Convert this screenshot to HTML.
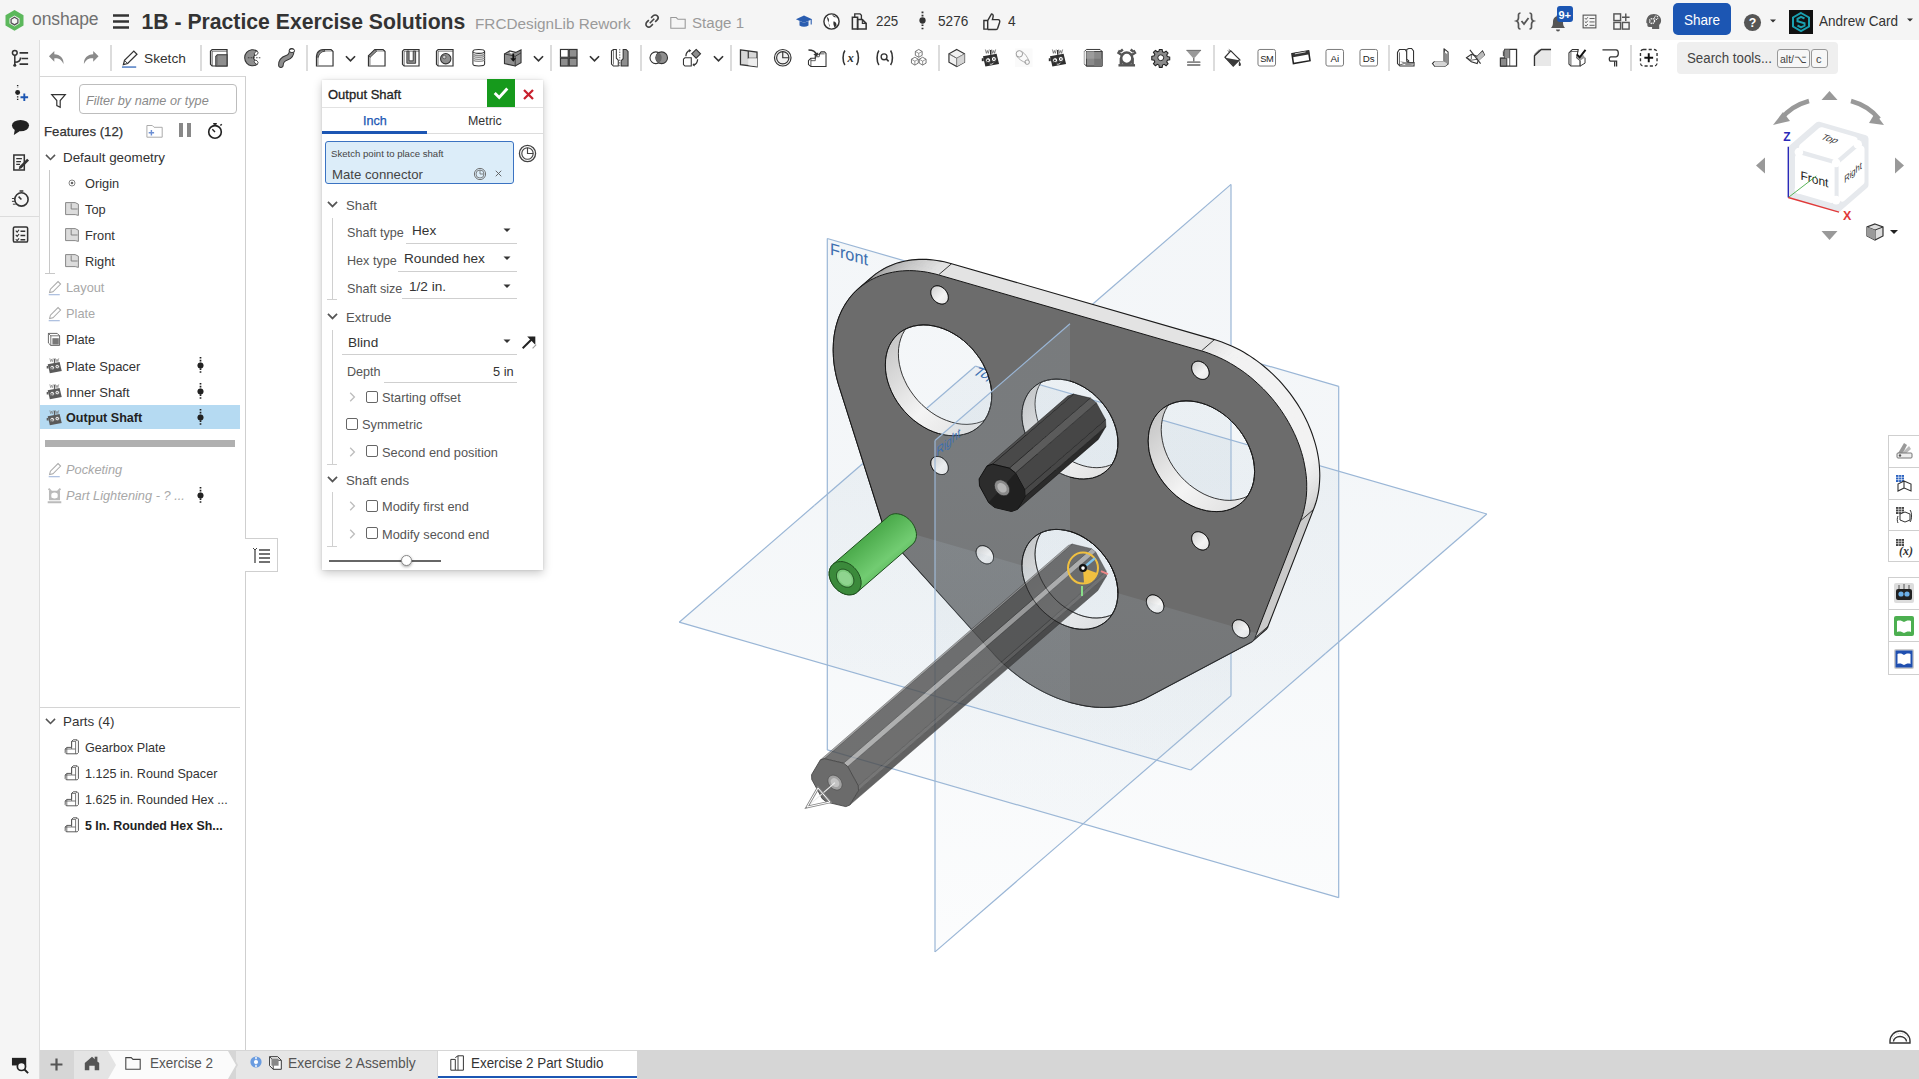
<!DOCTYPE html><html><head><meta charset='utf-8'><style>
*{box-sizing:border-box}
body{margin:0;width:1919px;height:1079px;overflow:hidden;position:relative;background:#fff;font-family:"Liberation Sans",sans-serif;color:#333}
.a{position:absolute}
.t{position:absolute;white-space:nowrap;line-height:1}
svg{position:absolute;overflow:visible}
</style></head><body>
<div class='a' style='left:0px;top:0px;width:1919px;height:40px;background:#f5f5f5'></div>
<div class='a' style='left:0px;top:40px;width:40px;height:1039px;background:#f5f5f5;border-right:1px solid #dedede'></div>
<div class='a' style='left:40px;top:40px;width:1879px;height:37px;background:#fff'></div>
<div class='a' style='left:40px;top:76px;width:206px;height:974px;background:#fff;border-right:1px solid #cfcfcf;border-top:1px solid #d6d6d6'></div>
<div class='a' style='left:0px;top:1050px;width:1919px;height:29px;background:#d6d6d6'></div>
<div class='a' style='left:0px;top:1050px;width:40px;height:29px;background:#f5f5f5;border-right:1px solid #dedede'></div>
<svg style='left:4px;top:9px' width='21' height='22' viewBox='0 0 21 22'><path d='M10.5 1l9 5.2v10.4l-9 5.2-9-5.2V6.2z' fill='#5cb85c'/><path d='M10.5 6.5l5 2.9v5.2l-5 2.9-5-2.9V9.4z' fill='#f5f5f5'/><path d='M10.5 8.3l3.4 2v3.6l-3.4 2-3.4-2v-3.6z' fill='none' stroke='#555' stroke-width='1.3'/></svg>
<div class='t' style='left:32px;top:11.2px;font-size:17.5px;color:#707070;font-weight:normal;font-style:normal;letter-spacing:-0.1px'>onshape</div>
<svg style='left:112px;top:13px' width='18' height='17' viewBox='0 0 18 17'><path d='M1 2.5h16M1 8.5h16M1 14.5h16' stroke='#333' stroke-width='2.6'/></svg>
<div class='t' style='left:141.5px;top:11.1px;font-size:21.2px;color:#333;font-weight:bold;font-style:normal;'>1B - Practice Exercise Solutions</div>
<div class='t' style='left:475px;top:15.8px;font-size:15.3px;color:#9a9a9a;font-weight:normal;font-style:normal;'>FRCDesignLib Rework</div>
<svg style='left:643.0px;top:12.0px' width='18' height='18' viewBox='0 0 20 20'><path d='M7.5 12.5l5-5' stroke='#444' stroke-width='1.8'/><path d='M9 6.5l2.3-2.3a3 3 0 0 1 4.5 4.5L13.5 11M11 13.5l-2.3 2.3a3 3 0 0 1-4.5-4.5L6.5 9' fill='none' stroke='#444' stroke-width='1.8'/></svg>
<svg style='left:669.0px;top:13.0px' width='18' height='18' viewBox='0 0 20 20'><path d='M2 5h6l2 2h8v10H2z' fill='none' stroke='#999' stroke-width='1.2'/></svg>
<div class='t' style='left:692px;top:14.6px;font-size:15.1px;color:#9a9a9a;font-weight:normal;font-style:normal;'>Stage 1</div>
<svg style='left:795.0px;top:12.0px' width='18' height='18' viewBox='0 0 20 20'><path d='M1 8l9-4 9 4-9 4z' fill='#2a5db0'/><path d='M5 10v5c3 2 7 2 10 0v-5l-5 2z' fill='#2a5db0'/><path d='M18 8v6' stroke='#2a5db0' stroke-width='1.2'/></svg>
<svg style='left:821.5px;top:11.5px' width='19' height='19' viewBox='0 0 20 20'><circle cx='10' cy='10' r='8' fill='#fff' stroke='#333' stroke-width='1.5'/><path d='M5 5c2 1 3 3 2 5s2 3 1 6M11 3c0 2 3 3 5 3M12 10c2 0 4 2 3 5l-2 1-1-3z' fill='#333'/></svg>
<svg style='left:849.5px;top:11.5px' width='19' height='19' viewBox='0 0 20 20'><path d='M2.5 5.5h5.5v12.5H2.5z' fill='none' stroke='#333' stroke-width='1.6'/><path d='M8 8h5l4 4v6H8z' fill='none' stroke='#333' stroke-width='1.6'/><path d='M5 5.5V2h5.5l1.5 1.5V8' fill='none' stroke='#333' stroke-width='1.4'/><path d='M13 8v4h4' fill='none' stroke='#333' stroke-width='1.2'/></svg>
<div class='t' style='left:875.5px;top:13.3px;font-size:15.3px;color:#333;font-weight:normal;font-style:normal;;transform:scaleX(0.87);transform-origin:0 0'>225</div>
<svg style='left:912.5px;top:10.5px' width='19' height='19' viewBox='0 0 20 20'><path d='M10 .5v19' stroke='#333' stroke-width='2' stroke-dasharray='1.8 1.6'/><circle cx='10' cy='10' r='3.3' fill='#333'/></svg>
<div class='t' style='left:937.5px;top:13.3px;font-size:15.3px;color:#333;font-weight:normal;font-style:normal;;transform:scaleX(0.89);transform-origin:0 0'>5276</div>
<svg style='left:981.5px;top:11.5px' width='19' height='19' viewBox='0 0 20 20'><path d='M2 9h4v9H2zM6 9l4-7c2 0 2 2 1.5 4L11 8h6c1.5 0 2 1.5 1.5 3l-2 6c-.4 1-1 1.5-2 1.5H6' fill='none' stroke='#333' stroke-width='1.5'/></svg>
<div class='t' style='left:1007.5px;top:13.3px;font-size:15.3px;color:#333;font-weight:normal;font-style:normal;;transform:scaleX(0.9);transform-origin:0 0'>4</div>
<svg style='left:1515.0px;top:11.0px' width='20' height='20' viewBox='0 0 20 20'><path d='M5.5 2C3 2 3.5 4 3.5 6.5S3 9.5 1.5 10c1.5.5 2 1 2 3.5S3 18 5.5 18M14.5 2c2.5 0 2 2 2 4.5s.5 3 2 3.5c-1.5.5-2 1-2 3.5s.5 4.5-2 4.5' fill='none' stroke='#555' stroke-width='1.7'/><path d='M6.5 10l2.5 3 4.5-6' fill='none' stroke='#555' stroke-width='1.8'/></svg>
<svg style='left:1548.0px;top:12.0px' width='20' height='20' viewBox='0 0 20 20'><path d='M3 16c1.5-1.5 2-3 2-6 0-3.5 2.2-6 5-6s5 2.5 5 6c0 3 .5 4.5 2 6z' fill='#555'/><path d='M8 17.5a2 2 0 0 0 4 0z' fill='#555'/><circle cx='10' cy='3.5' r='1.2' fill='#555'/></svg>
<div class='a' style='left:1557px;top:6px;width:16px;height:16px;background:#1c56b3;border-radius:3px'></div>
<div class='t' style='left:1558.5px;top:10.0px;font-size:11px;color:#fff;font-weight:bold;font-style:normal;'>9+</div>
<svg style='left:1580.5px;top:12.5px' width='17' height='17' viewBox='0 0 20 20'><rect x='2.5' y='2.5' width='15' height='15' fill='none' stroke='#555' stroke-width='1.3'/><path d='M4.5 6l1.5 1.5 2-2.5M4.5 10l1.5 1.5 2-2.5M4.5 14l1.5 1.5 2-2.5M10 6.5h6M10 10.5h6M10 14.5h6' fill='none' stroke='#555' stroke-width='1.1'/></svg>
<svg style='left:1611.5px;top:11.5px' width='19' height='19' viewBox='0 0 20 20'><rect x='2' y='2' width='7' height='7' fill='none' stroke='#555' stroke-width='1.5'/><rect x='2' y='11' width='7' height='7' fill='none' stroke='#555' stroke-width='1.5'/><rect x='11' y='11' width='7' height='7' fill='none' stroke='#555' stroke-width='1.5'/><path d='M14.5 1.5v8M10.5 5.5h8' stroke='#555' stroke-width='1.5'/></svg>
<svg style='left:1643.5px;top:11.5px' width='19' height='19' viewBox='0 0 20 20'><path d='M2.5 11.5C2 5.5 5.5 2 10.5 2c4.5 0 7.5 3.2 7.5 7 0 2.3-1 3.6-2 4.6V18H8.5v-2.2H5.3c-1.2 0-1.8-.8-1.8-2v-1.6z' fill='#606060'/><circle cx='8.5' cy='9.5' r='2.6' fill='none' stroke='#fff' stroke-width='1.4' stroke-dasharray='1.3 .8'/><circle cx='12.8' cy='6' r='1.8' fill='none' stroke='#fff' stroke-width='1.1' stroke-dasharray='1 .7'/></svg>
<div class='a' style='left:1673px;top:3px;width:58px;height:32px;background:#1c56b3;border-radius:5px'></div>
<div class='t' style='left:1684px;top:12.8px;font-size:14.3px;color:#fff;font-weight:normal;font-style:normal;;transform:scaleX(0.945);transform-origin:0 0'>Share</div>
<svg style='left:1742.5px;top:12.5px' width='19' height='19' viewBox='0 0 20 20'><circle cx='10' cy='10' r='9' fill='#555'/><text x='10' y='15' font-size='13' text-anchor='middle' font-family='Liberation Sans' font-weight='bold' fill='#fff'>?</text></svg>
<svg style='left:1768.0px;top:16.0px' width='10' height='10' viewBox='0 0 20 20'><path d='M4 7h12l-6 6z' fill='#333'/></svg>
<svg style='left:1789px;top:10px' width='24' height='24' viewBox='0 0 24 24'><rect width='24' height='24' fill='#111'/><path d='M12 3l8 4.5v9L12 21l-8-4.5v-9z' fill='none' stroke='#1aa0b0' stroke-width='2'/><path d='M15.5 8.5L12 6.8 8.5 8.8v2.4l7 2v2.4L12 17.3l-3.5-1.8' fill='none' stroke='#1aa0b0' stroke-width='2'/></svg>
<div class='t' style='left:1819px;top:13.9px;font-size:14.5px;color:#333;font-weight:normal;font-style:normal;;transform:scaleX(0.935);transform-origin:0 0'>Andrew Card</div>
<svg style='left:1905.0px;top:15.0px' width='10' height='10' viewBox='0 0 20 20'><path d='M4 7h12l-6 6z' fill='#333'/></svg>
<svg style='left:47.2px;top:48.2px' width='19.5' height='19.5' viewBox='0 0 20 20'><path d='M7.5 3L2 8.5 7.5 14v-3.5c4.5-.3 7.5 1.3 9.5 6 .3-6-3.5-9.8-9.5-10z' fill='#8a8a8a'/></svg>
<svg style='left:81.2px;top:48.2px' width='19.5' height='19.5' viewBox='0 0 20 20'><path d='M12.5 3L18 8.5 12.5 14v-3.5c-4.5-.3-7.5 1.3-9.5 6-.3-6 3.5-9.8 9.5-10z' fill='#8a8a8a'/></svg>
<svg style='left:209.2px;top:48.2px' width='19.5' height='19.5' viewBox='0 0 20 20'><path d='M1.5 3.2l1.7-1.7h15.3v17H3.2l-1.7-1.7z' fill='#fff' stroke='#333' stroke-width='1.2'/><path d='M3.2 3.2h15.3M3.2 3.2v15.3' fill='none' stroke='#333' stroke-width='.8'/><path d='M7 8.5l1.5-1.5h10v11.5H7z' fill='#8e8e8e' stroke='#333' stroke-width='1.1'/><path d='M8.5 7v11.5' stroke='#666' stroke-width='.7'/></svg>
<svg style='left:243.2px;top:48.2px' width='19.5' height='19.5' viewBox='0 0 20 20'><path d='M14.5 3.2A8.2 8.2 0 1 0 14.5 16.8L10.5 10z' fill='#8e8e8e' stroke='#333' stroke-width='1.1'/><ellipse cx='13.5' cy='5.5' rx='1.6' ry='2.3' transform='rotate(40 13.5 5.5)' fill='#fff' stroke='#333' stroke-width='.8'/><ellipse cx='13.5' cy='14.5' rx='1.6' ry='2.3' transform='rotate(-40 13.5 14.5)' fill='#fff' stroke='#333' stroke-width='.8'/><path d='M5 10h14' stroke='#333' stroke-width='.9' stroke-dasharray='1.6 1.2'/></svg>
<svg style='left:277.2px;top:48.2px' width='19.5' height='19.5' viewBox='0 0 20 20'><path d='M4 17.5c0-5 3-6.5 6-7.5s5-2.5 5-7' fill='none' stroke='#333' stroke-width='5.8' stroke-linecap='round'/><path d='M4 17.5c0-5 3-6.5 6-7.5s5-2.5 5-7' fill='none' stroke='#8e8e8e' stroke-width='3.8' stroke-linecap='round'/><ellipse cx='15.3' cy='2.8' rx='2.7' ry='1.9' fill='#fff' stroke='#333' stroke-width='1'/></svg>
<svg style='left:315.2px;top:48.2px' width='19.5' height='19.5' viewBox='0 0 20 20'><path d='M1.5 18.5V8.5C1.5 4.5 4.5 1.5 8.5 1.5h8l2 2v15z' fill='#fff' stroke='#333' stroke-width='1.2'/><path d='M3 17.5V9C3 5.5 5.5 3 9 3h9.5' fill='none' stroke='#333' stroke-width='.7'/><path d='M1.8 8.5C2.5 4.5 5 2 9 1.8l1.2 1.5C6.5 3.5 4 6 3.3 9.8z' fill='#8e8e8e' stroke='#333' stroke-width='.8'/></svg>
<svg style='left:343.5px;top:51.5px' width='13' height='13' viewBox='0 0 20 20'><path d='M3 6.5l7 7 7-7' fill='none' stroke='#333' stroke-width='2.6'/></svg>
<svg style='left:367.2px;top:48.2px' width='19.5' height='19.5' viewBox='0 0 20 20'><path d='M1.5 18.5V8l6.5-6.5h8.5l2 2v15z' fill='#fff' stroke='#333' stroke-width='1.2'/><path d='M3 17.5V9L9.5 3h9' fill='none' stroke='#333' stroke-width='.7'/><path d='M1.8 8L8 1.8l2 1.4L3.3 9.5z' fill='#8e8e8e' stroke='#333' stroke-width='.8'/></svg>
<svg style='left:401.2px;top:48.2px' width='19.5' height='19.5' viewBox='0 0 20 20'><path d='M1.5 3.2l1.7-1.7h15.3v17H3.2l-1.7-1.7z' fill='#fff' stroke='#333' stroke-width='1.2'/><path d='M3.2 3.2h15.3M3.2 3.2v15.3' fill='none' stroke='#333' stroke-width='.7'/><path d='M6 3.2v12.5h9V3.2h-2.5v10H8.3V3.2z' fill='#8e8e8e' stroke='#333' stroke-width='.9'/></svg>
<svg style='left:435.2px;top:48.2px' width='19.5' height='19.5' viewBox='0 0 20 20'><path d='M1.5 3.2l1.7-1.7h15.3v17H3.2l-1.7-1.7z' fill='#fff' stroke='#333' stroke-width='1.2'/><path d='M3.2 3.2h15.3M3.2 3.2v15.3' fill='none' stroke='#333' stroke-width='.7'/><circle cx='11' cy='11' r='5.3' fill='#8e8e8e' stroke='#333' stroke-width='1.1'/><circle cx='9.5' cy='9.3' r='1.8' fill='#ccc' stroke='#333' stroke-width='.6'/></svg>
<svg style='left:469.2px;top:48.2px' width='19.5' height='19.5' viewBox='0 0 20 20'><path d='M4 3.5v13c0 2.7 12 2.7 12 0v-13' fill='#fff' stroke='#333' stroke-width='1.1'/><ellipse cx='10' cy='3.5' rx='6' ry='2' fill='#fff' stroke='#333' stroke-width='1.1'/><path d='M4 6.5c3 1.6 9 1.6 12 0M4 8.5c3 1.6 9 1.6 12 0M4 10.5c3 1.6 9 1.6 12 0M4 12.5c3 1.6 9 1.6 12 0' fill='none' stroke='#8e8e8e' stroke-width='1.3'/></svg>
<svg style='left:503.2px;top:48.2px' width='19.5' height='19.5' viewBox='0 0 20 20'><path d='M1.5 6l5.5-3 6 1.5 5.5-2.5v13l-6 3.5L1.5 16z' fill='#8e8e8e' stroke='#333' stroke-width='1.1'/><path d='M1.5 6l11 2.5v10.5M12.5 8.5L18.5 5' fill='none' stroke='#333' stroke-width='.9'/><path d='M7 4.5l4 1' stroke='#fff' stroke-width='1.5'/><path d='M10.5 5.5v6.5' stroke='#111' stroke-width='1.8'/><path d='M7.5 10.5l3 3.5 3-3.5z' fill='#111'/></svg>
<svg style='left:531.5px;top:51.5px' width='13' height='13' viewBox='0 0 20 20'><path d='M3 6.5l7 7 7-7' fill='none' stroke='#333' stroke-width='2.6'/></svg>
<svg style='left:559.2px;top:48.2px' width='19.5' height='19.5' viewBox='0 0 20 20'><rect x='1.5' y='1.5' width='8' height='8' fill='#fff' stroke='#333' stroke-width='1.2'/><rect x='10.5' y='1.5' width='8' height='8' fill='#8e8e8e' stroke='#333' stroke-width='1.2'/><rect x='1.5' y='10.5' width='8' height='8' fill='#8e8e8e' stroke='#333' stroke-width='1.2'/><rect x='10.5' y='10.5' width='8' height='8' fill='#8e8e8e' stroke='#333' stroke-width='1.2'/></svg>
<svg style='left:587.5px;top:51.5px' width='13' height='13' viewBox='0 0 20 20'><path d='M3 6.5l7 7 7-7' fill='none' stroke='#333' stroke-width='2.6'/></svg>
<svg style='left:610.2px;top:48.2px' width='19.5' height='19.5' viewBox='0 0 20 20'><path d='M1.5 3l2-1.5h3v9l2 2v6h-5l-2-2z' fill='#fff' stroke='#333' stroke-width='1.1'/><path d='M3.5 1.5v15.5' stroke='#333' stroke-width='.7'/><path d='M11.5 13l2-2V1.5h3l2 2V18.5h-7z' fill='#8e8e8e' stroke='#333' stroke-width='1.1'/><path d='M10 1v18' stroke='#333' stroke-width='.8' stroke-dasharray='1.5 1.2'/></svg>
<svg style='left:649.2px;top:48.2px' width='19.5' height='19.5' viewBox='0 0 20 20'><circle cx='7' cy='10' r='6' fill='#fff' stroke='#333' stroke-width='1.1'/><circle cx='13' cy='10' r='6' fill='#8e8e8e' stroke='#333' stroke-width='1.1'/><path d='M10 4.8a6 6 0 0 1 0 10.4a6 6 0 0 1 0-10.4z' fill='#6a6a6a'/></svg>
<svg style='left:682.2px;top:48.2px' width='19.5' height='19.5' viewBox='0 0 20 20'><path d='M1.5 11.5l1.5-1.5h6.5v8.5H3l-1.5-1.5z' fill='#fff' stroke='#333' stroke-width='1.1'/><path d='M14.5 1.5l4.5 4.5-4.5 4.5L10 6z' fill='#8e8e8e' stroke='#333' stroke-width='1.1'/><path d='M4 8.5c0-3 1.5-5 4-6' fill='none' stroke='#333' stroke-width='1.3'/><path d='M7 1l2.5 1.5-2 2z' fill='#333'/><path d='M16 11.5c0 3-1.5 5-4 6' fill='none' stroke='#333' stroke-width='1.3'/><path d='M13 19l-2.5-1.5 2-2z' fill='#333'/></svg>
<svg style='left:711.5px;top:51.5px' width='13' height='13' viewBox='0 0 20 20'><path d='M3 6.5l7 7 7-7' fill='none' stroke='#333' stroke-width='2.6'/></svg>
<svg style='left:739.2px;top:48.2px' width='19.5' height='19.5' viewBox='0 0 20 20'><path d='M1.5 2l17 2.2v15l-17-2.2z' fill='#d8d8d8' stroke='#333' stroke-width='1.3'/><path d='M9.5 3v7.5h9' fill='none' stroke='#333' stroke-width='1.2'/><path d='M9.5 10.5h9v8.5l-9-1.2z' fill='#eee'/></svg>
<svg style='left:773.2px;top:48.2px' width='19.5' height='19.5' viewBox='0 0 20 20'><circle cx='10' cy='10' r='8.5' fill='#f2f2f2' stroke='#333' stroke-width='1.2'/><circle cx='10' cy='10' r='6.3' fill='none' stroke='#333' stroke-width='1.2'/><path d='M10 3.7V10h6.3' fill='none' stroke='#333' stroke-width='1.2'/></svg>
<svg style='left:807.2px;top:48.2px' width='19.5' height='19.5' viewBox='0 0 20 20'><path d='M1.5 13l2.5-2.5h4.5V6.5h4l2-2.5h3.5l1.5 1.5v13.5H4l-2.5-2z' fill='#fff' stroke='#333' stroke-width='1.1'/><path d='M4 10.5v8M4 13h4.5V9h4l.5-3h5' fill='none' stroke='#333' stroke-width='.8'/><path d='M1.5 2c4 0 7 1 8.5 5' fill='none' stroke='#333' stroke-width='1.5'/><path d='M6.5 6.5l4 2.5 1-4.5z' fill='#333'/></svg>
<svg style='left:841.2px;top:48.2px' width='19.5' height='19.5' viewBox='0 0 20 20'><path d='M4 2.5C1.5 6 1.5 14 4 17.5M16 2.5c2.5 3.5 2.5 11.5 0 15' fill='none' stroke='#333' stroke-width='1.6'/><text x='10' y='14.5' font-size='13' text-anchor='middle' font-family='Liberation Serif' font-style='italic' font-weight='bold' fill='#333'>x</text></svg>
<svg style='left:875.2px;top:48.2px' width='19.5' height='19.5' viewBox='0 0 20 20'><path d='M4 2.5C1.5 6 1.5 14 4 17.5M16 2.5c2.5 3.5 2.5 11.5 0 15' fill='none' stroke='#333' stroke-width='1.6'/><circle cx='9.3' cy='9' r='3' fill='none' stroke='#333' stroke-width='1.4'/><path d='M11.5 11.2l2.5 2.5' stroke='#333' stroke-width='1.6'/></svg>
<svg style='left:909.2px;top:48.2px' width='19.5' height='19.5' viewBox='0 0 20 20'><path d='M10 1.5l3.5 2v4l-3.5 2-3.5-2v-4zM6 9.5l3.5 2v4L6 17.5l-3.5-2v-4zM14 9.5l3.5 2v4L14 17.5l-3.5-2v-4z' fill='#fff' stroke='#666' stroke-width='.9'/><path d='M6.5 3.5l3.5 2 3.5-2M10 5.5v4M2.5 11.5l3.5 2 3.5-2M6 13.5v4M10.5 11.5l3.5 2 3.5-2M14 13.5v4' fill='none' stroke='#666' stroke-width='.7'/></svg>
<svg style='left:947.2px;top:48.2px' width='19.5' height='19.5' viewBox='0 0 20 20'><path d='M10 1.5l8 4.5v8.5l-8 4.5-8-4.5V6z' fill='#f0f0f0' stroke='#333' stroke-width='1.2'/><path d='M2 6l8 4.5 8-4.5M10 10.5V19' fill='none' stroke='#333' stroke-width='.8'/><path d='M10 10.5l8-4.5v8.5L10 19z' fill='#d5d5d5'/><path d='M2 6l8 4.5 8-4.5M10 10.5V19' fill='none' stroke='#777' stroke-width='.6'/></svg>
<svg style='left:981.2px;top:48.2px' width='19.5' height='19.5' viewBox='0 0 20 20'><path d='M2 8.5l14-2.5 2.5 10.5-14 2.5z' fill='#2e2e2e'/><rect x='.8' y='10.5' width='2' height='3' fill='#2e2e2e'/><circle cx='7.3' cy='12.5' r='2.6' fill='#fff' stroke='#2e2e2e'/><circle cx='13.2' cy='11.3' r='2.6' fill='#fff' stroke='#2e2e2e'/><circle cx='7' cy='12.8' r='1' fill='#2e2e2e'/><path d='M12.3 11.3h1.8M13.2 10.4v1.8' stroke='#2e2e2e' stroke-width='.7'/><path d='M9 16.5c1.5.5 3 0 4-1.5' fill='none' stroke='#fff' stroke-width='.8'/><path d='M4.5 1.5l1 4 1-3 1 3 1-4M11 1.5l1 4 1-3 1 3 1-4' fill='none' stroke='#555' stroke-width='.7'/><path d='M10 2v5' stroke='#2e2e2e' stroke-width='1.5'/></svg>
<svg style='left:1014.2px;top:48.2px' width='19.5' height='19.5' viewBox='0 0 20 20'><rect x='1' y='.5' width='18' height='19' fill='#fafafa'/><circle cx='5.5' cy='6' r='3.3' fill='none' stroke='#999' stroke-width='1'/><circle cx='13.5' cy='14.5' r='2.3' fill='none' stroke='#999' stroke-width='1'/><path d='M2.5 8c3 4 6 6 10 7M8.5 4c3 2 5 5 6.5 8.5' fill='none' stroke='#999' stroke-width='.8'/></svg>
<svg style='left:1048.2px;top:48.2px' width='19.5' height='19.5' viewBox='0 0 20 20'><path d='M2 8.5l14-2.5 2.5 10.5-14 2.5z' fill='#2e2e2e'/><rect x='.8' y='10.5' width='2' height='3' fill='#2e2e2e'/><circle cx='7.3' cy='12.5' r='2.6' fill='#fff' stroke='#2e2e2e'/><circle cx='13.2' cy='11.3' r='2.6' fill='#fff' stroke='#2e2e2e'/><circle cx='7' cy='12.8' r='1' fill='#2e2e2e'/><path d='M12.3 11.3h1.8M13.2 10.4v1.8' stroke='#2e2e2e' stroke-width='.7'/><path d='M9 16.5c1.5.5 3 0 4-1.5' fill='none' stroke='#fff' stroke-width='.8'/><path d='M4.5 1.5l1 4 1-3 1 3 1-4M11 1.5l1 4 1-3 1 3 1-4' fill='none' stroke='#555' stroke-width='.7'/><path d='M10 2v5' stroke='#2e2e2e' stroke-width='1.5'/></svg>
<svg style='left:1083.2px;top:48.2px' width='19.5' height='19.5' viewBox='0 0 20 20'><path d='M1.5 3.5l2-2h14l2 2v15h-16l-2-2z' fill='#fff' stroke='#333' stroke-width='1'/><rect x='3.5' y='3.5' width='16' height='15' fill='#8a8a8a' stroke='#333' stroke-width='.9'/><rect x='3.5' y='3.5' width='8' height='7.5' fill='#9c9c9c'/><rect x='11.5' y='11' width='8' height='7.5' fill='#777'/><path d='M1.5 3.5v13' stroke='#bbb' stroke-width='1.5'/></svg>
<svg style='left:1117.2px;top:48.2px' width='19.5' height='19.5' viewBox='0 0 20 20'><path d='M3 2.5l-1.5 2.5 3 2 M17 2.5l1.5 2.5-3 2' fill='none' stroke='#555' stroke-width='2.4'/><circle cx='10' cy='10.5' r='5.8' fill='none' stroke='#555' stroke-width='2.6'/><path d='M4 10.5V17M16 10.5V17' stroke='#555' stroke-width='2.6'/><rect x='1.5' y='16.5' width='17' height='2.5' fill='#555'/><path d='M3 4l3-2.5M17 4l-3-2.5' stroke='#555' stroke-width='2.6'/></svg>
<svg style='left:1151.2px;top:48.2px' width='19.5' height='19.5' viewBox='0 0 20 20'><path d='M8.6 1.5h2.8l.5 2.4 1.6.7 2-1.4 2 2-1.4 2 .7 1.6 2.4.5v2.8l-2.4.5-.7 1.6 1.4 2-2 2-2-1.4-1.6.7-.5 2.4H8.6l-.5-2.4-1.6-.7-2 1.4-2-2 1.4-2-.7-1.6-2.4-.5V8.6l2.4-.5.7-1.6-1.4-2 2-2 2 1.4 1.6-.7z' fill='#8a8a8a' stroke='#222' stroke-width='1.1'/><circle cx='10' cy='10' r='3' fill='#fff' stroke='#222' stroke-width='1'/></svg>
<svg style='left:1184.2px;top:48.2px' width='19.5' height='19.5' viewBox='0 0 20 20'><path d='M2.5 2.5h15L11 10H9z' fill='#9a9a9a'/><path d='M2.5 2.5h15' stroke='#777' stroke-width='1.2'/><path d='M10 10v4' stroke='#777' stroke-width='1.5'/><rect x='3' y='13.5' width='14' height='2' rx='1' fill='#888'/><rect x='3' y='16.5' width='14' height='2' rx='1' fill='#888'/></svg>
<svg style='left:1223.2px;top:48.2px' width='19.5' height='19.5' viewBox='0 0 20 20'><path d='M6 1.5l12 11M5 2.5l11 11' stroke='#333' stroke-width='.9'/><path d='M2 9.5l6-6.5 9 9-6.5 6.5z' fill='#fff' stroke='#333' stroke-width='1.2'/><path d='M2.2 10l14.3 2.5-5.8 6z' fill='#3a3a3a'/><path d='M16.5 13c1.2 2 2.5 3.5 1.6 5-.9 1.2-2.3.3-2-1z' fill='#3a3a3a'/></svg>
<svg style='left:1257.2px;top:48.2px' width='19.5' height='19.5' viewBox='0 0 20 20'><rect x='1' y='1.5' width='18' height='17' rx='2' fill='#fff' stroke='#777' stroke-width='1'/><text x='10' y='14' font-size='9.5' text-anchor='middle' font-family='Liberation Sans' fill='#222' letter-spacing='-.4'>SM</text></svg>
<svg style='left:1291.2px;top:48.2px' width='19.5' height='19.5' viewBox='0 0 20 20'><path d='M1 6l17-3 1.5 10-17 3z' fill='#fff' stroke='#222' stroke-width='1.6'/><path d='M1.5 5.5l17-3 .5 4-17 3z' fill='#333'/><path d='M4 6l11-2' stroke='#fff' stroke-width='.8'/></svg>
<svg style='left:1325.2px;top:48.2px' width='19.5' height='19.5' viewBox='0 0 20 20'><rect x='1' y='1.5' width='18' height='17' rx='2' fill='#fff' stroke='#777' stroke-width='1'/><text x='10' y='14.2' font-size='10' text-anchor='middle' font-family='Liberation Sans' fill='#222'>Ai</text></svg>
<svg style='left:1359.2px;top:48.2px' width='19.5' height='19.5' viewBox='0 0 20 20'><rect x='1' y='1.5' width='18' height='17' rx='2' fill='#fff' stroke='#777' stroke-width='1'/><text x='10' y='14.2' font-size='10' text-anchor='middle' font-family='Liberation Sans' fill='#222'>Ds</text></svg>
<svg style='left:1396.2px;top:48.2px' width='19.5' height='19.5' viewBox='0 0 20 20'><path d='M1.5 4.5l2-3h6l1.5 2.5v9.5l2 1.5h5.5v3.5H4l-2.5-2.5z' fill='#fff' stroke='#333' stroke-width='1.1'/><path d='M11 1.5l2-1h3l2 2.5v12h-5v-2l-2-1.5z' fill='#fff' stroke='#333' stroke-width='1.1'/><path d='M3.5 4.5v13l9.5-3' fill='none' stroke='#333' stroke-width='.8'/><path d='M4 13.5l7 4.5 7-1v-2h-5z' fill='#8e8e8e'/></svg>
<svg style='left:1431.2px;top:48.2px' width='19.5' height='19.5' viewBox='0 0 20 20'><path d='M13.5 1l4 3v12.5l-3.5 2.5H4l-2.5-3 2-2h10z' fill='#fff' stroke='#333' stroke-width='1.1'/><path d='M13.5 1v12.5L17.5 16.5' fill='none' stroke='#333' stroke-width='.8'/><path d='M3.5 13.5h10l3.5 3-3 2.5H4z' fill='#d5d5d5'/><path d='M13.5 4l4 3v9.5l-4-3z' fill='#8e8e8e'/></svg>
<svg style='left:1465.2px;top:48.2px' width='19.5' height='19.5' viewBox='0 0 20 20'><path d='M1.5 10l5-3.5 6 2 5.5-5.5 2 4-6.5 6-1 3-6-2z' fill='#fff' stroke='#333' stroke-width='1.1'/><path d='M6.5 6.5v5M12.5 8.5v4M1.5 10l5 2.5 6-1' fill='none' stroke='#333' stroke-width='.8'/><path d='M12.5 8.5l5.5-5 2 4-6.5 6z' fill='#bbb'/><path d='M5 2l11 14' stroke='#333' stroke-width='1.1'/></svg>
<svg style='left:1499.2px;top:48.2px' width='19.5' height='19.5' viewBox='0 0 20 20'><path d='M6 1.5h12v17H1.5v-8H6z' fill='#fff' stroke='#333' stroke-width='1.3'/><path d='M6 1.5l-1.5 2v5' fill='none' stroke='#333'/><path d='M1.5 10.5h6.5v8H1.5z' fill='#8a8a8a' stroke='#333' stroke-width='1'/><path d='M6 1.5h5v9H6z' fill='#8a8a8a'/><path d='M11 1.5v17' stroke='#333' stroke-width='.8'/></svg>
<svg style='left:1533.2px;top:48.2px' width='19.5' height='19.5' viewBox='0 0 20 20'><path d='M1.5 18.5V8l7-6.5h10v17z' fill='#e8e8e8'/><path d='M1.5 8l7-6.5H6L1.5 6z' fill='#8e8e8e'/><path d='M1.5 18.5V8l7-6.5h10' fill='none' stroke='#333' stroke-width='1.4'/></svg>
<svg style='left:1567.2px;top:48.2px' width='19.5' height='19.5' viewBox='0 0 20 20'><path d='M3.5 3.5l2-2h6L10 10l3.5 3v5.5H4L2 16.5V5z' fill='#fff' stroke='#333' stroke-width='1.1'/><path d='M3.5 3.5h8M4 4v14' fill='none' stroke='#333' stroke-width='.8'/><path d='M10 10l3.5 3 5-3-2-3z' fill='#999'/><path d='M13.5 13v5.5l5-3V10' fill='#fff' stroke='#333'/><path d='M10 6.5l3 3 6-7.5' fill='none' stroke='#111' stroke-width='2'/></svg>
<svg style='left:1601.2px;top:48.2px' width='19.5' height='19.5' viewBox='0 0 20 20'><path d='M1.5 2h14c3 0 3 7 0 7h-5.5c-2 0-2 4.5 0 4.5h6v5.5' fill='none' stroke='#333' stroke-width='1.3'/><path d='M14 13.5v5.5' stroke='#333' stroke-width='1.3'/></svg>
<svg style='left:1639.2px;top:48.2px' width='19.5' height='19.5' viewBox='0 0 20 20'><rect x='1.5' y='1.5' width='17' height='17' rx='3' fill='none' stroke='#333' stroke-width='1.4' stroke-dasharray='3.2 2.2'/><path d='M10 5.5v9M5.5 10h9' stroke='#111' stroke-width='2'/></svg>
<div class='a' style='left:110px;top:45px;width:2px;height:26px;background:#dcdcdc'></div>
<div class='a' style='left:200px;top:45px;width:2px;height:26px;background:#dcdcdc'></div>
<div class='a' style='left:306px;top:45px;width:2px;height:26px;background:#dcdcdc'></div>
<div class='a' style='left:550px;top:45px;width:2px;height:26px;background:#dcdcdc'></div>
<div class='a' style='left:640px;top:45px;width:2px;height:26px;background:#dcdcdc'></div>
<div class='a' style='left:730px;top:45px;width:2px;height:26px;background:#dcdcdc'></div>
<div class='a' style='left:938px;top:45px;width:2px;height:26px;background:#dcdcdc'></div>
<div class='a' style='left:1213px;top:45px;width:2px;height:26px;background:#dcdcdc'></div>
<div class='a' style='left:1388px;top:45px;width:2px;height:26px;background:#dcdcdc'></div>
<div class='a' style='left:1630px;top:45px;width:2px;height:26px;background:#dcdcdc'></div>
<svg style='left:120.5px;top:48.5px' width='19' height='19' viewBox='0 0 20 20'><path d='M2.5 16.5l1.2-4.5 9.8-9.8 3.3 3.3-9.8 9.8z' fill='none' stroke='#333' stroke-width='1.3'/><path d='M3.7 12l3.3 3.3' stroke='#333'/><path d='M1 19h15' stroke='#2a62b8' stroke-width='1.3'/></svg>
<div class='t' style='left:144px;top:52.1px;font-size:13.7px;color:#333;font-weight:normal;font-style:normal;'>Sketch</div>
<div class='a' style='left:1677px;top:42px;width:161px;height:32px;background:#efefef;border-radius:4px'></div>
<div class='t' style='left:1687px;top:50.6px;font-size:14.0px;color:#444;font-weight:normal;font-style:normal;;transform:scaleX(0.95);transform-origin:0 0'>Search tools...</div>
<div class='a' style='left:1777px;top:49px;width:33px;height:19px;border:1px solid #999;border-radius:3px;background:#f7f7f7'></div>
<div class='t' style='left:1780px;top:54.0px;font-size:10.5px;color:#444;font-weight:normal;font-style:normal;'>alt/⌥</div>
<div class='a' style='left:1811px;top:49px;width:17px;height:19px;border:1px solid #999;border-radius:3px;background:#f7f7f7'></div>
<div class='t' style='left:1816px;top:53.5px;font-size:11px;color:#444;font-weight:normal;font-style:normal;'>c</div>
<svg style='left:10.5px;top:48.5px' width='19' height='19' viewBox='0 0 20 20'><circle cx='4' cy='4' r='2.5' fill='none' stroke='#333' stroke-width='1.6'/><path d='M4 6.5V17M4 14c4 0 6-2 6-5' fill='none' stroke='#333' stroke-width='1.6'/><circle cx='4' cy='17' r='1.6' fill='#333'/><path d='M9 4h9M11 10h7M9 16h9' stroke='#333' stroke-width='1.8'/></svg>
<svg style='left:10.5px;top:83.5px' width='19' height='19' viewBox='0 0 20 20'><path d='M7 1v3M7 13v4' stroke='#222' stroke-width='1.5' stroke-dasharray='1.3 1.3'/><circle cx='7' cy='9' r='2.6' fill='#222'/><path d='M14 10v8M10 14h8' stroke='#1c56b3' stroke-width='2'/></svg>
<svg style='left:10.5px;top:117.5px' width='19' height='19' viewBox='0 0 20 20'><ellipse cx='10' cy='8' rx='9' ry='6' fill='#222'/><path d='M4 12l-1 6 6-4z' fill='#222'/></svg>
<svg style='left:10.5px;top:152.5px' width='19' height='19' viewBox='0 0 20 20'><path d='M3 2h11v16H3z' fill='none' stroke='#333' stroke-width='1.6'/><path d='M5.5 6h6M5.5 9h5M5.5 12h4' stroke='#333' stroke-width='1.3'/><path d='M9 14l8-8 2 2-8 8-3 1z' fill='#333'/></svg>
<svg style='left:10.5px;top:188.5px' width='19' height='19' viewBox='0 0 20 20'><circle cx='11' cy='11' r='7' fill='none' stroke='#333' stroke-width='1.7'/><path d='M9 2h4M11 11l-3-3' stroke='#333' stroke-width='1.6'/><path d='M1 10h3M1 13h3M2 16h3' stroke='#333' stroke-width='1'/></svg>
<div class='a' style='left:0px;top:216px;width:39px;height:1px;background:#dcdcdc'></div>
<svg style='left:10.5px;top:224.5px' width='19' height='19' viewBox='0 0 20 20'><rect x='2.5' y='2' width='15' height='16' rx='1.5' fill='none' stroke='#333' stroke-width='1.6'/><path d='M5 6l1.5 1.5 2-2.5M5 10.5l1.5 1.5 2-2.5M5 15l1.5 1.5 2-2.5' fill='none' stroke='#333' stroke-width='1.1'/><path d='M10 6.5h5M10 11h5M10 15.5h5' stroke='#333' stroke-width='1.6'/></svg>
<svg style='left:10.5px;top:1054.5px' width='19' height='19' viewBox='0 0 20 20'><path d='M1 3h15v8H1z' fill='#222'/><circle cx='11' cy='12' r='4.3' fill='#f5f5f5' stroke='#222' stroke-width='1.8'/><path d='M14 15l4 4' stroke='#222' stroke-width='2'/></svg>
<div class='a' style='left:79px;top:84px;width:158px;height:30px;border:1px solid #bdbdbd;border-radius:4px;background:#fff'></div>
<svg style='left:49.5px;top:91.5px' width='17' height='17' viewBox='0 0 20 20'><path d='M2 3h16l-6 7v8l-4-2v-6z' fill='none' stroke='#333' stroke-width='1.4'/></svg>
<div class='t' style='left:86px;top:94.5px;font-size:12.7px;color:#8a8a8a;font-weight:normal;font-style:italic;'>Filter by name or type</div>
<div class='t' style='left:44px;top:124.6px;font-size:13.2px;color:#333;font-weight:normal;font-style:normal;-webkit-text-stroke:0.25px #333'>Features (12)</div>
<svg style='left:146.0px;top:121.0px' width='18' height='18' viewBox='0 0 20 20'><path d='M1 5h6l2 2h9v11H1z' fill='none' stroke='#aaa' stroke-width='1.1'/><path d='M6 10v6M3 13h6' stroke='#6c8fd4' stroke-width='1.6'/></svg>
<div class='a' style='left:179px;top:123px;width:4px;height:14px;background:#888'></div>
<div class='a' style='left:187px;top:123px;width:4px;height:14px;background:#888'></div>
<svg style='left:206.0px;top:122.0px' width='18' height='18' viewBox='0 0 20 20'><circle cx='10' cy='11' r='7' fill='none' stroke='#222' stroke-width='1.8'/><path d='M8 2h4M10 2v2M10 11l-3-3M16 4l1.5-1.5' stroke='#222' stroke-width='1.6'/></svg>
<svg style='left:43.5px;top:150.5px' width='13' height='13' viewBox='0 0 20 20'><path d='M3 6l7 7 7-7' fill='none' stroke='#555' stroke-width='2.4'/></svg>
<div class='t' style='left:63px;top:151.4px;font-size:13.4px;color:#333;font-weight:normal;font-style:normal;'>Default geometry</div>
<div class='a' style='left:49px;top:170px;width:1px;height:103px;background:#c8c8c8'></div>
<div class='a' style='left:45px;top:273px;width:10px;height:1px;background:#c8c8c8'></div>
<svg style='left:66.0px;top:177.0px' width='12' height='12' viewBox='0 0 20 20'><circle cx='10' cy='10' r='5' fill='none' stroke='#666' stroke-width='1.3'/><circle cx='10' cy='10' r='2.2' fill='#666'/></svg>
<div class='t' style='left:85px;top:177.9px;font-size:12.8px;color:#333;font-weight:normal;font-style:normal;'>Origin</div>
<svg style='left:64.0px;top:201.0px' width='16' height='16' viewBox='0 0 20 20'><path d='M2 2h12l4 2v14l-4-1H2z' fill='#dcdcdc' stroke='#7a7a7a' stroke-width='1.1'/><path d='M9 3v7h8' fill='none' stroke='#7a7a7a' stroke-width='1.1'/></svg>
<div class='t' style='left:85px;top:203.9px;font-size:12.8px;color:#333;font-weight:normal;font-style:normal;'>Top</div>
<svg style='left:64.0px;top:227.0px' width='16' height='16' viewBox='0 0 20 20'><path d='M2 2h12l4 2v14l-4-1H2z' fill='#dcdcdc' stroke='#7a7a7a' stroke-width='1.1'/><path d='M9 3v7h8' fill='none' stroke='#7a7a7a' stroke-width='1.1'/></svg>
<div class='t' style='left:85px;top:229.9px;font-size:12.8px;color:#333;font-weight:normal;font-style:normal;'>Front</div>
<svg style='left:64.0px;top:253.0px' width='16' height='16' viewBox='0 0 20 20'><path d='M2 2h12l4 2v14l-4-1H2z' fill='#dcdcdc' stroke='#7a7a7a' stroke-width='1.1'/><path d='M9 3v7h8' fill='none' stroke='#7a7a7a' stroke-width='1.1'/></svg>
<div class='t' style='left:85px;top:255.9px;font-size:12.8px;color:#333;font-weight:normal;font-style:normal;'>Right</div>
<svg style='left:46.5px;top:278.5px' width='17' height='17' viewBox='0 0 20 20'><path d='M3 16l1-4 9-9 3 3-9 9z' fill='none' stroke='#aaa' stroke-width='1.2'/><path d='M2 18.5h13' stroke='#9ab0d8' stroke-width='1.2'/></svg>
<div class='t' style='left:66px;top:281.9px;font-size:12.8px;color:#a8a8a8;font-weight:normal;font-style:normal;'>Layout</div>
<svg style='left:46.5px;top:304.5px' width='17' height='17' viewBox='0 0 20 20'><path d='M3 16l1-4 9-9 3 3-9 9z' fill='none' stroke='#aaa' stroke-width='1.2'/><path d='M2 18.5h13' stroke='#9ab0d8' stroke-width='1.2'/></svg>
<div class='t' style='left:66px;top:307.9px;font-size:12.8px;color:#a8a8a8;font-weight:normal;font-style:normal;'>Plate</div>
<svg style='left:46.0px;top:331.0px' width='16' height='16' viewBox='0 0 20 20'><path d='M3 3h11l3 3v12H6l-3-3z' fill='#fff' stroke='#555' stroke-width='1.1'/><path d='M3 3l3 3h11M6 6v12' fill='none' stroke='#555'/><rect x='8' y='9' width='8' height='8' fill='#777'/></svg>
<div class='t' style='left:66px;top:333.9px;font-size:12.8px;color:#333;font-weight:normal;font-style:normal;'>Plate</div>
<div class='a' style='left:40px;top:405px;width:200px;height:24px;background:#b5daf2'></div>
<svg style='left:45.5px;top:356.5px' width='17' height='17' viewBox='0 0 20 20'><path d='M2 8.5l14-2.5 2.5 10.5-14 2.5z' fill='#5a5a5a'/><rect x='.8' y='10.5' width='2' height='3' fill='#5a5a5a'/><circle cx='7.3' cy='12.5' r='2.6' fill='#eee' stroke='#5a5a5a'/><circle cx='13.2' cy='11.3' r='2.6' fill='#eee' stroke='#5a5a5a'/><circle cx='7' cy='12.8' r='1' fill='#5a5a5a'/><path d='M12.3 11.3h1.8M13.2 10.4v1.8' stroke='#5a5a5a' stroke-width='.7'/><path d='M4.5 1.5l1 4 1-3 1 3 1-4M11 1.5l1 4 1-3 1 3 1-4' fill='none' stroke='#777' stroke-width='.7'/><path d='M10 2v5' stroke='#5a5a5a' stroke-width='1.5'/></svg>
<div class='t' style='left:66px;top:359.7px;font-size:13.0px;color:#333;font-weight:normal;font-style:normal;'>Plate Spacer</div>
<svg style='left:190.5px;top:355.5px' width='19' height='19' viewBox='0 0 20 20'><path d='M10 1v18' stroke='#222' stroke-width='1.8' stroke-dasharray='1.7 1.3'/><circle cx='10' cy='10' r='3.2' fill='#222'/></svg>
<svg style='left:45.5px;top:382.5px' width='17' height='17' viewBox='0 0 20 20'><path d='M2 8.5l14-2.5 2.5 10.5-14 2.5z' fill='#5a5a5a'/><rect x='.8' y='10.5' width='2' height='3' fill='#5a5a5a'/><circle cx='7.3' cy='12.5' r='2.6' fill='#eee' stroke='#5a5a5a'/><circle cx='13.2' cy='11.3' r='2.6' fill='#eee' stroke='#5a5a5a'/><circle cx='7' cy='12.8' r='1' fill='#5a5a5a'/><path d='M12.3 11.3h1.8M13.2 10.4v1.8' stroke='#5a5a5a' stroke-width='.7'/><path d='M4.5 1.5l1 4 1-3 1 3 1-4M11 1.5l1 4 1-3 1 3 1-4' fill='none' stroke='#777' stroke-width='.7'/><path d='M10 2v5' stroke='#5a5a5a' stroke-width='1.5'/></svg>
<div class='t' style='left:66px;top:385.7px;font-size:13.0px;color:#333;font-weight:normal;font-style:normal;'>Inner Shaft</div>
<svg style='left:190.5px;top:381.5px' width='19' height='19' viewBox='0 0 20 20'><path d='M10 1v18' stroke='#222' stroke-width='1.8' stroke-dasharray='1.7 1.3'/><circle cx='10' cy='10' r='3.2' fill='#222'/></svg>
<svg style='left:45.5px;top:408.5px' width='17' height='17' viewBox='0 0 20 20'><path d='M2 8.5l14-2.5 2.5 10.5-14 2.5z' fill='#5a5a5a'/><rect x='.8' y='10.5' width='2' height='3' fill='#5a5a5a'/><circle cx='7.3' cy='12.5' r='2.6' fill='#eee' stroke='#5a5a5a'/><circle cx='13.2' cy='11.3' r='2.6' fill='#eee' stroke='#5a5a5a'/><circle cx='7' cy='12.8' r='1' fill='#5a5a5a'/><path d='M12.3 11.3h1.8M13.2 10.4v1.8' stroke='#5a5a5a' stroke-width='.7'/><path d='M4.5 1.5l1 4 1-3 1 3 1-4M11 1.5l1 4 1-3 1 3 1-4' fill='none' stroke='#777' stroke-width='.7'/><path d='M10 2v5' stroke='#5a5a5a' stroke-width='1.5'/></svg>
<div class='t' style='left:66px;top:412.1px;font-size:12.6px;color:#222;font-weight:bold;font-style:normal;'>Output Shaft</div>
<svg style='left:190.5px;top:407.5px' width='19' height='19' viewBox='0 0 20 20'><path d='M10 1v18' stroke='#222' stroke-width='1.8' stroke-dasharray='1.7 1.3'/><circle cx='10' cy='10' r='3.2' fill='#222'/></svg>
<div class='a' style='left:45px;top:440px;width:190px;height:7px;background:#b0b0b0'></div>
<svg style='left:46.5px;top:460.5px' width='17' height='17' viewBox='0 0 20 20'><path d='M3 16l1-4 9-9 3 3-9 9z' fill='none' stroke='#aaa' stroke-width='1.2'/><path d='M2 18.5h13' stroke='#9ab0d8' stroke-width='1.2'/></svg>
<div class='t' style='left:66px;top:463.9px;font-size:12.8px;color:#a8a8a8;font-weight:normal;font-style:italic;'>Pocketing</div>
<svg style='left:45.5px;top:486.5px' width='17' height='17' viewBox='0 0 20 20'><path d='M5 6h10v8H5z' fill='none' stroke='#bbb' stroke-width='3'/><circle cx='10' cy='10' r='3.5' fill='#fff'/><path d='M2 18h16M3 2l3 3M17 2l-3 3' stroke='#bbb' stroke-width='2.2'/></svg>
<div class='t' style='left:66px;top:489.9px;font-size:12.8px;color:#a8a8a8;font-weight:normal;font-style:italic;'>Part Lightening - ? ...</div>
<svg style='left:190.5px;top:485.5px' width='19' height='19' viewBox='0 0 20 20'><path d='M10 1v18' stroke='#222' stroke-width='1.8' stroke-dasharray='1.7 1.3'/><circle cx='10' cy='10' r='3.2' fill='#222'/></svg>
<div class='a' style='left:245px;top:538px;width:33px;height:34px;background:#fff;border:1px solid #cfcfcf;border-left:none'></div>
<svg style='left:252.0px;top:546.0px' width='20' height='20' viewBox='0 0 20 20'><path d='M3 3v14M7 4h11M7 8h11M7 12h11M7 16h11' stroke='#444' stroke-width='1.3'/><path d='M1 2l2 2 2-2' fill='none' stroke='#444'/></svg>
<div class='a' style='left:40px;top:707px;width:200px;height:1px;background:#d4d4d4'></div>
<svg style='left:43.5px;top:714.5px' width='13' height='13' viewBox='0 0 20 20'><path d='M3 6l7 7 7-7' fill='none' stroke='#555' stroke-width='2.4'/></svg>
<div class='t' style='left:63px;top:715.4px;font-size:13.4px;color:#333;font-weight:normal;font-style:normal;'>Parts (4)</div>
<svg style='left:64.0px;top:739.0px' width='16' height='16' viewBox='0 0 20 20'><path d='M9.5 3l2-2h5l1.5 1.5V17l-1.5 1.5H3L1.5 17v-4.5l2-2h6z' fill='#fff' stroke='#555' stroke-width='1.2'/><path d='M9.5 3h5l1.5-1.5M14.5 3v15.5M3.5 10.5v8M1.5 12.5h8V3M9.5 12.5h5' fill='none' stroke='#555' stroke-width='1'/></svg>
<div class='t' style='left:85px;top:742.1px;font-size:12.6px;color:#333;font-weight:normal;font-style:normal;'>Gearbox Plate</div>
<svg style='left:64.0px;top:765.0px' width='16' height='16' viewBox='0 0 20 20'><path d='M9.5 3l2-2h5l1.5 1.5V17l-1.5 1.5H3L1.5 17v-4.5l2-2h6z' fill='#fff' stroke='#555' stroke-width='1.2'/><path d='M9.5 3h5l1.5-1.5M14.5 3v15.5M3.5 10.5v8M1.5 12.5h8V3M9.5 12.5h5' fill='none' stroke='#555' stroke-width='1'/></svg>
<div class='t' style='left:85px;top:768.1px;font-size:12.6px;color:#333;font-weight:normal;font-style:normal;'>1.125 in. Round Spacer</div>
<svg style='left:64.0px;top:791.0px' width='16' height='16' viewBox='0 0 20 20'><path d='M9.5 3l2-2h5l1.5 1.5V17l-1.5 1.5H3L1.5 17v-4.5l2-2h6z' fill='#fff' stroke='#555' stroke-width='1.2'/><path d='M9.5 3h5l1.5-1.5M14.5 3v15.5M3.5 10.5v8M1.5 12.5h8V3M9.5 12.5h5' fill='none' stroke='#555' stroke-width='1'/></svg>
<div class='t' style='left:85px;top:794.1px;font-size:12.6px;color:#333;font-weight:normal;font-style:normal;'>1.625 in. Rounded Hex ...</div>
<svg style='left:64.0px;top:817.0px' width='16' height='16' viewBox='0 0 20 20'><path d='M9.5 3l2-2h5l1.5 1.5V17l-1.5 1.5H3L1.5 17v-4.5l2-2h6z' fill='#fff' stroke='#555' stroke-width='1.2'/><path d='M9.5 3h5l1.5-1.5M14.5 3v15.5M3.5 10.5v8M1.5 12.5h8V3M9.5 12.5h5' fill='none' stroke='#555' stroke-width='1'/></svg>
<div class='t' style='left:85px;top:820.3px;font-size:12.4px;color:#222;font-weight:bold;font-style:normal;'>5 In. Rounded Hex Sh...</div>
<svg style='left:0;top:0' width='1919' height='1079' viewBox='0 0 1919 1079'>
<defs>
<linearGradient id='wallg' x1='0' y1='0' x2='1' y2='1'><stop offset='0' stop-color='#b9b9b9'/><stop offset='.55' stop-color='#f4f4f4'/><stop offset='1' stop-color='#d9d9d9'/></linearGradient>
<linearGradient id='greeng' x1='0.1' y1='0.05' x2='0.9' y2='0.95'><stop offset='0' stop-color='#3d8f3d'/><stop offset='.35' stop-color='#4fae4f'/><stop offset='.62' stop-color='#72cc72'/><stop offset='.85' stop-color='#4cab4c'/><stop offset='1' stop-color='#3f963f'/></linearGradient>
<linearGradient id='pg' gradientUnits='userSpaceOnUse' x1='0' y1='480' x2='0' y2='960'><stop offset='0' stop-color='rgb(185,202,215)' stop-opacity='0.16'/><stop offset='1' stop-color='rgb(185,202,215)' stop-opacity='0.05'/></linearGradient>
</defs>
<path d='M827.3,238.5 L1338.7,386.3 L1338.7,897.7 L827.3,749.9Z' fill='url(#pg)'/>
<path d='M827.3,238.5L1338.7,386.3' stroke='#9ab6d6' stroke-width='1.2'/>
<path d='M1338.7,386.3L1338.7,897.7' stroke='#9ab6d6' stroke-width='1.2'/>
<path d='M1338.7,897.7L827.3,749.9' stroke='#9ab6d6' stroke-width='1.2'/>
<path d='M827.3,749.9L827.3,238.5' stroke='#9ab6d6' stroke-width='1.2'/>
<path d='M1070.0,323.7 L1231.0,184.4 L1231.0,695.8 L1070.0,835.1Z' fill='url(#pg)'/>
<path d='M1070.0,323.7L1231.0,184.4' stroke='#9ab6d6' stroke-width='1.2'/>
<path d='M1231.0,184.4L1231.0,695.8' stroke='#9ab6d6' stroke-width='1.2'/>
<path d='M1231.0,695.8L1070.0,835.1' stroke='#9ab6d6' stroke-width='1.2'/>
<path d='M814.3,505.5 L975.3,366.2 L1486.8,514.0 L1325.7,653.3Z' fill='url(#pg)'/>
<path d='M814.3,505.5L975.3,366.2' stroke='#9ab6d6' stroke-width='1.2'/>
<path d='M975.3,366.2L1486.8,514.0' stroke='#9ab6d6' stroke-width='1.2'/>
<path d='M1486.8,514.0L1325.7,653.3' stroke='#9ab6d6' stroke-width='1.2'/>
<text transform='matrix(0.9610,0.2767,0.0000,1.0000,829.9,254.6)' font-family='Liberation Sans' font-size='17' fill='#3d6fb0'>Front</text>
<text transform='matrix(0.9610,0.2767,-0.7564,0.6542,971.0,374.3)' font-family='Liberation Sans' font-size='15.5' fill='#3d6fb0'>Top</text>
<path d='M1252.6,641.2 L1252.9,640.9 L1265.9,629.6 L1265.6,629.9Z' fill='rgb(177,177,177)' stroke='rgb(177,177,177)' stroke-width='0.6'/><path d='M1252.9,640.9 L1253.2,640.6 L1266.2,629.3 L1265.9,629.6Z' fill='rgb(178,178,178)' stroke='rgb(178,178,178)' stroke-width='0.6'/><path d='M1253.2,640.6 L1253.5,640.3 L1266.5,629.0 L1266.2,629.3Z' fill='rgb(178,178,178)' stroke='rgb(178,178,178)' stroke-width='0.6'/><path d='M1253.5,640.3 L1253.7,639.9 L1266.8,628.7 L1266.5,629.0Z' fill='rgb(180,180,180)' stroke='rgb(180,180,180)' stroke-width='0.6'/><path d='M1253.7,639.9 L1254.0,639.6 L1267.0,628.3 L1266.8,628.7Z' fill='rgb(183,183,183)' stroke='rgb(183,183,183)' stroke-width='0.6'/><path d='M1254.0,639.6 L1254.2,639.2 L1267.2,628.0 L1267.0,628.3Z' fill='rgb(187,187,187)' stroke='rgb(187,187,187)' stroke-width='0.6'/><path d='M1254.2,639.2 L1254.4,638.8 L1267.5,627.6 L1267.2,628.0Z' fill='rgb(190,190,190)' stroke='rgb(190,190,190)' stroke-width='0.6'/><path d='M1254.4,638.8 L1254.7,638.5 L1267.7,627.2 L1267.5,627.6Z' fill='rgb(193,193,193)' stroke='rgb(193,193,193)' stroke-width='0.6'/><path d='M1254.7,638.5 L1254.8,638.1 L1267.9,626.8 L1267.7,627.2Z' fill='rgb(196,196,196)' stroke='rgb(196,196,196)' stroke-width='0.6'/><path d='M1254.8,638.1 L1255.0,637.7 L1268.0,626.4 L1267.9,626.8Z' fill='rgb(200,200,200)' stroke='rgb(200,200,200)' stroke-width='0.6'/><path d='M1255.0,637.7 L1300.4,520.9 L1313.4,509.6 L1268.0,626.4Z' fill='rgb(202,202,202)' stroke='rgb(202,202,202)' stroke-width='0.6'/><path d='M1300.4,520.9 L1301.6,517.8 L1314.6,506.5 L1313.4,509.6Z' fill='rgb(203,203,203)' stroke='rgb(203,203,203)' stroke-width='0.6'/><path d='M1301.6,517.8 L1302.7,514.6 L1315.7,503.3 L1314.6,506.5Z' fill='rgb(206,206,206)' stroke='rgb(206,206,206)' stroke-width='0.6'/><path d='M1302.7,514.6 L1303.6,511.3 L1316.6,500.0 L1315.7,503.3Z' fill='rgb(209,209,209)' stroke='rgb(209,209,209)' stroke-width='0.6'/><path d='M1303.6,511.3 L1304.4,507.9 L1317.5,496.7 L1316.6,500.0Z' fill='rgb(212,212,212)' stroke='rgb(212,212,212)' stroke-width='0.6'/><path d='M1304.4,507.9 L1305.1,504.5 L1318.2,493.3 L1317.5,496.7Z' fill='rgb(215,215,215)' stroke='rgb(215,215,215)' stroke-width='0.6'/><path d='M1305.1,504.5 L1305.7,501.1 L1318.8,489.8 L1318.2,493.3Z' fill='rgb(218,218,218)' stroke='rgb(218,218,218)' stroke-width='0.6'/><path d='M1305.7,501.1 L1306.2,497.6 L1319.2,486.3 L1318.8,489.8Z' fill='rgb(220,220,220)' stroke='rgb(220,220,220)' stroke-width='0.6'/><path d='M1306.2,497.6 L1306.5,494.0 L1319.5,482.7 L1319.2,486.3Z' fill='rgb(223,223,223)' stroke='rgb(223,223,223)' stroke-width='0.6'/><path d='M1306.5,494.0 L1306.7,490.4 L1319.7,479.1 L1319.5,482.7Z' fill='rgb(226,226,226)' stroke='rgb(226,226,226)' stroke-width='0.6'/><path d='M1306.7,490.4 L1306.7,486.7 L1319.8,475.4 L1319.7,479.1Z' fill='rgb(228,228,228)' stroke='rgb(228,228,228)' stroke-width='0.6'/><path d='M1306.7,486.7 L1306.7,483.0 L1319.7,471.7 L1319.8,475.4Z' fill='rgb(231,231,231)' stroke='rgb(231,231,231)' stroke-width='0.6'/><path d='M1306.7,483.0 L1306.5,479.3 L1319.5,468.0 L1319.7,471.7Z' fill='rgb(233,233,233)' stroke='rgb(233,233,233)' stroke-width='0.6'/><path d='M1306.5,479.3 L1306.2,475.5 L1319.2,464.3 L1319.5,468.0Z' fill='rgb(235,235,235)' stroke='rgb(235,235,235)' stroke-width='0.6'/><path d='M1306.2,475.5 L1305.7,471.8 L1318.8,460.5 L1319.2,464.3Z' fill='rgb(237,237,237)' stroke='rgb(237,237,237)' stroke-width='0.6'/><path d='M1305.7,471.8 L1305.1,468.0 L1318.2,456.7 L1318.8,460.5Z' fill='rgb(239,239,239)' stroke='rgb(239,239,239)' stroke-width='0.6'/><path d='M1305.1,468.0 L1304.4,464.1 L1317.5,452.9 L1318.2,456.7Z' fill='rgb(241,241,241)' stroke='rgb(241,241,241)' stroke-width='0.6'/><path d='M1304.4,464.1 L1303.6,460.3 L1316.6,449.1 L1317.5,452.9Z' fill='rgb(242,242,242)' stroke='rgb(242,242,242)' stroke-width='0.6'/><path d='M1303.6,460.3 L1302.7,456.5 L1315.7,445.2 L1316.6,449.1Z' fill='rgb(242,242,242)' stroke='rgb(242,242,242)' stroke-width='0.6'/><path d='M1302.7,456.5 L1301.6,452.7 L1314.6,441.4 L1315.7,445.2Z' fill='rgb(242,242,242)' stroke='rgb(242,242,242)' stroke-width='0.6'/><path d='M1301.6,452.7 L1300.4,448.8 L1313.4,437.6 L1314.6,441.4Z' fill='rgb(242,242,242)' stroke='rgb(242,242,242)' stroke-width='0.6'/><path d='M1300.4,448.8 L1299.1,445.0 L1312.1,433.8 L1313.4,437.6Z' fill='rgb(242,242,242)' stroke='rgb(242,242,242)' stroke-width='0.6'/><path d='M1299.1,445.0 L1297.6,441.2 L1310.7,430.0 L1312.1,433.8Z' fill='rgb(242,242,242)' stroke='rgb(242,242,242)' stroke-width='0.6'/><path d='M1297.6,441.2 L1296.1,437.4 L1309.1,426.2 L1310.7,430.0Z' fill='rgb(242,242,242)' stroke='rgb(242,242,242)' stroke-width='0.6'/><path d='M1296.1,437.4 L1294.4,433.7 L1307.4,422.4 L1309.1,426.2Z' fill='rgb(242,242,242)' stroke='rgb(242,242,242)' stroke-width='0.6'/><path d='M1294.4,433.7 L1292.6,430.0 L1305.7,418.7 L1307.4,422.4Z' fill='rgb(242,242,242)' stroke='rgb(242,242,242)' stroke-width='0.6'/><path d='M1292.6,430.0 L1290.7,426.3 L1303.8,415.0 L1305.7,418.7Z' fill='rgb(242,242,242)' stroke='rgb(242,242,242)' stroke-width='0.6'/><path d='M1290.7,426.3 L1288.7,422.6 L1301.8,411.3 L1303.8,415.0Z' fill='rgb(242,242,242)' stroke='rgb(242,242,242)' stroke-width='0.6'/><path d='M1288.7,422.6 L1286.6,419.0 L1299.7,407.7 L1301.8,411.3Z' fill='rgb(242,242,242)' stroke='rgb(242,242,242)' stroke-width='0.6'/><path d='M1286.6,419.0 L1284.4,415.4 L1297.4,404.1 L1299.7,407.7Z' fill='rgb(242,242,242)' stroke='rgb(242,242,242)' stroke-width='0.6'/><path d='M1284.4,415.4 L1282.1,411.9 L1295.1,400.6 L1297.4,404.1Z' fill='rgb(242,242,242)' stroke='rgb(242,242,242)' stroke-width='0.6'/><path d='M1282.1,411.9 L1279.7,408.4 L1292.7,397.1 L1295.1,400.6Z' fill='rgb(242,242,242)' stroke='rgb(242,242,242)' stroke-width='0.6'/><path d='M1279.7,408.4 L1277.2,405.0 L1290.2,393.7 L1292.7,397.1Z' fill='rgb(242,242,242)' stroke='rgb(242,242,242)' stroke-width='0.6'/><path d='M1277.2,405.0 L1274.6,401.6 L1287.6,390.4 L1290.2,393.7Z' fill='rgb(242,242,242)' stroke='rgb(242,242,242)' stroke-width='0.6'/><path d='M1274.6,401.6 L1271.9,398.3 L1284.9,387.1 L1287.6,390.4Z' fill='rgb(242,242,242)' stroke='rgb(242,242,242)' stroke-width='0.6'/><path d='M1271.9,398.3 L1269.1,395.1 L1282.1,383.9 L1284.9,387.1Z' fill='rgb(242,242,242)' stroke='rgb(242,242,242)' stroke-width='0.6'/><path d='M1269.1,395.1 L1266.3,392.0 L1279.3,380.7 L1282.1,383.9Z' fill='rgb(242,242,242)' stroke='rgb(242,242,242)' stroke-width='0.6'/><path d='M1266.3,392.0 L1263.3,388.9 L1276.4,377.7 L1279.3,380.7Z' fill='rgb(242,242,242)' stroke='rgb(242,242,242)' stroke-width='0.6'/><path d='M1263.3,388.9 L1260.3,386.0 L1273.3,374.7 L1276.4,377.7Z' fill='rgb(242,242,242)' stroke='rgb(242,242,242)' stroke-width='0.6'/><path d='M1260.3,386.0 L1257.2,383.1 L1270.3,371.8 L1273.3,374.7Z' fill='rgb(242,242,242)' stroke='rgb(242,242,242)' stroke-width='0.6'/><path d='M1257.2,383.1 L1254.1,380.3 L1267.1,369.0 L1270.3,371.8Z' fill='rgb(242,242,242)' stroke='rgb(242,242,242)' stroke-width='0.6'/><path d='M1254.1,380.3 L1250.9,377.5 L1263.9,366.3 L1267.1,369.0Z' fill='rgb(242,242,242)' stroke='rgb(242,242,242)' stroke-width='0.6'/><path d='M1250.9,377.5 L1247.6,374.9 L1260.6,363.7 L1263.9,366.3Z' fill='rgb(242,242,242)' stroke='rgb(242,242,242)' stroke-width='0.6'/><path d='M1247.6,374.9 L1244.3,372.4 L1257.3,361.1 L1260.6,363.7Z' fill='rgb(242,242,242)' stroke='rgb(242,242,242)' stroke-width='0.6'/><path d='M1244.3,372.4 L1240.9,370.0 L1253.9,358.7 L1257.3,361.1Z' fill='rgb(242,242,242)' stroke='rgb(242,242,242)' stroke-width='0.6'/><path d='M1240.9,370.0 L1237.4,367.7 L1250.5,356.4 L1253.9,358.7Z' fill='rgb(242,242,242)' stroke='rgb(242,242,242)' stroke-width='0.6'/><path d='M1237.4,367.7 L1234.0,365.5 L1247.0,354.2 L1250.5,356.4Z' fill='rgb(242,242,242)' stroke='rgb(242,242,242)' stroke-width='0.6'/><path d='M1234.0,365.5 L1230.4,363.4 L1243.5,352.1 L1247.0,354.2Z' fill='rgb(242,242,242)' stroke='rgb(242,242,242)' stroke-width='0.6'/><path d='M1230.4,363.4 L1226.9,361.4 L1239.9,350.1 L1243.5,352.1Z' fill='rgb(242,242,242)' stroke='rgb(242,242,242)' stroke-width='0.6'/><path d='M1226.9,361.4 L1223.3,359.5 L1236.3,348.3 L1239.9,350.1Z' fill='rgb(242,242,242)' stroke='rgb(242,242,242)' stroke-width='0.6'/><path d='M1223.3,359.5 L1219.7,357.8 L1232.7,346.5 L1236.3,348.3Z' fill='rgb(240,240,240)' stroke='rgb(240,240,240)' stroke-width='0.6'/><path d='M1219.7,357.8 L1216.1,356.2 L1229.1,344.9 L1232.7,346.5Z' fill='rgb(238,238,238)' stroke='rgb(238,238,238)' stroke-width='0.6'/><path d='M1216.1,356.2 L1212.4,354.7 L1225.4,343.4 L1229.1,344.9Z' fill='rgb(236,236,236)' stroke='rgb(236,236,236)' stroke-width='0.6'/><path d='M1212.4,354.7 L1208.8,353.3 L1221.8,342.0 L1225.4,343.4Z' fill='rgb(233,233,233)' stroke='rgb(233,233,233)' stroke-width='0.6'/><path d='M1208.8,353.3 L1205.1,352.0 L1218.1,340.8 L1221.8,342.0Z' fill='rgb(231,231,231)' stroke='rgb(231,231,231)' stroke-width='0.6'/><path d='M1205.1,352.0 L1201.4,350.9 L1214.4,339.6 L1218.1,340.8Z' fill='rgb(229,229,229)' stroke='rgb(229,229,229)' stroke-width='0.6'/><path d='M1201.4,350.9 L938.5,274.9 L951.6,263.7 L1214.4,339.6Z' fill='rgb(227,227,227)' stroke='rgb(227,227,227)' stroke-width='0.6'/><path d='M938.5,274.9 L934.9,273.9 L947.9,262.7 L951.6,263.7Z' fill='rgb(227,227,227)' stroke='rgb(227,227,227)' stroke-width='0.6'/><path d='M934.9,273.9 L931.2,273.1 L944.2,261.8 L947.9,262.7Z' fill='rgb(225,225,225)' stroke='rgb(225,225,225)' stroke-width='0.6'/><path d='M931.2,273.1 L927.5,272.3 L940.6,261.1 L944.2,261.8Z' fill='rgb(223,223,223)' stroke='rgb(223,223,223)' stroke-width='0.6'/><path d='M927.5,272.3 L923.9,271.7 L936.9,260.5 L940.6,261.1Z' fill='rgb(218,218,218)' stroke='rgb(218,218,218)' stroke-width='0.6'/><path d='M923.9,271.7 L920.2,271.3 L933.3,260.0 L936.9,260.5Z' fill='rgb(215,215,215)' stroke='rgb(215,215,215)' stroke-width='0.6'/><path d='M920.2,271.3 L916.6,270.9 L929.7,259.6 L933.3,260.0Z' fill='rgb(212,212,212)' stroke='rgb(212,212,212)' stroke-width='0.6'/><path d='M916.6,270.9 L913.1,270.7 L926.1,259.4 L929.7,259.6Z' fill='rgb(208,208,208)' stroke='rgb(208,208,208)' stroke-width='0.6'/><path d='M913.1,270.7 L909.5,270.6 L922.5,259.4 L926.1,259.4Z' fill='rgb(205,205,205)' stroke='rgb(205,205,205)' stroke-width='0.6'/><path d='M909.5,270.6 L906.0,270.7 L919.0,259.4 L922.5,259.4Z' fill='rgb(202,202,202)' stroke='rgb(202,202,202)' stroke-width='0.6'/><path d='M906.0,270.7 L902.5,270.9 L915.5,259.6 L919.0,259.4Z' fill='rgb(199,199,199)' stroke='rgb(199,199,199)' stroke-width='0.6'/><path d='M902.5,270.9 L899.1,271.2 L912.1,259.9 L915.5,259.6Z' fill='rgb(195,195,195)' stroke='rgb(195,195,195)' stroke-width='0.6'/><path d='M899.1,271.2 L895.7,271.7 L908.7,260.4 L912.1,259.9Z' fill='rgb(192,192,192)' stroke='rgb(192,192,192)' stroke-width='0.6'/><path d='M895.7,271.7 L892.4,272.3 L905.4,261.0 L908.7,260.4Z' fill='rgb(188,188,188)' stroke='rgb(188,188,188)' stroke-width='0.6'/><path d='M892.4,272.3 L889.1,273.0 L902.1,261.7 L905.4,261.0Z' fill='rgb(185,185,185)' stroke='rgb(185,185,185)' stroke-width='0.6'/><path d='M889.1,273.0 L885.9,273.8 L898.9,262.6 L902.1,261.7Z' fill='rgb(181,181,181)' stroke='rgb(181,181,181)' stroke-width='0.6'/><path d='M885.9,273.8 L882.7,274.8 L895.7,263.5 L898.9,262.6Z' fill='rgb(178,178,178)' stroke='rgb(178,178,178)' stroke-width='0.6'/><path d='M882.7,274.8 L879.6,275.9 L892.7,264.7 L895.7,263.5Z' fill='rgb(174,174,174)' stroke='rgb(174,174,174)' stroke-width='0.6'/><path d='M879.6,275.9 L876.6,277.2 L889.6,265.9 L892.7,264.7Z' fill='rgb(171,171,171)' stroke='rgb(171,171,171)' stroke-width='0.6'/><path d='M876.6,277.2 L873.7,278.5 L886.7,267.3 L889.6,265.9Z' fill='rgb(167,167,167)' stroke='rgb(167,167,167)' stroke-width='0.6'/><path d='M873.7,278.5 L870.8,280.0 L883.9,268.8 L886.7,267.3Z' fill='rgb(164,164,164)' stroke='rgb(164,164,164)' stroke-width='0.6'/><path d='M870.8,280.0 L868.1,281.6 L881.1,270.4 L883.9,268.8Z' fill='rgb(160,160,160)' stroke='rgb(160,160,160)' stroke-width='0.6'/><path d='M868.1,281.6 L865.4,283.4 L878.4,272.1 L881.1,270.4Z' fill='rgb(156,156,156)' stroke='rgb(156,156,156)' stroke-width='0.6'/><path d='M865.4,283.4 L862.8,285.2 L875.8,273.9 L878.4,272.1Z' fill='rgb(153,153,153)' stroke='rgb(153,153,153)' stroke-width='0.6'/><path d='M862.8,285.2 L860.3,287.2 L873.3,275.9 L875.8,273.9Z' fill='rgb(149,149,149)' stroke='rgb(149,149,149)' stroke-width='0.6'/><path d='M860.3,287.2 L857.8,289.3 L870.9,278.0 L873.3,275.9Z' fill='rgb(145,145,145)' stroke='rgb(145,145,145)' stroke-width='0.6'/>
<path d='M1255.0,637.7L1268.0,626.4' stroke='#222' stroke-width='.9'/>
<path d='M1300.4,520.9L1313.4,509.6' stroke='#222' stroke-width='.9'/>
<path d='M1201.4,350.9L1214.4,339.6' stroke='#222' stroke-width='.9'/>
<path d='M938.5,274.9L951.6,263.7' stroke='#222' stroke-width='.9'/>
<path d='M833.2,349.9 L833.3,346.2 L833.5,342.6 L833.8,339.0 L834.2,335.5 L834.8,332.0 L835.5,328.6 L836.3,325.3 L837.3,322.0 L838.4,318.8 L839.5,315.6 L840.9,312.6 L842.3,309.6 L843.9,306.8 L845.5,303.9 L847.3,301.2 L849.2,298.6 L851.2,296.1 L853.3,293.7 L855.5,291.4 L857.8,289.2 L870.9,278.0 L873.3,275.9 L875.8,273.9 L878.4,272.1 L881.1,270.4 L883.9,268.8 L886.7,267.3 L889.6,265.9 L892.7,264.7 L895.7,263.6 L898.9,262.6 L902.1,261.7 L905.4,261.0 L908.7,260.4 L912.1,259.9 L915.5,259.6 L919.0,259.4 L922.5,259.4 L926.1,259.4 L929.7,259.6 L933.3,260.0 L936.9,260.5 L940.6,261.1 L944.2,261.8 L947.9,262.7 L951.6,263.7 L1214.4,339.6 L1218.1,340.8 L1221.8,342.0 L1225.4,343.4 L1229.1,344.9 L1232.7,346.5 L1236.3,348.3 L1239.9,350.1 L1243.5,352.1 L1247.0,354.2 L1250.5,356.4 L1253.9,358.7 L1257.3,361.1 L1260.6,363.6 L1263.9,366.3 L1267.1,369.0 L1270.3,371.8 L1273.3,374.7 L1276.3,377.7 L1279.3,380.7 L1282.2,383.9 L1284.9,387.1 L1287.6,390.4 L1290.2,393.7 L1292.7,397.1 L1295.1,400.6 L1297.5,404.1 L1299.7,407.7 L1301.8,411.3 L1303.8,415.0 L1305.7,418.7 L1307.5,422.4 L1309.1,426.2 L1310.7,430.0 L1312.1,433.8 L1313.4,437.6 L1314.6,441.4 L1315.7,445.2 L1316.7,449.1 L1317.5,452.9 L1318.2,456.7 L1318.8,460.5 L1319.2,464.3 L1319.5,468.0 L1319.7,471.7 L1319.8,475.4 L1319.7,479.1 L1319.5,482.7 L1319.2,486.3 L1318.8,489.8 L1318.2,493.3 L1317.5,496.7 L1316.7,500.0 L1315.7,503.3 L1314.6,506.5 L1313.4,509.6 L1268.0,626.4 L1267.9,626.8 L1267.7,627.2 L1267.5,627.6 L1267.2,628.0 L1267.0,628.3 L1266.8,628.7 L1266.5,629.0 L1266.2,629.3 L1265.9,629.6 L1265.6,629.9 L1265.3,630.2 L1252.2,641.5 L1251.9,641.7 L1251.6,642.0 L1251.2,642.2 L1250.8,642.4 L1149.0,696.4 L1145.7,698.2 L1142.3,699.8 L1138.8,701.2 L1135.2,702.5 L1131.5,703.7 L1127.7,704.6 L1123.9,705.5 L1120.0,706.2 L1116.0,706.7 L1112.0,707.1 L1108.0,707.3 L1103.9,707.4 L1099.7,707.3 L1095.5,707.1 L1091.3,706.7 L1087.1,706.1 L1082.8,705.4 L1078.5,704.5 L1074.3,703.5 L1070.0,702.4 L1065.7,701.0 L1061.4,699.6 L1057.1,698.0 L1052.9,696.2 L1048.6,694.3 L1044.4,692.3 L1040.2,690.1 L1036.1,687.8 L1032.0,685.4 L1027.9,682.8 L1023.9,680.1 L1020.0,677.3 L1016.0,674.3 L1012.2,671.3 L1008.5,668.1 L1004.8,664.8 L1001.2,661.5 L997.7,658.0 L994.2,654.4 L990.9,650.7 L889.1,537.9 L888.7,537.4 L888.4,537.0 L888.0,536.5 L887.7,536.1 L887.4,535.6 L887.1,535.2 L886.8,534.7 L886.5,534.2 L886.0,533.2 L885.7,532.7 L885.5,532.2 L885.3,531.7 L885.1,531.2 L884.9,530.7 L839.5,387.7 L838.4,383.9 L837.3,380.1 L836.3,376.2 L835.5,372.4 L834.8,368.6 L834.2,364.8 L833.8,361.0 L833.5,357.3 L833.3,353.5Z' fill='none' stroke='#1a1a1a' stroke-width='1.1'/>
<path d='M833.2,349.8 L833.3,353.5 L833.4,357.3 L833.8,361.0 L834.2,364.8 L834.8,368.6 L835.5,372.4 L836.3,376.2 L837.3,380.1 L838.3,383.9 L839.5,387.7 L884.9,530.7 L885.1,531.2 L885.3,531.7 L885.5,532.2 L885.7,532.7 L886.0,533.2 L886.2,533.7 L886.5,534.2 L886.8,534.7 L887.1,535.2 L887.4,535.6 L887.7,536.1 L888.0,536.6 L888.4,537.0 L888.7,537.4 L889.1,537.9 L990.9,650.7 L994.3,654.4 L997.7,658.0 L1001.2,661.5 L1004.8,664.8 L1008.5,668.1 L1012.2,671.3 L1016.1,674.3 L1019.9,677.3 L1023.9,680.1 L1027.9,682.8 L1032.0,685.4 L1036.1,687.8 L1040.2,690.1 L1044.4,692.3 L1048.6,694.3 L1052.9,696.2 L1057.1,698.0 L1061.4,699.6 L1065.7,701.0 L1070.0,702.4 L1074.3,703.5 L1078.6,704.5 L1082.8,705.4 L1087.1,706.1 L1091.3,706.7 L1095.5,707.1 L1099.7,707.3 L1103.9,707.4 L1108.0,707.3 L1112.0,707.1 L1116.0,706.7 L1120.0,706.2 L1123.9,705.5 L1127.7,704.7 L1131.5,703.7 L1135.1,702.5 L1138.7,701.2 L1142.3,699.8 L1145.7,698.2 L1149.0,696.4 L1250.8,642.4 L1251.2,642.2 L1251.6,642.0 L1251.9,641.7 L1252.3,641.5 L1252.6,641.2 L1252.9,640.9 L1253.2,640.6 L1253.5,640.3 L1253.7,639.9 L1254.0,639.6 L1254.2,639.2 L1254.4,638.8 L1254.7,638.5 L1254.8,638.1 L1255.0,637.7 L1300.4,520.9 L1301.6,517.8 L1302.7,514.6 L1303.6,511.3 L1304.4,507.9 L1305.1,504.5 L1305.7,501.1 L1306.2,497.6 L1306.5,494.0 L1306.7,490.4 L1306.7,486.7 L1306.7,483.0 L1306.5,479.3 L1306.2,475.5 L1305.7,471.8 L1305.1,468.0 L1304.4,464.1 L1303.6,460.3 L1302.7,456.5 L1301.6,452.7 L1300.4,448.8 L1299.1,445.0 L1297.6,441.2 L1296.1,437.4 L1294.4,433.7 L1292.6,430.0 L1290.7,426.3 L1288.7,422.6 L1286.6,419.0 L1284.4,415.4 L1282.1,411.9 L1279.7,408.4 L1277.2,405.0 L1274.6,401.6 L1271.9,398.3 L1269.1,395.1 L1266.3,392.0 L1263.3,388.9 L1260.3,386.0 L1257.2,383.1 L1254.1,380.3 L1250.9,377.5 L1247.6,374.9 L1244.3,372.4 L1240.9,370.0 L1237.4,367.7 L1234.0,365.5 L1230.4,363.4 L1226.9,361.4 L1223.3,359.5 L1219.7,357.8 L1216.1,356.2 L1212.4,354.7 L1208.8,353.3 L1205.1,352.0 L1201.4,350.9 L938.5,274.9 L934.9,273.9 L931.2,273.1 L927.5,272.3 L923.9,271.7 L920.2,271.3 L916.6,270.9 L913.1,270.7 L909.5,270.6 L906.0,270.7 L902.5,270.9 L899.1,271.2 L895.7,271.7 L892.4,272.3 L889.1,273.0 L885.9,273.8 L882.7,274.8 L879.6,275.9 L876.6,277.2 L873.7,278.5 L870.8,280.0 L868.1,281.6 L865.4,283.4 L862.8,285.2 L860.3,287.2 L857.8,289.3 L855.5,291.4 L853.3,293.7 L851.2,296.1 L849.2,298.6 L847.3,301.3 L845.5,304.0 L843.9,306.7 L842.3,309.6 L840.9,312.6 L839.5,315.7 L838.3,318.8 L837.3,322.0 L836.3,325.3 L835.5,328.6 L834.8,332.0 L834.2,335.5 L833.8,339.0 L833.4,342.6 L833.3,346.2ZM991.7,395.7 L991.5,390.4 L990.7,385.0 L989.4,379.6 L987.7,374.1 L985.4,368.8 L982.8,363.5 L979.7,358.4 L976.1,353.6 L972.3,348.9 L968.1,344.6 L963.6,340.6 L958.9,337.0 L954.0,333.9 L948.9,331.1 L943.8,328.9 L938.5,327.1 L933.3,325.9 L928.2,325.1 L923.1,324.9 L918.2,325.3 L913.5,326.1 L909.0,327.5 L904.8,329.4 L900.9,331.8 L897.4,334.7 L894.3,338.0 L891.6,341.7 L889.4,345.7 L887.6,350.1 L886.4,354.8 L885.6,359.8 L885.4,364.9 L885.6,370.2 L886.4,375.6 L887.6,381.0 L889.4,386.4 L891.6,391.8 L894.3,397.1 L897.4,402.2 L900.9,407.0 L904.8,411.7 L909.0,416.0 L913.5,420.0 L918.2,423.5 L923.1,426.7 L928.2,429.5 L933.3,431.7 L938.5,433.5 L943.8,434.7 L948.9,435.5 L954.0,435.7 L958.9,435.3 L963.6,434.4 L968.1,433.1 L972.3,431.2 L976.1,428.8 L979.7,425.9 L982.8,422.6 L985.4,418.9 L987.7,414.8 L989.4,410.4 L990.7,405.7 L991.5,400.8ZM1254.6,471.6 L1254.3,466.3 L1253.6,461.0 L1252.3,455.5 L1250.5,450.1 L1248.3,444.7 L1245.6,439.5 L1242.5,434.4 L1239.0,429.5 L1235.1,424.9 L1230.9,420.6 L1226.5,416.6 L1221.8,413.0 L1216.8,409.8 L1211.8,407.1 L1206.6,404.8 L1201.4,403.1 L1196.2,401.8 L1191.0,401.1 L1186.0,400.9 L1181.0,401.2 L1176.3,402.1 L1171.9,403.5 L1167.7,405.4 L1163.8,407.8 L1160.3,410.6 L1157.2,413.9 L1154.5,417.6 L1152.3,421.7 L1150.5,426.1 L1149.2,430.8 L1148.5,435.8 L1148.2,440.9 L1148.5,446.2 L1149.2,451.6 L1150.5,457.0 L1152.3,462.4 L1154.5,467.8 L1157.2,473.0 L1160.3,478.1 L1163.8,483.0 L1167.7,487.6 L1171.9,491.9 L1176.3,495.9 L1181.0,499.5 L1186.0,502.7 L1191.0,505.4 L1196.2,507.7 L1201.4,509.4 L1206.6,510.7 L1211.8,511.4 L1216.8,511.6 L1221.8,511.3 L1226.5,510.4 L1230.9,509.0 L1235.1,507.1 L1239.0,504.7 L1242.5,501.9 L1245.6,498.6 L1248.3,494.9 L1250.5,490.8 L1252.3,486.4 L1253.6,481.7 L1254.3,476.8ZM1117.9,442.9 L1117.7,438.1 L1117.0,433.3 L1115.9,428.4 L1114.3,423.5 L1112.3,418.6 L1109.9,413.9 L1107.1,409.3 L1103.9,404.9 L1100.4,400.7 L1096.6,396.8 L1092.6,393.2 L1088.3,390.0 L1083.9,387.1 L1079.3,384.7 L1074.7,382.6 L1070.0,381.0 L1065.3,379.9 L1060.6,379.3 L1056.0,379.1 L1051.6,379.4 L1047.4,380.2 L1043.3,381.4 L1039.5,383.1 L1036.1,385.3 L1032.9,387.9 L1030.1,390.8 L1027.7,394.2 L1025.7,397.9 L1024.1,401.8 L1022.9,406.1 L1022.2,410.5 L1022.0,415.2 L1022.2,419.9 L1022.9,424.8 L1024.1,429.7 L1025.7,434.6 L1027.7,439.4 L1030.1,444.1 L1032.9,448.7 L1036.1,453.1 L1039.5,457.3 L1043.3,461.2 L1047.4,464.8 L1051.6,468.0 L1056.0,470.9 L1060.6,473.4 L1065.3,475.4 L1070.0,477.0 L1074.7,478.1 L1079.3,478.8 L1083.9,478.9 L1088.3,478.6 L1092.6,477.9 L1096.6,476.6 L1100.4,474.9 L1103.9,472.7 L1107.1,470.2 L1109.9,467.2 L1112.3,463.9 L1114.3,460.2 L1115.9,456.2 L1117.0,452.0 L1117.7,447.5ZM1117.9,593.2 L1117.7,588.5 L1117.0,583.6 L1115.9,578.7 L1114.3,573.8 L1112.3,569.0 L1109.9,564.2 L1107.1,559.7 L1103.9,555.3 L1100.4,551.1 L1096.6,547.2 L1092.6,543.6 L1088.3,540.4 L1083.9,537.5 L1079.3,535.0 L1074.7,533.0 L1070.0,531.4 L1065.3,530.3 L1060.6,529.6 L1056.0,529.4 L1051.6,529.7 L1047.4,530.5 L1043.3,531.8 L1039.5,533.5 L1036.1,535.6 L1032.9,538.2 L1030.1,541.2 L1027.7,544.5 L1025.7,548.2 L1024.1,552.2 L1022.9,556.4 L1022.2,560.9 L1022.0,565.5 L1022.2,570.3 L1022.9,575.1 L1024.1,580.0 L1025.7,584.9 L1027.7,589.8 L1030.1,594.5 L1032.9,599.1 L1036.1,603.5 L1039.5,607.7 L1043.3,611.6 L1047.4,615.1 L1051.6,618.4 L1056.0,621.2 L1060.6,623.7 L1065.3,625.7 L1070.0,627.3 L1074.7,628.5 L1079.3,629.1 L1083.9,629.3 L1088.3,629.0 L1092.6,628.2 L1096.6,627.0 L1100.4,625.2 L1103.9,623.1 L1107.1,620.5 L1109.9,617.5 L1112.3,614.2 L1114.3,610.5 L1115.9,606.6 L1117.0,602.3 L1117.7,597.9ZM948.3,297.4 L948.2,296.6 L948.1,295.7 L947.9,294.8 L947.6,293.9 L947.2,293.0 L946.8,292.2 L946.3,291.4 L945.7,290.6 L945.1,289.8 L944.4,289.1 L943.7,288.4 L942.9,287.9 L942.1,287.3 L941.3,286.9 L940.4,286.5 L939.6,286.2 L938.7,286.0 L937.9,285.9 L937.0,285.9 L936.2,285.9 L935.5,286.1 L934.7,286.3 L934.0,286.6 L933.4,287.0 L932.8,287.5 L932.3,288.0 L931.9,288.6 L931.5,289.3 L931.2,290.0 L931.0,290.8 L930.9,291.6 L930.9,292.4 L930.9,293.3 L931.0,294.2 L931.2,295.0 L931.5,295.9 L931.9,296.8 L932.3,297.7 L932.8,298.5 L933.4,299.3 L934.0,300.1 L934.7,300.8 L935.5,301.4 L936.2,302.0 L937.0,302.5 L937.9,303.0 L938.7,303.3 L939.6,303.6 L940.4,303.8 L941.3,303.9 L942.1,304.0 L942.9,303.9 L943.7,303.8 L944.4,303.6 L945.1,303.2 L945.7,302.9 L946.3,302.4 L946.8,301.8 L947.2,301.2 L947.6,300.6 L947.9,299.9 L948.1,299.1 L948.2,298.3ZM1209.1,372.8 L1209.0,372.0 L1208.9,371.1 L1208.7,370.2 L1208.4,369.3 L1208.0,368.4 L1207.6,367.6 L1207.1,366.7 L1206.5,365.9 L1205.9,365.2 L1205.2,364.5 L1204.5,363.8 L1203.7,363.2 L1202.9,362.7 L1202.1,362.3 L1201.2,361.9 L1200.4,361.6 L1199.5,361.4 L1198.7,361.3 L1197.9,361.3 L1197.1,361.3 L1196.3,361.5 L1195.5,361.7 L1194.9,362.0 L1194.2,362.4 L1193.7,362.8 L1193.1,363.4 L1192.7,364.0 L1192.3,364.7 L1192.1,365.4 L1191.9,366.1 L1191.7,367.0 L1191.7,367.8 L1191.7,368.7 L1191.9,369.5 L1192.1,370.4 L1192.3,371.3 L1192.7,372.2 L1193.1,373.0 L1193.7,373.9 L1194.2,374.7 L1194.9,375.4 L1195.5,376.1 L1196.3,376.8 L1197.1,377.4 L1197.9,377.9 L1198.7,378.3 L1199.5,378.7 L1200.4,379.0 L1201.2,379.2 L1202.1,379.3 L1202.9,379.4 L1203.7,379.3 L1204.5,379.2 L1205.2,378.9 L1205.9,378.6 L1206.5,378.2 L1207.1,377.8 L1207.6,377.2 L1208.0,376.6 L1208.4,376.0 L1208.7,375.2 L1208.9,374.5 L1209.0,373.7ZM948.3,468.0 L948.2,467.1 L948.1,466.2 L947.9,465.4 L947.6,464.5 L947.2,463.6 L946.8,462.7 L946.3,461.9 L945.7,461.1 L945.1,460.4 L944.4,459.6 L943.7,459.0 L942.9,458.4 L942.1,457.9 L941.3,457.4 L940.4,457.1 L939.6,456.8 L938.7,456.6 L937.9,456.5 L937.0,456.4 L936.2,456.5 L935.5,456.6 L934.7,456.9 L934.0,457.2 L933.4,457.6 L932.8,458.0 L932.3,458.6 L931.9,459.2 L931.5,459.8 L931.2,460.6 L931.0,461.3 L930.9,462.1 L930.9,463.0 L930.9,463.8 L931.0,464.7 L931.2,465.6 L931.5,466.5 L931.9,467.4 L932.3,468.2 L932.8,469.1 L933.4,469.9 L934.0,470.6 L934.7,471.3 L935.5,472.0 L936.2,472.6 L937.0,473.1 L937.9,473.5 L938.7,473.9 L939.6,474.2 L940.4,474.4 L941.3,474.5 L942.1,474.5 L942.9,474.5 L943.7,474.3 L944.4,474.1 L945.1,473.8 L945.7,473.4 L946.3,472.9 L946.8,472.4 L947.2,471.8 L947.6,471.1 L947.9,470.4 L948.1,469.6 L948.2,468.8ZM1209.1,543.4 L1209.0,542.5 L1208.9,541.6 L1208.7,540.7 L1208.4,539.9 L1208.0,539.0 L1207.6,538.1 L1207.1,537.3 L1206.5,536.5 L1205.9,535.7 L1205.2,535.0 L1204.5,534.4 L1203.7,533.8 L1202.9,533.3 L1202.1,532.8 L1201.2,532.5 L1200.4,532.2 L1199.5,532.0 L1198.7,531.8 L1197.9,531.8 L1197.1,531.9 L1196.3,532.0 L1195.5,532.2 L1194.9,532.5 L1194.2,532.9 L1193.7,533.4 L1193.1,533.9 L1192.7,534.5 L1192.3,535.2 L1192.1,535.9 L1191.9,536.7 L1191.7,537.5 L1191.7,538.3 L1191.7,539.2 L1191.9,540.1 L1192.1,541.0 L1192.3,541.9 L1192.7,542.7 L1193.1,543.6 L1193.7,544.4 L1194.2,545.2 L1194.9,546.0 L1195.5,546.7 L1196.3,547.3 L1197.1,547.9 L1197.9,548.4 L1198.7,548.9 L1199.5,549.3 L1200.4,549.6 L1201.2,549.8 L1202.1,549.9 L1202.9,549.9 L1203.7,549.9 L1204.5,549.7 L1205.2,549.5 L1205.9,549.2 L1206.5,548.8 L1207.1,548.3 L1207.6,547.8 L1208.0,547.2 L1208.4,546.5 L1208.7,545.8 L1208.9,545.0 L1209.0,544.2ZM993.5,557.3 L993.5,556.4 L993.4,555.5 L993.1,554.6 L992.9,553.8 L992.5,552.9 L992.1,552.0 L991.5,551.2 L991.0,550.4 L990.3,549.6 L989.7,548.9 L988.9,548.3 L988.2,547.7 L987.3,547.2 L986.5,546.7 L985.7,546.4 L984.8,546.1 L984.0,545.9 L983.1,545.7 L982.3,545.7 L981.5,545.8 L980.7,545.9 L980.0,546.1 L979.3,546.4 L978.7,546.8 L978.1,547.3 L977.6,547.8 L977.2,548.4 L976.8,549.1 L976.5,549.8 L976.3,550.6 L976.2,551.4 L976.1,552.2 L976.2,553.1 L976.3,554.0 L976.5,554.9 L976.8,555.8 L977.2,556.6 L977.6,557.5 L978.1,558.3 L978.7,559.1 L979.3,559.9 L980.0,560.6 L980.7,561.2 L981.5,561.8 L982.3,562.3 L983.1,562.8 L984.0,563.2 L984.8,563.5 L985.7,563.7 L986.5,563.8 L987.3,563.8 L988.2,563.8 L988.9,563.6 L989.7,563.4 L990.3,563.1 L991.0,562.7 L991.5,562.2 L992.1,561.7 L992.5,561.1 L992.9,560.4 L993.1,559.7 L993.4,558.9 L993.5,558.1ZM1163.8,606.5 L1163.8,605.6 L1163.6,604.7 L1163.4,603.9 L1163.2,603.0 L1162.8,602.1 L1162.3,601.2 L1161.8,600.4 L1161.3,599.6 L1160.6,598.9 L1159.9,598.1 L1159.2,597.5 L1158.4,596.9 L1157.6,596.4 L1156.8,595.9 L1156.0,595.6 L1155.1,595.3 L1154.3,595.1 L1153.4,595.0 L1152.6,594.9 L1151.8,595.0 L1151.0,595.1 L1150.3,595.4 L1149.6,595.7 L1149.0,596.1 L1148.4,596.5 L1147.9,597.1 L1147.5,597.7 L1147.1,598.3 L1146.8,599.0 L1146.6,599.8 L1146.5,600.6 L1146.4,601.5 L1146.5,602.3 L1146.6,603.2 L1146.8,604.1 L1147.1,605.0 L1147.5,605.9 L1147.9,606.7 L1148.4,607.6 L1149.0,608.3 L1149.6,609.1 L1150.3,609.8 L1151.0,610.5 L1151.8,611.0 L1152.6,611.6 L1153.4,612.0 L1154.3,612.4 L1155.1,612.7 L1156.0,612.9 L1156.8,613.0 L1157.6,613.0 L1158.4,613.0 L1159.2,612.8 L1159.9,612.6 L1160.6,612.3 L1161.3,611.9 L1161.8,611.4 L1162.3,610.9 L1162.8,610.3 L1163.2,609.6 L1163.4,608.9 L1163.6,608.1 L1163.8,607.3ZM1249.7,631.3 L1249.7,630.5 L1249.6,629.6 L1249.4,628.7 L1249.1,627.8 L1248.7,626.9 L1248.3,626.1 L1247.8,625.2 L1247.2,624.4 L1246.6,623.7 L1245.9,623.0 L1245.1,622.3 L1244.4,621.7 L1243.6,621.2 L1242.7,620.8 L1241.9,620.4 L1241.0,620.1 L1240.2,619.9 L1239.3,619.8 L1238.5,619.8 L1237.7,619.8 L1236.9,620.0 L1236.2,620.2 L1235.5,620.5 L1234.9,620.9 L1234.3,621.3 L1233.8,621.9 L1233.4,622.5 L1233.0,623.2 L1232.7,623.9 L1232.5,624.6 L1232.4,625.5 L1232.3,626.3 L1232.4,627.2 L1232.5,628.0 L1232.7,628.9 L1233.0,629.8 L1233.4,630.7 L1233.8,631.5 L1234.3,632.4 L1234.9,633.2 L1235.5,633.9 L1236.2,634.6 L1236.9,635.3 L1237.7,635.9 L1238.5,636.4 L1239.3,636.8 L1240.2,637.2 L1241.0,637.5 L1241.9,637.7 L1242.7,637.8 L1243.6,637.9 L1244.4,637.8 L1245.1,637.7 L1245.9,637.4 L1246.6,637.1 L1247.2,636.7 L1247.8,636.3 L1248.3,635.7 L1248.7,635.1 L1249.1,634.5 L1249.4,633.7 L1249.6,633.0 L1249.7,632.2Z' fill='#6c6c6c' fill-rule='evenodd' stroke='#161616' stroke-width='1'/>
<clipPath id='hc0'><path d='M991.7,395.7 L991.5,390.4 L990.7,385.0 L989.4,379.6 L987.7,374.1 L985.4,368.8 L982.8,363.5 L979.7,358.4 L976.1,353.6 L972.3,348.9 L968.1,344.6 L963.6,340.6 L958.9,337.0 L954.0,333.9 L948.9,331.1 L943.8,328.9 L938.5,327.1 L933.3,325.9 L928.2,325.1 L923.1,324.9 L918.2,325.3 L913.5,326.1 L909.0,327.5 L904.8,329.4 L900.9,331.8 L897.4,334.7 L894.3,338.0 L891.6,341.7 L889.4,345.7 L887.6,350.1 L886.4,354.8 L885.6,359.8 L885.4,364.9 L885.6,370.2 L886.4,375.6 L887.6,381.0 L889.4,386.4 L891.6,391.8 L894.3,397.1 L897.4,402.2 L900.9,407.0 L904.8,411.7 L909.0,416.0 L913.5,420.0 L918.2,423.5 L923.1,426.7 L928.2,429.5 L933.3,431.7 L938.5,433.5 L943.8,434.7 L948.9,435.5 L954.0,435.7 L958.9,435.3 L963.6,434.4 L968.1,433.1 L972.3,431.2 L976.1,428.8 L979.7,425.9 L982.8,422.6 L985.4,418.9 L987.7,414.8 L989.4,410.4 L990.7,405.7 L991.5,400.8Z'/></clipPath>
<path d='M991.7,395.7 L991.5,390.4 L990.7,385.0 L989.4,379.6 L987.7,374.1 L985.4,368.8 L982.8,363.5 L979.7,358.4 L976.1,353.6 L972.3,348.9 L968.1,344.6 L963.6,340.6 L958.9,337.0 L954.0,333.9 L948.9,331.1 L943.8,328.9 L938.5,327.1 L933.3,325.9 L928.2,325.1 L923.1,324.9 L918.2,325.3 L913.5,326.1 L909.0,327.5 L904.8,329.4 L900.9,331.8 L897.4,334.7 L894.3,338.0 L891.6,341.7 L889.4,345.7 L887.6,350.1 L886.4,354.8 L885.6,359.8 L885.4,364.9 L885.6,370.2 L886.4,375.6 L887.6,381.0 L889.4,386.4 L891.6,391.8 L894.3,397.1 L897.4,402.2 L900.9,407.0 L904.8,411.7 L909.0,416.0 L913.5,420.0 L918.2,423.5 L923.1,426.7 L928.2,429.5 L933.3,431.7 L938.5,433.5 L943.8,434.7 L948.9,435.5 L954.0,435.7 L958.9,435.3 L963.6,434.4 L968.1,433.1 L972.3,431.2 L976.1,428.8 L979.7,425.9 L982.8,422.6 L985.4,418.9 L987.7,414.8 L989.4,410.4 L990.7,405.7 L991.5,400.8ZM1004.8,384.4 L1004.5,379.1 L1003.7,373.7 L1002.5,368.3 L1000.7,362.9 L998.5,357.5 L995.8,352.3 L992.7,347.2 L989.2,342.3 L985.3,337.7 L981.1,333.3 L976.6,329.4 L971.9,325.8 L967.0,322.6 L961.9,319.9 L956.8,317.6 L951.6,315.8 L946.4,314.6 L941.2,313.9 L936.1,313.7 L931.2,314.0 L926.5,314.9 L922.0,316.3 L917.8,318.2 L914.0,320.5 L910.5,323.4 L907.3,326.7 L904.7,330.4 L902.4,334.5 L900.7,338.9 L899.4,343.6 L898.6,348.5 L898.4,353.7 L898.6,358.9 L899.4,364.3 L900.7,369.8 L902.4,375.2 L904.7,380.5 L907.3,385.8 L910.5,390.9 L914.0,395.8 L917.8,400.4 L922.0,404.7 L926.5,408.7 L931.2,412.3 L936.1,415.5 L941.2,418.2 L946.4,420.4 L951.6,422.2 L956.8,423.5 L961.9,424.2 L967.0,424.4 L971.9,424.0 L976.6,423.2 L981.1,421.8 L985.3,419.9 L989.2,417.5 L992.7,414.6 L995.8,411.4 L998.5,407.7 L1000.7,403.6 L1002.5,399.2 L1003.7,394.5 L1004.5,389.5Z' fill-rule='evenodd' fill='url(#wallg)' clip-path='url(#hc0)'/>
<path d='M991.7,395.7 L991.5,390.4 L990.7,385.0 L989.4,379.6 L987.7,374.1 L985.4,368.8 L982.8,363.5 L979.7,358.4 L976.1,353.6 L972.3,348.9 L968.1,344.6 L963.6,340.6 L958.9,337.0 L954.0,333.9 L948.9,331.1 L943.8,328.9 L938.5,327.1 L933.3,325.9 L928.2,325.1 L923.1,324.9 L918.2,325.3 L913.5,326.1 L909.0,327.5 L904.8,329.4 L900.9,331.8 L897.4,334.7 L894.3,338.0 L891.6,341.7 L889.4,345.7 L887.6,350.1 L886.4,354.8 L885.6,359.8 L885.4,364.9 L885.6,370.2 L886.4,375.6 L887.6,381.0 L889.4,386.4 L891.6,391.8 L894.3,397.1 L897.4,402.2 L900.9,407.0 L904.8,411.7 L909.0,416.0 L913.5,420.0 L918.2,423.5 L923.1,426.7 L928.2,429.5 L933.3,431.7 L938.5,433.5 L943.8,434.7 L948.9,435.5 L954.0,435.7 L958.9,435.3 L963.6,434.4 L968.1,433.1 L972.3,431.2 L976.1,428.8 L979.7,425.9 L982.8,422.6 L985.4,418.9 L987.7,414.8 L989.4,410.4 L990.7,405.7 L991.5,400.8Z' fill='none' stroke='#161616' stroke-width='1'/>
<path d='M1004.8,384.4 L1004.5,379.1 L1003.7,373.7 L1002.5,368.3 L1000.7,362.9 L998.5,357.5 L995.8,352.3 L992.7,347.2 L989.2,342.3 L985.3,337.7 L981.1,333.3 L976.6,329.4 L971.9,325.8 L967.0,322.6 L961.9,319.9 L956.8,317.6 L951.6,315.8 L946.4,314.6 L941.2,313.9 L936.1,313.7 L931.2,314.0 L926.5,314.9 L922.0,316.3 L917.8,318.2 L914.0,320.5 L910.5,323.4 L907.3,326.7 L904.7,330.4 L902.4,334.5 L900.7,338.9 L899.4,343.6 L898.6,348.5 L898.4,353.7 L898.6,358.9 L899.4,364.3 L900.7,369.8 L902.4,375.2 L904.7,380.5 L907.3,385.8 L910.5,390.9 L914.0,395.8 L917.8,400.4 L922.0,404.7 L926.5,408.7 L931.2,412.3 L936.1,415.5 L941.2,418.2 L946.4,420.4 L951.6,422.2 L956.8,423.5 L961.9,424.2 L967.0,424.4 L971.9,424.0 L976.6,423.2 L981.1,421.8 L985.3,419.9 L989.2,417.5 L992.7,414.6 L995.8,411.4 L998.5,407.7 L1000.7,403.6 L1002.5,399.2 L1003.7,394.5 L1004.5,389.5Z' fill='none' stroke='#222' stroke-width='.9' clip-path='url(#hc0)'/>
<clipPath id='hc1'><path d='M1254.6,471.6 L1254.3,466.3 L1253.6,461.0 L1252.3,455.5 L1250.5,450.1 L1248.3,444.7 L1245.6,439.5 L1242.5,434.4 L1239.0,429.5 L1235.1,424.9 L1230.9,420.6 L1226.5,416.6 L1221.8,413.0 L1216.8,409.8 L1211.8,407.1 L1206.6,404.8 L1201.4,403.1 L1196.2,401.8 L1191.0,401.1 L1186.0,400.9 L1181.0,401.2 L1176.3,402.1 L1171.9,403.5 L1167.7,405.4 L1163.8,407.8 L1160.3,410.6 L1157.2,413.9 L1154.5,417.6 L1152.3,421.7 L1150.5,426.1 L1149.2,430.8 L1148.5,435.8 L1148.2,440.9 L1148.5,446.2 L1149.2,451.6 L1150.5,457.0 L1152.3,462.4 L1154.5,467.8 L1157.2,473.0 L1160.3,478.1 L1163.8,483.0 L1167.7,487.6 L1171.9,491.9 L1176.3,495.9 L1181.0,499.5 L1186.0,502.7 L1191.0,505.4 L1196.2,507.7 L1201.4,509.4 L1206.6,510.7 L1211.8,511.4 L1216.8,511.6 L1221.8,511.3 L1226.5,510.4 L1230.9,509.0 L1235.1,507.1 L1239.0,504.7 L1242.5,501.9 L1245.6,498.6 L1248.3,494.9 L1250.5,490.8 L1252.3,486.4 L1253.6,481.7 L1254.3,476.8Z'/></clipPath>
<path d='M1254.6,471.6 L1254.3,466.3 L1253.6,461.0 L1252.3,455.5 L1250.5,450.1 L1248.3,444.7 L1245.6,439.5 L1242.5,434.4 L1239.0,429.5 L1235.1,424.9 L1230.9,420.6 L1226.5,416.6 L1221.8,413.0 L1216.8,409.8 L1211.8,407.1 L1206.6,404.8 L1201.4,403.1 L1196.2,401.8 L1191.0,401.1 L1186.0,400.9 L1181.0,401.2 L1176.3,402.1 L1171.9,403.5 L1167.7,405.4 L1163.8,407.8 L1160.3,410.6 L1157.2,413.9 L1154.5,417.6 L1152.3,421.7 L1150.5,426.1 L1149.2,430.8 L1148.5,435.8 L1148.2,440.9 L1148.5,446.2 L1149.2,451.6 L1150.5,457.0 L1152.3,462.4 L1154.5,467.8 L1157.2,473.0 L1160.3,478.1 L1163.8,483.0 L1167.7,487.6 L1171.9,491.9 L1176.3,495.9 L1181.0,499.5 L1186.0,502.7 L1191.0,505.4 L1196.2,507.7 L1201.4,509.4 L1206.6,510.7 L1211.8,511.4 L1216.8,511.6 L1221.8,511.3 L1226.5,510.4 L1230.9,509.0 L1235.1,507.1 L1239.0,504.7 L1242.5,501.9 L1245.6,498.6 L1248.3,494.9 L1250.5,490.8 L1252.3,486.4 L1253.6,481.7 L1254.3,476.8ZM1267.6,460.4 L1267.4,455.1 L1266.6,449.7 L1265.3,444.3 L1263.6,438.8 L1261.3,433.5 L1258.7,428.2 L1255.5,423.1 L1252.0,418.3 L1248.2,413.6 L1244.0,409.3 L1239.5,405.3 L1234.8,401.7 L1229.9,398.6 L1224.8,395.8 L1219.6,393.6 L1214.4,391.8 L1209.2,390.6 L1204.1,389.8 L1199.0,389.6 L1194.1,390.0 L1189.4,390.8 L1184.9,392.2 L1180.7,394.1 L1176.8,396.5 L1173.3,399.4 L1170.2,402.7 L1167.5,406.4 L1165.3,410.4 L1163.5,414.8 L1162.3,419.5 L1161.5,424.5 L1161.2,429.6 L1161.5,434.9 L1162.3,440.3 L1163.5,445.7 L1165.3,451.1 L1167.5,456.5 L1170.2,461.8 L1173.3,466.9 L1176.8,471.7 L1180.7,476.4 L1184.9,480.7 L1189.4,484.7 L1194.1,488.2 L1199.0,491.4 L1204.1,494.2 L1209.2,496.4 L1214.4,498.2 L1219.6,499.4 L1224.8,500.2 L1229.9,500.4 L1234.8,500.0 L1239.5,499.1 L1244.0,497.8 L1248.2,495.9 L1252.0,493.5 L1255.5,490.6 L1258.7,487.3 L1261.3,483.6 L1263.6,479.5 L1265.3,475.1 L1266.6,470.4 L1267.4,465.5Z' fill-rule='evenodd' fill='url(#wallg)' clip-path='url(#hc1)'/>
<path d='M1254.6,471.6 L1254.3,466.3 L1253.6,461.0 L1252.3,455.5 L1250.5,450.1 L1248.3,444.7 L1245.6,439.5 L1242.5,434.4 L1239.0,429.5 L1235.1,424.9 L1230.9,420.6 L1226.5,416.6 L1221.8,413.0 L1216.8,409.8 L1211.8,407.1 L1206.6,404.8 L1201.4,403.1 L1196.2,401.8 L1191.0,401.1 L1186.0,400.9 L1181.0,401.2 L1176.3,402.1 L1171.9,403.5 L1167.7,405.4 L1163.8,407.8 L1160.3,410.6 L1157.2,413.9 L1154.5,417.6 L1152.3,421.7 L1150.5,426.1 L1149.2,430.8 L1148.5,435.8 L1148.2,440.9 L1148.5,446.2 L1149.2,451.6 L1150.5,457.0 L1152.3,462.4 L1154.5,467.8 L1157.2,473.0 L1160.3,478.1 L1163.8,483.0 L1167.7,487.6 L1171.9,491.9 L1176.3,495.9 L1181.0,499.5 L1186.0,502.7 L1191.0,505.4 L1196.2,507.7 L1201.4,509.4 L1206.6,510.7 L1211.8,511.4 L1216.8,511.6 L1221.8,511.3 L1226.5,510.4 L1230.9,509.0 L1235.1,507.1 L1239.0,504.7 L1242.5,501.9 L1245.6,498.6 L1248.3,494.9 L1250.5,490.8 L1252.3,486.4 L1253.6,481.7 L1254.3,476.8Z' fill='none' stroke='#161616' stroke-width='1'/>
<path d='M1267.6,460.4 L1267.4,455.1 L1266.6,449.7 L1265.3,444.3 L1263.6,438.8 L1261.3,433.5 L1258.7,428.2 L1255.5,423.1 L1252.0,418.3 L1248.2,413.6 L1244.0,409.3 L1239.5,405.3 L1234.8,401.7 L1229.9,398.6 L1224.8,395.8 L1219.6,393.6 L1214.4,391.8 L1209.2,390.6 L1204.1,389.8 L1199.0,389.6 L1194.1,390.0 L1189.4,390.8 L1184.9,392.2 L1180.7,394.1 L1176.8,396.5 L1173.3,399.4 L1170.2,402.7 L1167.5,406.4 L1165.3,410.4 L1163.5,414.8 L1162.3,419.5 L1161.5,424.5 L1161.2,429.6 L1161.5,434.9 L1162.3,440.3 L1163.5,445.7 L1165.3,451.1 L1167.5,456.5 L1170.2,461.8 L1173.3,466.9 L1176.8,471.7 L1180.7,476.4 L1184.9,480.7 L1189.4,484.7 L1194.1,488.2 L1199.0,491.4 L1204.1,494.2 L1209.2,496.4 L1214.4,498.2 L1219.6,499.4 L1224.8,500.2 L1229.9,500.4 L1234.8,500.0 L1239.5,499.1 L1244.0,497.8 L1248.2,495.9 L1252.0,493.5 L1255.5,490.6 L1258.7,487.3 L1261.3,483.6 L1263.6,479.5 L1265.3,475.1 L1266.6,470.4 L1267.4,465.5Z' fill='none' stroke='#222' stroke-width='.9' clip-path='url(#hc1)'/>
<clipPath id='hc2'><path d='M1117.9,442.9 L1117.7,438.1 L1117.0,433.3 L1115.9,428.4 L1114.3,423.5 L1112.3,418.6 L1109.9,413.9 L1107.1,409.3 L1103.9,404.9 L1100.4,400.7 L1096.6,396.8 L1092.6,393.2 L1088.3,390.0 L1083.9,387.1 L1079.3,384.7 L1074.7,382.6 L1070.0,381.0 L1065.3,379.9 L1060.6,379.3 L1056.0,379.1 L1051.6,379.4 L1047.4,380.2 L1043.3,381.4 L1039.5,383.1 L1036.1,385.3 L1032.9,387.9 L1030.1,390.8 L1027.7,394.2 L1025.7,397.9 L1024.1,401.8 L1022.9,406.1 L1022.2,410.5 L1022.0,415.2 L1022.2,419.9 L1022.9,424.8 L1024.1,429.7 L1025.7,434.6 L1027.7,439.4 L1030.1,444.1 L1032.9,448.7 L1036.1,453.1 L1039.5,457.3 L1043.3,461.2 L1047.4,464.8 L1051.6,468.0 L1056.0,470.9 L1060.6,473.4 L1065.3,475.4 L1070.0,477.0 L1074.7,478.1 L1079.3,478.8 L1083.9,478.9 L1088.3,478.6 L1092.6,477.9 L1096.6,476.6 L1100.4,474.9 L1103.9,472.7 L1107.1,470.2 L1109.9,467.2 L1112.3,463.9 L1114.3,460.2 L1115.9,456.2 L1117.0,452.0 L1117.7,447.5Z'/></clipPath>
<path d='M1117.9,442.9 L1117.7,438.1 L1117.0,433.3 L1115.9,428.4 L1114.3,423.5 L1112.3,418.6 L1109.9,413.9 L1107.1,409.3 L1103.9,404.9 L1100.4,400.7 L1096.6,396.8 L1092.6,393.2 L1088.3,390.0 L1083.9,387.1 L1079.3,384.7 L1074.7,382.6 L1070.0,381.0 L1065.3,379.9 L1060.6,379.3 L1056.0,379.1 L1051.6,379.4 L1047.4,380.2 L1043.3,381.4 L1039.5,383.1 L1036.1,385.3 L1032.9,387.9 L1030.1,390.8 L1027.7,394.2 L1025.7,397.9 L1024.1,401.8 L1022.9,406.1 L1022.2,410.5 L1022.0,415.2 L1022.2,419.9 L1022.9,424.8 L1024.1,429.7 L1025.7,434.6 L1027.7,439.4 L1030.1,444.1 L1032.9,448.7 L1036.1,453.1 L1039.5,457.3 L1043.3,461.2 L1047.4,464.8 L1051.6,468.0 L1056.0,470.9 L1060.6,473.4 L1065.3,475.4 L1070.0,477.0 L1074.7,478.1 L1079.3,478.8 L1083.9,478.9 L1088.3,478.6 L1092.6,477.9 L1096.6,476.6 L1100.4,474.9 L1103.9,472.7 L1107.1,470.2 L1109.9,467.2 L1112.3,463.9 L1114.3,460.2 L1115.9,456.2 L1117.0,452.0 L1117.7,447.5ZM1131.0,431.6 L1130.7,426.8 L1130.0,422.0 L1128.9,417.1 L1127.3,412.2 L1125.3,407.4 L1122.9,402.6 L1120.1,398.0 L1116.9,393.6 L1113.4,389.5 L1109.7,385.6 L1105.6,382.0 L1101.4,378.7 L1096.9,375.9 L1092.4,373.4 L1087.7,371.4 L1083.0,369.8 L1078.3,368.7 L1073.6,368.0 L1069.1,367.8 L1064.6,368.1 L1060.4,368.9 L1056.3,370.2 L1052.6,371.9 L1049.1,374.0 L1045.9,376.6 L1043.1,379.6 L1040.7,382.9 L1038.7,386.6 L1037.1,390.6 L1036.0,394.8 L1035.3,399.2 L1035.0,403.9 L1035.3,408.7 L1036.0,413.5 L1037.1,418.4 L1038.7,423.3 L1040.7,428.1 L1043.1,432.9 L1045.9,437.5 L1049.1,441.9 L1052.6,446.0 L1056.3,449.9 L1060.4,453.5 L1064.6,456.8 L1069.1,459.6 L1073.6,462.1 L1078.3,464.1 L1083.0,465.7 L1087.7,466.8 L1092.4,467.5 L1096.9,467.7 L1101.4,467.4 L1105.6,466.6 L1109.7,465.3 L1113.4,463.6 L1116.9,461.5 L1120.1,458.9 L1122.9,455.9 L1125.3,452.6 L1127.3,448.9 L1128.9,444.9 L1130.0,440.7 L1130.7,436.2Z' fill-rule='evenodd' fill='url(#wallg)' clip-path='url(#hc2)'/>
<path d='M1117.9,442.9 L1117.7,438.1 L1117.0,433.3 L1115.9,428.4 L1114.3,423.5 L1112.3,418.6 L1109.9,413.9 L1107.1,409.3 L1103.9,404.9 L1100.4,400.7 L1096.6,396.8 L1092.6,393.2 L1088.3,390.0 L1083.9,387.1 L1079.3,384.7 L1074.7,382.6 L1070.0,381.0 L1065.3,379.9 L1060.6,379.3 L1056.0,379.1 L1051.6,379.4 L1047.4,380.2 L1043.3,381.4 L1039.5,383.1 L1036.1,385.3 L1032.9,387.9 L1030.1,390.8 L1027.7,394.2 L1025.7,397.9 L1024.1,401.8 L1022.9,406.1 L1022.2,410.5 L1022.0,415.2 L1022.2,419.9 L1022.9,424.8 L1024.1,429.7 L1025.7,434.6 L1027.7,439.4 L1030.1,444.1 L1032.9,448.7 L1036.1,453.1 L1039.5,457.3 L1043.3,461.2 L1047.4,464.8 L1051.6,468.0 L1056.0,470.9 L1060.6,473.4 L1065.3,475.4 L1070.0,477.0 L1074.7,478.1 L1079.3,478.8 L1083.9,478.9 L1088.3,478.6 L1092.6,477.9 L1096.6,476.6 L1100.4,474.9 L1103.9,472.7 L1107.1,470.2 L1109.9,467.2 L1112.3,463.9 L1114.3,460.2 L1115.9,456.2 L1117.0,452.0 L1117.7,447.5Z' fill='none' stroke='#161616' stroke-width='1'/>
<path d='M1131.0,431.6 L1130.7,426.8 L1130.0,422.0 L1128.9,417.1 L1127.3,412.2 L1125.3,407.4 L1122.9,402.6 L1120.1,398.0 L1116.9,393.6 L1113.4,389.5 L1109.7,385.6 L1105.6,382.0 L1101.4,378.7 L1096.9,375.9 L1092.4,373.4 L1087.7,371.4 L1083.0,369.8 L1078.3,368.7 L1073.6,368.0 L1069.1,367.8 L1064.6,368.1 L1060.4,368.9 L1056.3,370.2 L1052.6,371.9 L1049.1,374.0 L1045.9,376.6 L1043.1,379.6 L1040.7,382.9 L1038.7,386.6 L1037.1,390.6 L1036.0,394.8 L1035.3,399.2 L1035.0,403.9 L1035.3,408.7 L1036.0,413.5 L1037.1,418.4 L1038.7,423.3 L1040.7,428.1 L1043.1,432.9 L1045.9,437.5 L1049.1,441.9 L1052.6,446.0 L1056.3,449.9 L1060.4,453.5 L1064.6,456.8 L1069.1,459.6 L1073.6,462.1 L1078.3,464.1 L1083.0,465.7 L1087.7,466.8 L1092.4,467.5 L1096.9,467.7 L1101.4,467.4 L1105.6,466.6 L1109.7,465.3 L1113.4,463.6 L1116.9,461.5 L1120.1,458.9 L1122.9,455.9 L1125.3,452.6 L1127.3,448.9 L1128.9,444.9 L1130.0,440.7 L1130.7,436.2Z' fill='none' stroke='#222' stroke-width='.9' clip-path='url(#hc2)'/>
<clipPath id='hc3'><path d='M1117.9,593.2 L1117.7,588.5 L1117.0,583.6 L1115.9,578.7 L1114.3,573.8 L1112.3,569.0 L1109.9,564.2 L1107.1,559.7 L1103.9,555.3 L1100.4,551.1 L1096.6,547.2 L1092.6,543.6 L1088.3,540.4 L1083.9,537.5 L1079.3,535.0 L1074.7,533.0 L1070.0,531.4 L1065.3,530.3 L1060.6,529.6 L1056.0,529.4 L1051.6,529.7 L1047.4,530.5 L1043.3,531.8 L1039.5,533.5 L1036.1,535.6 L1032.9,538.2 L1030.1,541.2 L1027.7,544.5 L1025.7,548.2 L1024.1,552.2 L1022.9,556.4 L1022.2,560.9 L1022.0,565.5 L1022.2,570.3 L1022.9,575.1 L1024.1,580.0 L1025.7,584.9 L1027.7,589.8 L1030.1,594.5 L1032.9,599.1 L1036.1,603.5 L1039.5,607.7 L1043.3,611.6 L1047.4,615.1 L1051.6,618.4 L1056.0,621.2 L1060.6,623.7 L1065.3,625.7 L1070.0,627.3 L1074.7,628.5 L1079.3,629.1 L1083.9,629.3 L1088.3,629.0 L1092.6,628.2 L1096.6,627.0 L1100.4,625.2 L1103.9,623.1 L1107.1,620.5 L1109.9,617.5 L1112.3,614.2 L1114.3,610.5 L1115.9,606.6 L1117.0,602.3 L1117.7,597.9Z'/></clipPath>
<path d='M1117.9,593.2 L1117.7,588.5 L1117.0,583.6 L1115.9,578.7 L1114.3,573.8 L1112.3,569.0 L1109.9,564.2 L1107.1,559.7 L1103.9,555.3 L1100.4,551.1 L1096.6,547.2 L1092.6,543.6 L1088.3,540.4 L1083.9,537.5 L1079.3,535.0 L1074.7,533.0 L1070.0,531.4 L1065.3,530.3 L1060.6,529.6 L1056.0,529.4 L1051.6,529.7 L1047.4,530.5 L1043.3,531.8 L1039.5,533.5 L1036.1,535.6 L1032.9,538.2 L1030.1,541.2 L1027.7,544.5 L1025.7,548.2 L1024.1,552.2 L1022.9,556.4 L1022.2,560.9 L1022.0,565.5 L1022.2,570.3 L1022.9,575.1 L1024.1,580.0 L1025.7,584.9 L1027.7,589.8 L1030.1,594.5 L1032.9,599.1 L1036.1,603.5 L1039.5,607.7 L1043.3,611.6 L1047.4,615.1 L1051.6,618.4 L1056.0,621.2 L1060.6,623.7 L1065.3,625.7 L1070.0,627.3 L1074.7,628.5 L1079.3,629.1 L1083.9,629.3 L1088.3,629.0 L1092.6,628.2 L1096.6,627.0 L1100.4,625.2 L1103.9,623.1 L1107.1,620.5 L1109.9,617.5 L1112.3,614.2 L1114.3,610.5 L1115.9,606.6 L1117.0,602.3 L1117.7,597.9ZM1131.0,582.0 L1130.7,577.2 L1130.0,572.3 L1128.9,567.4 L1127.3,562.6 L1125.3,557.7 L1122.9,553.0 L1120.1,548.4 L1116.9,544.0 L1113.4,539.8 L1109.7,535.9 L1105.6,532.3 L1101.4,529.1 L1096.9,526.2 L1092.4,523.8 L1087.7,521.7 L1083.0,520.1 L1078.3,519.0 L1073.6,518.3 L1069.1,518.2 L1064.6,518.5 L1060.4,519.3 L1056.3,520.5 L1052.6,522.2 L1049.1,524.4 L1045.9,527.0 L1043.1,529.9 L1040.7,533.3 L1038.7,536.9 L1037.1,540.9 L1036.0,545.1 L1035.3,549.6 L1035.0,554.2 L1035.3,559.0 L1036.0,563.9 L1037.1,568.8 L1038.7,573.6 L1040.7,578.5 L1043.1,583.2 L1045.9,587.8 L1049.1,592.2 L1052.6,596.4 L1056.3,600.3 L1060.4,603.9 L1064.6,607.1 L1069.1,610.0 L1073.6,612.4 L1078.3,614.5 L1083.0,616.1 L1087.7,617.2 L1092.4,617.9 L1096.9,618.0 L1101.4,617.7 L1105.6,616.9 L1109.7,615.7 L1113.4,614.0 L1116.9,611.8 L1120.1,609.2 L1122.9,606.3 L1125.3,602.9 L1127.3,599.3 L1128.9,595.3 L1130.0,591.1 L1130.7,586.6Z' fill-rule='evenodd' fill='url(#wallg)' clip-path='url(#hc3)'/>
<path d='M1117.9,593.2 L1117.7,588.5 L1117.0,583.6 L1115.9,578.7 L1114.3,573.8 L1112.3,569.0 L1109.9,564.2 L1107.1,559.7 L1103.9,555.3 L1100.4,551.1 L1096.6,547.2 L1092.6,543.6 L1088.3,540.4 L1083.9,537.5 L1079.3,535.0 L1074.7,533.0 L1070.0,531.4 L1065.3,530.3 L1060.6,529.6 L1056.0,529.4 L1051.6,529.7 L1047.4,530.5 L1043.3,531.8 L1039.5,533.5 L1036.1,535.6 L1032.9,538.2 L1030.1,541.2 L1027.7,544.5 L1025.7,548.2 L1024.1,552.2 L1022.9,556.4 L1022.2,560.9 L1022.0,565.5 L1022.2,570.3 L1022.9,575.1 L1024.1,580.0 L1025.7,584.9 L1027.7,589.8 L1030.1,594.5 L1032.9,599.1 L1036.1,603.5 L1039.5,607.7 L1043.3,611.6 L1047.4,615.1 L1051.6,618.4 L1056.0,621.2 L1060.6,623.7 L1065.3,625.7 L1070.0,627.3 L1074.7,628.5 L1079.3,629.1 L1083.9,629.3 L1088.3,629.0 L1092.6,628.2 L1096.6,627.0 L1100.4,625.2 L1103.9,623.1 L1107.1,620.5 L1109.9,617.5 L1112.3,614.2 L1114.3,610.5 L1115.9,606.6 L1117.0,602.3 L1117.7,597.9Z' fill='none' stroke='#161616' stroke-width='1'/>
<path d='M1131.0,582.0 L1130.7,577.2 L1130.0,572.3 L1128.9,567.4 L1127.3,562.6 L1125.3,557.7 L1122.9,553.0 L1120.1,548.4 L1116.9,544.0 L1113.4,539.8 L1109.7,535.9 L1105.6,532.3 L1101.4,529.1 L1096.9,526.2 L1092.4,523.8 L1087.7,521.7 L1083.0,520.1 L1078.3,519.0 L1073.6,518.3 L1069.1,518.2 L1064.6,518.5 L1060.4,519.3 L1056.3,520.5 L1052.6,522.2 L1049.1,524.4 L1045.9,527.0 L1043.1,529.9 L1040.7,533.3 L1038.7,536.9 L1037.1,540.9 L1036.0,545.1 L1035.3,549.6 L1035.0,554.2 L1035.3,559.0 L1036.0,563.9 L1037.1,568.8 L1038.7,573.6 L1040.7,578.5 L1043.1,583.2 L1045.9,587.8 L1049.1,592.2 L1052.6,596.4 L1056.3,600.3 L1060.4,603.9 L1064.6,607.1 L1069.1,610.0 L1073.6,612.4 L1078.3,614.5 L1083.0,616.1 L1087.7,617.2 L1092.4,617.9 L1096.9,618.0 L1101.4,617.7 L1105.6,616.9 L1109.7,615.7 L1113.4,614.0 L1116.9,611.8 L1120.1,609.2 L1122.9,606.3 L1125.3,602.9 L1127.3,599.3 L1128.9,595.3 L1130.0,591.1 L1130.7,586.6Z' fill='none' stroke='#222' stroke-width='.9' clip-path='url(#hc3)'/>
<clipPath id='hc4'><path d='M948.3,297.4 L948.2,296.6 L948.1,295.7 L947.9,294.8 L947.6,293.9 L947.2,293.0 L946.8,292.2 L946.3,291.4 L945.7,290.6 L945.1,289.8 L944.4,289.1 L943.7,288.4 L942.9,287.9 L942.1,287.3 L941.3,286.9 L940.4,286.5 L939.6,286.2 L938.7,286.0 L937.9,285.9 L937.0,285.9 L936.2,285.9 L935.5,286.1 L934.7,286.3 L934.0,286.6 L933.4,287.0 L932.8,287.5 L932.3,288.0 L931.9,288.6 L931.5,289.3 L931.2,290.0 L931.0,290.8 L930.9,291.6 L930.9,292.4 L930.9,293.3 L931.0,294.2 L931.2,295.0 L931.5,295.9 L931.9,296.8 L932.3,297.7 L932.8,298.5 L933.4,299.3 L934.0,300.1 L934.7,300.8 L935.5,301.4 L936.2,302.0 L937.0,302.5 L937.9,303.0 L938.7,303.3 L939.6,303.6 L940.4,303.8 L941.3,303.9 L942.1,304.0 L942.9,303.9 L943.7,303.8 L944.4,303.6 L945.1,303.2 L945.7,302.9 L946.3,302.4 L946.8,301.8 L947.2,301.2 L947.6,300.6 L947.9,299.9 L948.1,299.1 L948.2,298.3Z'/></clipPath>
<path d='M948.3,297.4 L948.2,296.6 L948.1,295.7 L947.9,294.8 L947.6,293.9 L947.2,293.0 L946.8,292.2 L946.3,291.4 L945.7,290.6 L945.1,289.8 L944.4,289.1 L943.7,288.4 L942.9,287.9 L942.1,287.3 L941.3,286.9 L940.4,286.5 L939.6,286.2 L938.7,286.0 L937.9,285.9 L937.0,285.9 L936.2,285.9 L935.5,286.1 L934.7,286.3 L934.0,286.6 L933.4,287.0 L932.8,287.5 L932.3,288.0 L931.9,288.6 L931.5,289.3 L931.2,290.0 L931.0,290.8 L930.9,291.6 L930.9,292.4 L930.9,293.3 L931.0,294.2 L931.2,295.0 L931.5,295.9 L931.9,296.8 L932.3,297.7 L932.8,298.5 L933.4,299.3 L934.0,300.1 L934.7,300.8 L935.5,301.4 L936.2,302.0 L937.0,302.5 L937.9,303.0 L938.7,303.3 L939.6,303.6 L940.4,303.8 L941.3,303.9 L942.1,304.0 L942.9,303.9 L943.7,303.8 L944.4,303.6 L945.1,303.2 L945.7,302.9 L946.3,302.4 L946.8,301.8 L947.2,301.2 L947.6,300.6 L947.9,299.9 L948.1,299.1 L948.2,298.3ZM961.3,286.2 L961.2,285.3 L961.1,284.4 L960.9,283.5 L960.6,282.7 L960.3,281.8 L959.8,280.9 L959.3,280.1 L958.7,279.3 L958.1,278.5 L957.4,277.8 L956.7,277.2 L955.9,276.6 L955.1,276.1 L954.3,275.6 L953.4,275.3 L952.6,275.0 L951.7,274.8 L950.9,274.6 L950.1,274.6 L949.3,274.7 L948.5,274.8 L947.8,275.0 L947.1,275.3 L946.4,275.7 L945.9,276.2 L945.4,276.7 L944.9,277.3 L944.6,278.0 L944.3,278.7 L944.1,279.5 L943.9,280.3 L943.9,281.1 L943.9,282.0 L944.1,282.9 L944.3,283.8 L944.6,284.7 L944.9,285.5 L945.4,286.4 L945.9,287.2 L946.4,288.0 L947.1,288.8 L947.8,289.5 L948.5,290.1 L949.3,290.7 L950.1,291.3 L950.9,291.7 L951.7,292.1 L952.6,292.4 L953.4,292.6 L954.3,292.7 L955.1,292.7 L955.9,292.7 L956.7,292.5 L957.4,292.3 L958.1,292.0 L958.7,291.6 L959.3,291.1 L959.8,290.6 L960.3,290.0 L960.6,289.3 L960.9,288.6 L961.1,287.8 L961.2,287.0Z' fill-rule='evenodd' fill='url(#wallg)' clip-path='url(#hc4)'/>
<path d='M948.3,297.4 L948.2,296.6 L948.1,295.7 L947.9,294.8 L947.6,293.9 L947.2,293.0 L946.8,292.2 L946.3,291.4 L945.7,290.6 L945.1,289.8 L944.4,289.1 L943.7,288.4 L942.9,287.9 L942.1,287.3 L941.3,286.9 L940.4,286.5 L939.6,286.2 L938.7,286.0 L937.9,285.9 L937.0,285.9 L936.2,285.9 L935.5,286.1 L934.7,286.3 L934.0,286.6 L933.4,287.0 L932.8,287.5 L932.3,288.0 L931.9,288.6 L931.5,289.3 L931.2,290.0 L931.0,290.8 L930.9,291.6 L930.9,292.4 L930.9,293.3 L931.0,294.2 L931.2,295.0 L931.5,295.9 L931.9,296.8 L932.3,297.7 L932.8,298.5 L933.4,299.3 L934.0,300.1 L934.7,300.8 L935.5,301.4 L936.2,302.0 L937.0,302.5 L937.9,303.0 L938.7,303.3 L939.6,303.6 L940.4,303.8 L941.3,303.9 L942.1,304.0 L942.9,303.9 L943.7,303.8 L944.4,303.6 L945.1,303.2 L945.7,302.9 L946.3,302.4 L946.8,301.8 L947.2,301.2 L947.6,300.6 L947.9,299.9 L948.1,299.1 L948.2,298.3Z' fill='none' stroke='#161616' stroke-width='1'/>
<clipPath id='hc5'><path d='M1209.1,372.8 L1209.0,372.0 L1208.9,371.1 L1208.7,370.2 L1208.4,369.3 L1208.0,368.4 L1207.6,367.6 L1207.1,366.7 L1206.5,365.9 L1205.9,365.2 L1205.2,364.5 L1204.5,363.8 L1203.7,363.2 L1202.9,362.7 L1202.1,362.3 L1201.2,361.9 L1200.4,361.6 L1199.5,361.4 L1198.7,361.3 L1197.9,361.3 L1197.1,361.3 L1196.3,361.5 L1195.5,361.7 L1194.9,362.0 L1194.2,362.4 L1193.7,362.8 L1193.1,363.4 L1192.7,364.0 L1192.3,364.7 L1192.1,365.4 L1191.9,366.1 L1191.7,367.0 L1191.7,367.8 L1191.7,368.7 L1191.9,369.5 L1192.1,370.4 L1192.3,371.3 L1192.7,372.2 L1193.1,373.0 L1193.7,373.9 L1194.2,374.7 L1194.9,375.4 L1195.5,376.1 L1196.3,376.8 L1197.1,377.4 L1197.9,377.9 L1198.7,378.3 L1199.5,378.7 L1200.4,379.0 L1201.2,379.2 L1202.1,379.3 L1202.9,379.4 L1203.7,379.3 L1204.5,379.2 L1205.2,378.9 L1205.9,378.6 L1206.5,378.2 L1207.1,377.8 L1207.6,377.2 L1208.0,376.6 L1208.4,376.0 L1208.7,375.2 L1208.9,374.5 L1209.0,373.7Z'/></clipPath>
<path d='M1209.1,372.8 L1209.0,372.0 L1208.9,371.1 L1208.7,370.2 L1208.4,369.3 L1208.0,368.4 L1207.6,367.6 L1207.1,366.7 L1206.5,365.9 L1205.9,365.2 L1205.2,364.5 L1204.5,363.8 L1203.7,363.2 L1202.9,362.7 L1202.1,362.3 L1201.2,361.9 L1200.4,361.6 L1199.5,361.4 L1198.7,361.3 L1197.9,361.3 L1197.1,361.3 L1196.3,361.5 L1195.5,361.7 L1194.9,362.0 L1194.2,362.4 L1193.7,362.8 L1193.1,363.4 L1192.7,364.0 L1192.3,364.7 L1192.1,365.4 L1191.9,366.1 L1191.7,367.0 L1191.7,367.8 L1191.7,368.7 L1191.9,369.5 L1192.1,370.4 L1192.3,371.3 L1192.7,372.2 L1193.1,373.0 L1193.7,373.9 L1194.2,374.7 L1194.9,375.4 L1195.5,376.1 L1196.3,376.8 L1197.1,377.4 L1197.9,377.9 L1198.7,378.3 L1199.5,378.7 L1200.4,379.0 L1201.2,379.2 L1202.1,379.3 L1202.9,379.4 L1203.7,379.3 L1204.5,379.2 L1205.2,378.9 L1205.9,378.6 L1206.5,378.2 L1207.1,377.8 L1207.6,377.2 L1208.0,376.6 L1208.4,376.0 L1208.7,375.2 L1208.9,374.5 L1209.0,373.7ZM1222.1,361.6 L1222.1,360.7 L1221.9,359.8 L1221.7,358.9 L1221.4,358.0 L1221.1,357.2 L1220.6,356.3 L1220.1,355.5 L1219.6,354.7 L1218.9,353.9 L1218.2,353.2 L1217.5,352.6 L1216.7,352.0 L1215.9,351.4 L1215.1,351.0 L1214.3,350.6 L1213.4,350.3 L1212.6,350.1 L1211.7,350.0 L1210.9,350.0 L1210.1,350.0 L1209.3,350.2 L1208.6,350.4 L1207.9,350.7 L1207.3,351.1 L1206.7,351.6 L1206.2,352.1 L1205.7,352.7 L1205.4,353.4 L1205.1,354.1 L1204.9,354.9 L1204.8,355.7 L1204.7,356.5 L1204.8,357.4 L1204.9,358.3 L1205.1,359.2 L1205.4,360.0 L1205.7,360.9 L1206.2,361.8 L1206.7,362.6 L1207.3,363.4 L1207.9,364.2 L1208.6,364.9 L1209.3,365.5 L1210.1,366.1 L1210.9,366.6 L1211.7,367.1 L1212.6,367.4 L1213.4,367.7 L1214.3,367.9 L1215.1,368.1 L1215.9,368.1 L1216.7,368.0 L1217.5,367.9 L1218.2,367.7 L1218.9,367.4 L1219.6,367.0 L1220.1,366.5 L1220.6,366.0 L1221.1,365.4 L1221.4,364.7 L1221.7,364.0 L1221.9,363.2 L1222.1,362.4Z' fill-rule='evenodd' fill='url(#wallg)' clip-path='url(#hc5)'/>
<path d='M1209.1,372.8 L1209.0,372.0 L1208.9,371.1 L1208.7,370.2 L1208.4,369.3 L1208.0,368.4 L1207.6,367.6 L1207.1,366.7 L1206.5,365.9 L1205.9,365.2 L1205.2,364.5 L1204.5,363.8 L1203.7,363.2 L1202.9,362.7 L1202.1,362.3 L1201.2,361.9 L1200.4,361.6 L1199.5,361.4 L1198.7,361.3 L1197.9,361.3 L1197.1,361.3 L1196.3,361.5 L1195.5,361.7 L1194.9,362.0 L1194.2,362.4 L1193.7,362.8 L1193.1,363.4 L1192.7,364.0 L1192.3,364.7 L1192.1,365.4 L1191.9,366.1 L1191.7,367.0 L1191.7,367.8 L1191.7,368.7 L1191.9,369.5 L1192.1,370.4 L1192.3,371.3 L1192.7,372.2 L1193.1,373.0 L1193.7,373.9 L1194.2,374.7 L1194.9,375.4 L1195.5,376.1 L1196.3,376.8 L1197.1,377.4 L1197.9,377.9 L1198.7,378.3 L1199.5,378.7 L1200.4,379.0 L1201.2,379.2 L1202.1,379.3 L1202.9,379.4 L1203.7,379.3 L1204.5,379.2 L1205.2,378.9 L1205.9,378.6 L1206.5,378.2 L1207.1,377.8 L1207.6,377.2 L1208.0,376.6 L1208.4,376.0 L1208.7,375.2 L1208.9,374.5 L1209.0,373.7Z' fill='none' stroke='#161616' stroke-width='1'/>
<clipPath id='hc6'><path d='M948.3,468.0 L948.2,467.1 L948.1,466.2 L947.9,465.4 L947.6,464.5 L947.2,463.6 L946.8,462.7 L946.3,461.9 L945.7,461.1 L945.1,460.4 L944.4,459.6 L943.7,459.0 L942.9,458.4 L942.1,457.9 L941.3,457.4 L940.4,457.1 L939.6,456.8 L938.7,456.6 L937.9,456.5 L937.0,456.4 L936.2,456.5 L935.5,456.6 L934.7,456.9 L934.0,457.2 L933.4,457.6 L932.8,458.0 L932.3,458.6 L931.9,459.2 L931.5,459.8 L931.2,460.6 L931.0,461.3 L930.9,462.1 L930.9,463.0 L930.9,463.8 L931.0,464.7 L931.2,465.6 L931.5,466.5 L931.9,467.4 L932.3,468.2 L932.8,469.1 L933.4,469.9 L934.0,470.6 L934.7,471.3 L935.5,472.0 L936.2,472.6 L937.0,473.1 L937.9,473.5 L938.7,473.9 L939.6,474.2 L940.4,474.4 L941.3,474.5 L942.1,474.5 L942.9,474.5 L943.7,474.3 L944.4,474.1 L945.1,473.8 L945.7,473.4 L946.3,472.9 L946.8,472.4 L947.2,471.8 L947.6,471.1 L947.9,470.4 L948.1,469.6 L948.2,468.8Z'/></clipPath>
<path d='M948.3,468.0 L948.2,467.1 L948.1,466.2 L947.9,465.4 L947.6,464.5 L947.2,463.6 L946.8,462.7 L946.3,461.9 L945.7,461.1 L945.1,460.4 L944.4,459.6 L943.7,459.0 L942.9,458.4 L942.1,457.9 L941.3,457.4 L940.4,457.1 L939.6,456.8 L938.7,456.6 L937.9,456.5 L937.0,456.4 L936.2,456.5 L935.5,456.6 L934.7,456.9 L934.0,457.2 L933.4,457.6 L932.8,458.0 L932.3,458.6 L931.9,459.2 L931.5,459.8 L931.2,460.6 L931.0,461.3 L930.9,462.1 L930.9,463.0 L930.9,463.8 L931.0,464.7 L931.2,465.6 L931.5,466.5 L931.9,467.4 L932.3,468.2 L932.8,469.1 L933.4,469.9 L934.0,470.6 L934.7,471.3 L935.5,472.0 L936.2,472.6 L937.0,473.1 L937.9,473.5 L938.7,473.9 L939.6,474.2 L940.4,474.4 L941.3,474.5 L942.1,474.5 L942.9,474.5 L943.7,474.3 L944.4,474.1 L945.1,473.8 L945.7,473.4 L946.3,472.9 L946.8,472.4 L947.2,471.8 L947.6,471.1 L947.9,470.4 L948.1,469.6 L948.2,468.8ZM961.3,456.7 L961.2,455.9 L961.1,455.0 L960.9,454.1 L960.6,453.2 L960.3,452.3 L959.8,451.5 L959.3,450.6 L958.7,449.8 L958.1,449.1 L957.4,448.4 L956.7,447.7 L955.9,447.1 L955.1,446.6 L954.3,446.2 L953.4,445.8 L952.6,445.5 L951.7,445.3 L950.9,445.2 L950.1,445.2 L949.3,445.2 L948.5,445.4 L947.8,445.6 L947.1,445.9 L946.4,446.3 L945.9,446.8 L945.4,447.3 L944.9,447.9 L944.6,448.6 L944.3,449.3 L944.1,450.1 L943.9,450.9 L943.9,451.7 L943.9,452.6 L944.1,453.4 L944.3,454.3 L944.6,455.2 L944.9,456.1 L945.4,457.0 L945.9,457.8 L946.4,458.6 L947.1,459.3 L947.8,460.0 L948.5,460.7 L949.3,461.3 L950.1,461.8 L950.9,462.2 L951.7,462.6 L952.6,462.9 L953.4,463.1 L954.3,463.2 L955.1,463.3 L955.9,463.2 L956.7,463.1 L957.4,462.8 L958.1,462.5 L958.7,462.1 L959.3,461.7 L959.8,461.1 L960.3,460.5 L960.6,459.9 L960.9,459.1 L961.1,458.4 L961.2,457.6Z' fill-rule='evenodd' fill='url(#wallg)' clip-path='url(#hc6)'/>
<path d='M948.3,468.0 L948.2,467.1 L948.1,466.2 L947.9,465.4 L947.6,464.5 L947.2,463.6 L946.8,462.7 L946.3,461.9 L945.7,461.1 L945.1,460.4 L944.4,459.6 L943.7,459.0 L942.9,458.4 L942.1,457.9 L941.3,457.4 L940.4,457.1 L939.6,456.8 L938.7,456.6 L937.9,456.5 L937.0,456.4 L936.2,456.5 L935.5,456.6 L934.7,456.9 L934.0,457.2 L933.4,457.6 L932.8,458.0 L932.3,458.6 L931.9,459.2 L931.5,459.8 L931.2,460.6 L931.0,461.3 L930.9,462.1 L930.9,463.0 L930.9,463.8 L931.0,464.7 L931.2,465.6 L931.5,466.5 L931.9,467.4 L932.3,468.2 L932.8,469.1 L933.4,469.9 L934.0,470.6 L934.7,471.3 L935.5,472.0 L936.2,472.6 L937.0,473.1 L937.9,473.5 L938.7,473.9 L939.6,474.2 L940.4,474.4 L941.3,474.5 L942.1,474.5 L942.9,474.5 L943.7,474.3 L944.4,474.1 L945.1,473.8 L945.7,473.4 L946.3,472.9 L946.8,472.4 L947.2,471.8 L947.6,471.1 L947.9,470.4 L948.1,469.6 L948.2,468.8Z' fill='none' stroke='#161616' stroke-width='1'/>
<clipPath id='hc7'><path d='M1209.1,543.4 L1209.0,542.5 L1208.9,541.6 L1208.7,540.7 L1208.4,539.9 L1208.0,539.0 L1207.6,538.1 L1207.1,537.3 L1206.5,536.5 L1205.9,535.7 L1205.2,535.0 L1204.5,534.4 L1203.7,533.8 L1202.9,533.3 L1202.1,532.8 L1201.2,532.5 L1200.4,532.2 L1199.5,532.0 L1198.7,531.8 L1197.9,531.8 L1197.1,531.9 L1196.3,532.0 L1195.5,532.2 L1194.9,532.5 L1194.2,532.9 L1193.7,533.4 L1193.1,533.9 L1192.7,534.5 L1192.3,535.2 L1192.1,535.9 L1191.9,536.7 L1191.7,537.5 L1191.7,538.3 L1191.7,539.2 L1191.9,540.1 L1192.1,541.0 L1192.3,541.9 L1192.7,542.7 L1193.1,543.6 L1193.7,544.4 L1194.2,545.2 L1194.9,546.0 L1195.5,546.7 L1196.3,547.3 L1197.1,547.9 L1197.9,548.4 L1198.7,548.9 L1199.5,549.3 L1200.4,549.6 L1201.2,549.8 L1202.1,549.9 L1202.9,549.9 L1203.7,549.9 L1204.5,549.7 L1205.2,549.5 L1205.9,549.2 L1206.5,548.8 L1207.1,548.3 L1207.6,547.8 L1208.0,547.2 L1208.4,546.5 L1208.7,545.8 L1208.9,545.0 L1209.0,544.2Z'/></clipPath>
<path d='M1209.1,543.4 L1209.0,542.5 L1208.9,541.6 L1208.7,540.7 L1208.4,539.9 L1208.0,539.0 L1207.6,538.1 L1207.1,537.3 L1206.5,536.5 L1205.9,535.7 L1205.2,535.0 L1204.5,534.4 L1203.7,533.8 L1202.9,533.3 L1202.1,532.8 L1201.2,532.5 L1200.4,532.2 L1199.5,532.0 L1198.7,531.8 L1197.9,531.8 L1197.1,531.9 L1196.3,532.0 L1195.5,532.2 L1194.9,532.5 L1194.2,532.9 L1193.7,533.4 L1193.1,533.9 L1192.7,534.5 L1192.3,535.2 L1192.1,535.9 L1191.9,536.7 L1191.7,537.5 L1191.7,538.3 L1191.7,539.2 L1191.9,540.1 L1192.1,541.0 L1192.3,541.9 L1192.7,542.7 L1193.1,543.6 L1193.7,544.4 L1194.2,545.2 L1194.9,546.0 L1195.5,546.7 L1196.3,547.3 L1197.1,547.9 L1197.9,548.4 L1198.7,548.9 L1199.5,549.3 L1200.4,549.6 L1201.2,549.8 L1202.1,549.9 L1202.9,549.9 L1203.7,549.9 L1204.5,549.7 L1205.2,549.5 L1205.9,549.2 L1206.5,548.8 L1207.1,548.3 L1207.6,547.8 L1208.0,547.2 L1208.4,546.5 L1208.7,545.8 L1208.9,545.0 L1209.0,544.2ZM1222.1,532.1 L1222.1,531.2 L1221.9,530.4 L1221.7,529.5 L1221.4,528.6 L1221.1,527.7 L1220.6,526.8 L1220.1,526.0 L1219.6,525.2 L1218.9,524.5 L1218.2,523.8 L1217.5,523.1 L1216.7,522.5 L1215.9,522.0 L1215.1,521.6 L1214.3,521.2 L1213.4,520.9 L1212.6,520.7 L1211.7,520.6 L1210.9,520.5 L1210.1,520.6 L1209.3,520.7 L1208.6,521.0 L1207.9,521.3 L1207.3,521.7 L1206.7,522.1 L1206.2,522.7 L1205.7,523.3 L1205.4,523.9 L1205.1,524.7 L1204.9,525.4 L1204.8,526.2 L1204.7,527.1 L1204.8,527.9 L1204.9,528.8 L1205.1,529.7 L1205.4,530.6 L1205.7,531.5 L1206.2,532.3 L1206.7,533.2 L1207.3,534.0 L1207.9,534.7 L1208.6,535.4 L1209.3,536.1 L1210.1,536.7 L1210.9,537.2 L1211.7,537.6 L1212.6,538.0 L1213.4,538.3 L1214.3,538.5 L1215.1,538.6 L1215.9,538.6 L1216.7,538.6 L1217.5,538.4 L1218.2,538.2 L1218.9,537.9 L1219.6,537.5 L1220.1,537.0 L1220.6,536.5 L1221.1,535.9 L1221.4,535.2 L1221.7,534.5 L1221.9,533.8 L1222.1,532.9Z' fill-rule='evenodd' fill='url(#wallg)' clip-path='url(#hc7)'/>
<path d='M1209.1,543.4 L1209.0,542.5 L1208.9,541.6 L1208.7,540.7 L1208.4,539.9 L1208.0,539.0 L1207.6,538.1 L1207.1,537.3 L1206.5,536.5 L1205.9,535.7 L1205.2,535.0 L1204.5,534.4 L1203.7,533.8 L1202.9,533.3 L1202.1,532.8 L1201.2,532.5 L1200.4,532.2 L1199.5,532.0 L1198.7,531.8 L1197.9,531.8 L1197.1,531.9 L1196.3,532.0 L1195.5,532.2 L1194.9,532.5 L1194.2,532.9 L1193.7,533.4 L1193.1,533.9 L1192.7,534.5 L1192.3,535.2 L1192.1,535.9 L1191.9,536.7 L1191.7,537.5 L1191.7,538.3 L1191.7,539.2 L1191.9,540.1 L1192.1,541.0 L1192.3,541.9 L1192.7,542.7 L1193.1,543.6 L1193.7,544.4 L1194.2,545.2 L1194.9,546.0 L1195.5,546.7 L1196.3,547.3 L1197.1,547.9 L1197.9,548.4 L1198.7,548.9 L1199.5,549.3 L1200.4,549.6 L1201.2,549.8 L1202.1,549.9 L1202.9,549.9 L1203.7,549.9 L1204.5,549.7 L1205.2,549.5 L1205.9,549.2 L1206.5,548.8 L1207.1,548.3 L1207.6,547.8 L1208.0,547.2 L1208.4,546.5 L1208.7,545.8 L1208.9,545.0 L1209.0,544.2Z' fill='none' stroke='#161616' stroke-width='1'/>
<clipPath id='hc8'><path d='M993.5,557.3 L993.5,556.4 L993.4,555.5 L993.1,554.6 L992.9,553.8 L992.5,552.9 L992.1,552.0 L991.5,551.2 L991.0,550.4 L990.3,549.6 L989.7,548.9 L988.9,548.3 L988.2,547.7 L987.3,547.2 L986.5,546.7 L985.7,546.4 L984.8,546.1 L984.0,545.9 L983.1,545.7 L982.3,545.7 L981.5,545.8 L980.7,545.9 L980.0,546.1 L979.3,546.4 L978.7,546.8 L978.1,547.3 L977.6,547.8 L977.2,548.4 L976.8,549.1 L976.5,549.8 L976.3,550.6 L976.2,551.4 L976.1,552.2 L976.2,553.1 L976.3,554.0 L976.5,554.9 L976.8,555.8 L977.2,556.6 L977.6,557.5 L978.1,558.3 L978.7,559.1 L979.3,559.9 L980.0,560.6 L980.7,561.2 L981.5,561.8 L982.3,562.3 L983.1,562.8 L984.0,563.2 L984.8,563.5 L985.7,563.7 L986.5,563.8 L987.3,563.8 L988.2,563.8 L988.9,563.6 L989.7,563.4 L990.3,563.1 L991.0,562.7 L991.5,562.2 L992.1,561.7 L992.5,561.1 L992.9,560.4 L993.1,559.7 L993.4,558.9 L993.5,558.1Z'/></clipPath>
<path d='M993.5,557.3 L993.5,556.4 L993.4,555.5 L993.1,554.6 L992.9,553.8 L992.5,552.9 L992.1,552.0 L991.5,551.2 L991.0,550.4 L990.3,549.6 L989.7,548.9 L988.9,548.3 L988.2,547.7 L987.3,547.2 L986.5,546.7 L985.7,546.4 L984.8,546.1 L984.0,545.9 L983.1,545.7 L982.3,545.7 L981.5,545.8 L980.7,545.9 L980.0,546.1 L979.3,546.4 L978.7,546.8 L978.1,547.3 L977.6,547.8 L977.2,548.4 L976.8,549.1 L976.5,549.8 L976.3,550.6 L976.2,551.4 L976.1,552.2 L976.2,553.1 L976.3,554.0 L976.5,554.9 L976.8,555.8 L977.2,556.6 L977.6,557.5 L978.1,558.3 L978.7,559.1 L979.3,559.9 L980.0,560.6 L980.7,561.2 L981.5,561.8 L982.3,562.3 L983.1,562.8 L984.0,563.2 L984.8,563.5 L985.7,563.7 L986.5,563.8 L987.3,563.8 L988.2,563.8 L988.9,563.6 L989.7,563.4 L990.3,563.1 L991.0,562.7 L991.5,562.2 L992.1,561.7 L992.5,561.1 L992.9,560.4 L993.1,559.7 L993.4,558.9 L993.5,558.1ZM1006.5,546.0 L1006.5,545.1 L1006.4,544.3 L1006.2,543.4 L1005.9,542.5 L1005.5,541.6 L1005.1,540.8 L1004.6,539.9 L1004.0,539.1 L1003.4,538.4 L1002.7,537.7 L1002.0,537.0 L1001.2,536.4 L1000.4,535.9 L999.5,535.5 L998.7,535.1 L997.9,534.8 L997.0,534.6 L996.2,534.5 L995.3,534.4 L994.5,534.5 L993.8,534.6 L993.0,534.9 L992.3,535.2 L991.7,535.6 L991.1,536.0 L990.6,536.6 L990.2,537.2 L989.8,537.8 L989.5,538.6 L989.3,539.3 L989.2,540.1 L989.2,541.0 L989.2,541.8 L989.3,542.7 L989.5,543.6 L989.8,544.5 L990.2,545.4 L990.6,546.2 L991.1,547.1 L991.7,547.9 L992.3,548.6 L993.0,549.3 L993.8,550.0 L994.5,550.6 L995.3,551.1 L996.2,551.5 L997.0,551.9 L997.9,552.2 L998.7,552.4 L999.5,552.5 L1000.4,552.5 L1001.2,552.5 L1002.0,552.3 L1002.7,552.1 L1003.4,551.8 L1004.0,551.4 L1004.6,550.9 L1005.1,550.4 L1005.5,549.8 L1005.9,549.1 L1006.2,548.4 L1006.4,547.7 L1006.5,546.8Z' fill-rule='evenodd' fill='url(#wallg)' clip-path='url(#hc8)'/>
<path d='M993.5,557.3 L993.5,556.4 L993.4,555.5 L993.1,554.6 L992.9,553.8 L992.5,552.9 L992.1,552.0 L991.5,551.2 L991.0,550.4 L990.3,549.6 L989.7,548.9 L988.9,548.3 L988.2,547.7 L987.3,547.2 L986.5,546.7 L985.7,546.4 L984.8,546.1 L984.0,545.9 L983.1,545.7 L982.3,545.7 L981.5,545.8 L980.7,545.9 L980.0,546.1 L979.3,546.4 L978.7,546.8 L978.1,547.3 L977.6,547.8 L977.2,548.4 L976.8,549.1 L976.5,549.8 L976.3,550.6 L976.2,551.4 L976.1,552.2 L976.2,553.1 L976.3,554.0 L976.5,554.9 L976.8,555.8 L977.2,556.6 L977.6,557.5 L978.1,558.3 L978.7,559.1 L979.3,559.9 L980.0,560.6 L980.7,561.2 L981.5,561.8 L982.3,562.3 L983.1,562.8 L984.0,563.2 L984.8,563.5 L985.7,563.7 L986.5,563.8 L987.3,563.8 L988.2,563.8 L988.9,563.6 L989.7,563.4 L990.3,563.1 L991.0,562.7 L991.5,562.2 L992.1,561.7 L992.5,561.1 L992.9,560.4 L993.1,559.7 L993.4,558.9 L993.5,558.1Z' fill='none' stroke='#161616' stroke-width='1'/>
<clipPath id='hc9'><path d='M1163.8,606.5 L1163.8,605.6 L1163.6,604.7 L1163.4,603.9 L1163.2,603.0 L1162.8,602.1 L1162.3,601.2 L1161.8,600.4 L1161.3,599.6 L1160.6,598.9 L1159.9,598.1 L1159.2,597.5 L1158.4,596.9 L1157.6,596.4 L1156.8,595.9 L1156.0,595.6 L1155.1,595.3 L1154.3,595.1 L1153.4,595.0 L1152.6,594.9 L1151.8,595.0 L1151.0,595.1 L1150.3,595.4 L1149.6,595.7 L1149.0,596.1 L1148.4,596.5 L1147.9,597.1 L1147.5,597.7 L1147.1,598.3 L1146.8,599.0 L1146.6,599.8 L1146.5,600.6 L1146.4,601.5 L1146.5,602.3 L1146.6,603.2 L1146.8,604.1 L1147.1,605.0 L1147.5,605.9 L1147.9,606.7 L1148.4,607.6 L1149.0,608.3 L1149.6,609.1 L1150.3,609.8 L1151.0,610.5 L1151.8,611.0 L1152.6,611.6 L1153.4,612.0 L1154.3,612.4 L1155.1,612.7 L1156.0,612.9 L1156.8,613.0 L1157.6,613.0 L1158.4,613.0 L1159.2,612.8 L1159.9,612.6 L1160.6,612.3 L1161.3,611.9 L1161.8,611.4 L1162.3,610.9 L1162.8,610.3 L1163.2,609.6 L1163.4,608.9 L1163.6,608.1 L1163.8,607.3Z'/></clipPath>
<path d='M1163.8,606.5 L1163.8,605.6 L1163.6,604.7 L1163.4,603.9 L1163.2,603.0 L1162.8,602.1 L1162.3,601.2 L1161.8,600.4 L1161.3,599.6 L1160.6,598.9 L1159.9,598.1 L1159.2,597.5 L1158.4,596.9 L1157.6,596.4 L1156.8,595.9 L1156.0,595.6 L1155.1,595.3 L1154.3,595.1 L1153.4,595.0 L1152.6,594.9 L1151.8,595.0 L1151.0,595.1 L1150.3,595.4 L1149.6,595.7 L1149.0,596.1 L1148.4,596.5 L1147.9,597.1 L1147.5,597.7 L1147.1,598.3 L1146.8,599.0 L1146.6,599.8 L1146.5,600.6 L1146.4,601.5 L1146.5,602.3 L1146.6,603.2 L1146.8,604.1 L1147.1,605.0 L1147.5,605.9 L1147.9,606.7 L1148.4,607.6 L1149.0,608.3 L1149.6,609.1 L1150.3,609.8 L1151.0,610.5 L1151.8,611.0 L1152.6,611.6 L1153.4,612.0 L1154.3,612.4 L1155.1,612.7 L1156.0,612.9 L1156.8,613.0 L1157.6,613.0 L1158.4,613.0 L1159.2,612.8 L1159.9,612.6 L1160.6,612.3 L1161.3,611.9 L1161.8,611.4 L1162.3,610.9 L1162.8,610.3 L1163.2,609.6 L1163.4,608.9 L1163.6,608.1 L1163.8,607.3ZM1176.8,595.2 L1176.8,594.4 L1176.7,593.5 L1176.5,592.6 L1176.2,591.7 L1175.8,590.8 L1175.4,590.0 L1174.9,589.1 L1174.3,588.3 L1173.7,587.6 L1173.0,586.9 L1172.2,586.2 L1171.5,585.6 L1170.7,585.1 L1169.8,584.7 L1169.0,584.3 L1168.1,584.0 L1167.3,583.8 L1166.5,583.7 L1165.6,583.7 L1164.8,583.7 L1164.0,583.9 L1163.3,584.1 L1162.6,584.4 L1162.0,584.8 L1161.4,585.3 L1160.9,585.8 L1160.5,586.4 L1160.1,587.1 L1159.8,587.8 L1159.6,588.5 L1159.5,589.4 L1159.5,590.2 L1159.5,591.1 L1159.6,591.9 L1159.8,592.8 L1160.1,593.7 L1160.5,594.6 L1160.9,595.4 L1161.4,596.3 L1162.0,597.1 L1162.6,597.8 L1163.3,598.5 L1164.0,599.2 L1164.8,599.8 L1165.6,600.3 L1166.5,600.7 L1167.3,601.1 L1168.1,601.4 L1169.0,601.6 L1169.8,601.7 L1170.7,601.8 L1171.5,601.7 L1172.2,601.6 L1173.0,601.3 L1173.7,601.0 L1174.3,600.6 L1174.9,600.2 L1175.4,599.6 L1175.8,599.0 L1176.2,598.4 L1176.5,597.6 L1176.7,596.9 L1176.8,596.1Z' fill-rule='evenodd' fill='url(#wallg)' clip-path='url(#hc9)'/>
<path d='M1163.8,606.5 L1163.8,605.6 L1163.6,604.7 L1163.4,603.9 L1163.2,603.0 L1162.8,602.1 L1162.3,601.2 L1161.8,600.4 L1161.3,599.6 L1160.6,598.9 L1159.9,598.1 L1159.2,597.5 L1158.4,596.9 L1157.6,596.4 L1156.8,595.9 L1156.0,595.6 L1155.1,595.3 L1154.3,595.1 L1153.4,595.0 L1152.6,594.9 L1151.8,595.0 L1151.0,595.1 L1150.3,595.4 L1149.6,595.7 L1149.0,596.1 L1148.4,596.5 L1147.9,597.1 L1147.5,597.7 L1147.1,598.3 L1146.8,599.0 L1146.6,599.8 L1146.5,600.6 L1146.4,601.5 L1146.5,602.3 L1146.6,603.2 L1146.8,604.1 L1147.1,605.0 L1147.5,605.9 L1147.9,606.7 L1148.4,607.6 L1149.0,608.3 L1149.6,609.1 L1150.3,609.8 L1151.0,610.5 L1151.8,611.0 L1152.6,611.6 L1153.4,612.0 L1154.3,612.4 L1155.1,612.7 L1156.0,612.9 L1156.8,613.0 L1157.6,613.0 L1158.4,613.0 L1159.2,612.8 L1159.9,612.6 L1160.6,612.3 L1161.3,611.9 L1161.8,611.4 L1162.3,610.9 L1162.8,610.3 L1163.2,609.6 L1163.4,608.9 L1163.6,608.1 L1163.8,607.3Z' fill='none' stroke='#161616' stroke-width='1'/>
<clipPath id='hc10'><path d='M1249.7,631.3 L1249.7,630.5 L1249.6,629.6 L1249.4,628.7 L1249.1,627.8 L1248.7,626.9 L1248.3,626.1 L1247.8,625.2 L1247.2,624.4 L1246.6,623.7 L1245.9,623.0 L1245.1,622.3 L1244.4,621.7 L1243.6,621.2 L1242.7,620.8 L1241.9,620.4 L1241.0,620.1 L1240.2,619.9 L1239.3,619.8 L1238.5,619.8 L1237.7,619.8 L1236.9,620.0 L1236.2,620.2 L1235.5,620.5 L1234.9,620.9 L1234.3,621.3 L1233.8,621.9 L1233.4,622.5 L1233.0,623.2 L1232.7,623.9 L1232.5,624.6 L1232.4,625.5 L1232.3,626.3 L1232.4,627.2 L1232.5,628.0 L1232.7,628.9 L1233.0,629.8 L1233.4,630.7 L1233.8,631.5 L1234.3,632.4 L1234.9,633.2 L1235.5,633.9 L1236.2,634.6 L1236.9,635.3 L1237.7,635.9 L1238.5,636.4 L1239.3,636.8 L1240.2,637.2 L1241.0,637.5 L1241.9,637.7 L1242.7,637.8 L1243.6,637.9 L1244.4,637.8 L1245.1,637.7 L1245.9,637.4 L1246.6,637.1 L1247.2,636.7 L1247.8,636.3 L1248.3,635.7 L1248.7,635.1 L1249.1,634.5 L1249.4,633.7 L1249.6,633.0 L1249.7,632.2Z'/></clipPath>
<path d='M1249.7,631.3 L1249.7,630.5 L1249.6,629.6 L1249.4,628.7 L1249.1,627.8 L1248.7,626.9 L1248.3,626.1 L1247.8,625.2 L1247.2,624.4 L1246.6,623.7 L1245.9,623.0 L1245.1,622.3 L1244.4,621.7 L1243.6,621.2 L1242.7,620.8 L1241.9,620.4 L1241.0,620.1 L1240.2,619.9 L1239.3,619.8 L1238.5,619.8 L1237.7,619.8 L1236.9,620.0 L1236.2,620.2 L1235.5,620.5 L1234.9,620.9 L1234.3,621.3 L1233.8,621.9 L1233.4,622.5 L1233.0,623.2 L1232.7,623.9 L1232.5,624.6 L1232.4,625.5 L1232.3,626.3 L1232.4,627.2 L1232.5,628.0 L1232.7,628.9 L1233.0,629.8 L1233.4,630.7 L1233.8,631.5 L1234.3,632.4 L1234.9,633.2 L1235.5,633.9 L1236.2,634.6 L1236.9,635.3 L1237.7,635.9 L1238.5,636.4 L1239.3,636.8 L1240.2,637.2 L1241.0,637.5 L1241.9,637.7 L1242.7,637.8 L1243.6,637.9 L1244.4,637.8 L1245.1,637.7 L1245.9,637.4 L1246.6,637.1 L1247.2,636.7 L1247.8,636.3 L1248.3,635.7 L1248.7,635.1 L1249.1,634.5 L1249.4,633.7 L1249.6,633.0 L1249.7,632.2ZM1262.8,620.1 L1262.7,619.2 L1262.6,618.3 L1262.4,617.4 L1262.1,616.5 L1261.7,615.7 L1261.3,614.8 L1260.8,614.0 L1260.2,613.2 L1259.6,612.4 L1258.9,611.7 L1258.2,611.1 L1257.4,610.5 L1256.6,609.9 L1255.8,609.5 L1254.9,609.1 L1254.1,608.8 L1253.2,608.6 L1252.4,608.5 L1251.5,608.5 L1250.7,608.5 L1250.0,608.7 L1249.2,608.9 L1248.5,609.2 L1247.9,609.6 L1247.3,610.1 L1246.8,610.6 L1246.4,611.2 L1246.0,611.9 L1245.7,612.6 L1245.5,613.4 L1245.4,614.2 L1245.4,615.0 L1245.4,615.9 L1245.5,616.8 L1245.7,617.7 L1246.0,618.5 L1246.4,619.4 L1246.8,620.3 L1247.3,621.1 L1247.9,621.9 L1248.5,622.7 L1249.2,623.4 L1250.0,624.0 L1250.7,624.6 L1251.5,625.1 L1252.4,625.6 L1253.2,625.9 L1254.1,626.2 L1254.9,626.4 L1255.8,626.6 L1256.6,626.6 L1257.4,626.5 L1258.2,626.4 L1258.9,626.2 L1259.6,625.9 L1260.2,625.5 L1260.8,625.0 L1261.3,624.5 L1261.7,623.9 L1262.1,623.2 L1262.4,622.5 L1262.6,621.7 L1262.7,620.9Z' fill-rule='evenodd' fill='url(#wallg)' clip-path='url(#hc10)'/>
<path d='M1249.7,631.3 L1249.7,630.5 L1249.6,629.6 L1249.4,628.7 L1249.1,627.8 L1248.7,626.9 L1248.3,626.1 L1247.8,625.2 L1247.2,624.4 L1246.6,623.7 L1245.9,623.0 L1245.1,622.3 L1244.4,621.7 L1243.6,621.2 L1242.7,620.8 L1241.9,620.4 L1241.0,620.1 L1240.2,619.9 L1239.3,619.8 L1238.5,619.8 L1237.7,619.8 L1236.9,620.0 L1236.2,620.2 L1235.5,620.5 L1234.9,620.9 L1234.3,621.3 L1233.8,621.9 L1233.4,622.5 L1233.0,623.2 L1232.7,623.9 L1232.5,624.6 L1232.4,625.5 L1232.3,626.3 L1232.4,627.2 L1232.5,628.0 L1232.7,628.9 L1233.0,629.8 L1233.4,630.7 L1233.8,631.5 L1234.3,632.4 L1234.9,633.2 L1235.5,633.9 L1236.2,634.6 L1236.9,635.3 L1237.7,635.9 L1238.5,636.4 L1239.3,636.8 L1240.2,637.2 L1241.0,637.5 L1241.9,637.7 L1242.7,637.8 L1243.6,637.9 L1244.4,637.8 L1245.1,637.7 L1245.9,637.4 L1246.6,637.1 L1247.2,636.7 L1247.8,636.3 L1248.3,635.7 L1248.7,635.1 L1249.1,634.5 L1249.4,633.7 L1249.6,633.0 L1249.7,632.2Z' fill='none' stroke='#161616' stroke-width='1'/>
<path d='M935.0,440.5 L1070.0,323.7 L1070.0,835.1 L935.0,951.9Z' fill='url(#pg)'/>
<path d='M935.0,440.5L1070.0,323.7' stroke='#9ab6d6' stroke-width='1.2'/>
<path d='M1070.0,835.1L935.0,951.9' stroke='#9ab6d6' stroke-width='1.2'/>
<path d='M935.0,951.9L935.0,440.5' stroke='#9ab6d6' stroke-width='1.2'/>
<path d='M679.2,622.2 L814.3,505.5 L1325.7,653.3 L1190.7,770.0Z' fill='url(#pg)'/>
<path d='M679.2,622.2L814.3,505.5' stroke='#9ab6d6' stroke-width='1.2'/>
<path d='M1325.7,653.3L1190.7,770.0' stroke='#9ab6d6' stroke-width='1.2'/>
<path d='M1190.7,770.0L679.2,622.2' stroke='#9ab6d6' stroke-width='1.2'/>
<text transform='matrix(0.7564,-0.6542,0.0000,1.0000,936.4,457.1)' font-family='Liberation Sans' font-size='13.5' fill='#3d6fb0'>Right</text>
<path d='M1105.9,426.6 L1105.5,419.6 L1024.6,489.7 L1024.9,496.6Z' fill='rgb(71,71,71)' stroke='#0c0c0c' stroke-width='0.8' stroke-opacity='.55'/><path d='M1105.5,419.6 L1096.4,402.9 L1015.4,472.9 L1024.6,489.7Z' fill='rgb(70,70,70)' stroke='#0c0c0c' stroke-width='0.8' stroke-opacity='.55'/><path d='M1096.4,402.9 L1090.3,398.0 L1009.3,468.1 L1015.4,472.9Z' fill='rgb(91,91,91)' stroke='#0c0c0c' stroke-width='0.8' stroke-opacity='.55'/><path d='M1090.3,398.0 L1073.5,394.1 L992.5,464.1 L1009.3,468.1Z' fill='rgb(73,73,73)' stroke='#0c0c0c' stroke-width='0.8' stroke-opacity='.55'/><path d='M1073.5,394.1 L1067.7,396.1 L986.8,466.2 L992.5,464.1Z' fill='rgb(78,78,78)' stroke='#0c0c0c' stroke-width='0.8' stroke-opacity='.55'/><path d='M1098.3,439.4 L1105.9,426.6 L1024.9,496.6 L1017.3,509.4Z' fill='rgb(43,43,43)' stroke='#0c0c0c' stroke-width='0.8' stroke-opacity='.55'/><path d='M1024.9,496.6 L1024.6,489.7 L1015.4,472.9 L1009.3,468.1 L992.5,464.1 L986.8,466.2 L979.1,478.9 L979.5,485.9 L988.6,502.6 L994.7,507.5 L1011.5,511.5 L1017.3,509.4Z' fill='#2c2c2c' stroke='#0c0c0c' stroke-width='0.9'/><path d='M1002.0,487.8L988.6,502.6 L994.7,507.5 L1011.5,511.5 L1017.3,509.4 L1024.9,496.6 L1024.6,489.7 L1015.4,472.9Z' fill='#202020'/><path d='M1009.7,490.0 L1009.5,488.5 L1009.1,486.9 L1008.4,485.4 L1007.4,483.9 L1006.3,482.6 L1005.0,481.6 L1003.5,480.7 L1002.0,480.1 L1000.5,479.8 L999.1,479.9 L997.8,480.2 L996.6,480.8 L995.6,481.7 L994.9,482.8 L994.5,484.1 L994.3,485.6 L994.5,487.1 L994.9,488.7 L995.6,490.2 L996.6,491.6 L997.8,492.9 L999.1,494.0 L1000.5,494.9 L1002.0,495.5 L1003.5,495.7 L1005.0,495.7 L1006.3,495.4 L1007.4,494.8 L1008.4,493.9 L1009.1,492.8 L1009.5,491.5Z' fill='#8a8a8a' stroke='#222' stroke-width='.7'/><path d='M1006.6,489.1 L1006.5,487.9 L1006.0,486.6 L1005.3,485.5 L1004.3,484.5 L1003.2,483.7 L1002.0,483.2 L1000.8,483.0 L999.7,483.1 L998.8,483.6 L998.0,484.3 L997.6,485.3 L997.4,486.5 L997.6,487.7 L998.0,488.9 L998.8,490.1 L999.7,491.1 L1000.8,491.9 L1002.0,492.4 L1003.2,492.6 L1004.3,492.4 L1005.3,492.0 L1006.0,491.2 L1006.5,490.3Z' fill='#b5b5b5'/>
<path d='M829.2,573.6 L829.2,572.0 L829.5,570.5 L829.9,569.1 L830.4,567.8 L831.0,566.6 L831.9,565.5 L832.8,564.5 L888.1,516.7 L889.1,515.8 L890.3,515.1 L891.6,514.5 L892.9,514.1 L894.3,513.8 L895.8,513.7 L897.3,513.8 L898.9,514.0 L900.4,514.4 L902.0,514.9 L903.6,515.6 L905.1,516.4 L906.6,517.4 L908.0,518.5 L909.3,519.6 L910.6,521.0 L911.7,522.3 L912.8,523.8 L913.7,525.3 L914.5,526.9 L915.2,528.5 L915.7,530.1 L916.1,531.8 L916.4,533.4 L916.4,535.0 L916.4,536.5 L916.1,538.0 L915.7,539.4 L915.2,540.8 L914.5,542.0 L913.7,543.1 L912.8,544.1 L857.5,591.9 L856.5,592.8 L855.3,593.5 L854.0,594.0 L852.7,594.5 L851.3,594.7 L849.8,594.8 L848.3,594.8 L846.7,594.6 L845.1,594.2 L843.6,593.6 L842.0,593.0 L840.5,592.1 L839.0,591.2 L837.6,590.1 L836.3,588.9 L835.0,587.6 L833.9,586.2 L832.8,584.8 L831.9,583.2 L831.0,581.7 L830.4,580.0 L829.9,578.4 L829.5,576.8 L829.2,575.2Z' fill='url(#greeng)' stroke='#1d4d1d' stroke-width='1'/>
<path d='M861.1,582.8 L861.1,581.2 L860.8,579.6 L860.4,578.0 L859.9,576.4 L859.2,574.7 L858.4,573.2 L857.5,571.6 L856.4,570.2 L855.3,568.8 L854.0,567.5 L852.7,566.3 L851.3,565.2 L849.8,564.2 L848.3,563.4 L846.7,562.7 L845.1,562.2 L843.6,561.8 L842.0,561.6 L840.5,561.6 L839.0,561.7 L837.6,561.9 L836.3,562.3 L835.0,562.9 L833.8,563.6 L832.8,564.5 L831.9,565.5 L831.1,566.6 L830.4,567.8 L829.9,569.1 L829.5,570.6 L829.2,572.0 L829.2,573.6 L829.2,575.2 L829.5,576.8 L829.9,578.4 L830.4,580.0 L831.1,581.7 L831.9,583.2 L832.8,584.8 L833.8,586.2 L835.0,587.6 L836.3,588.9 L837.6,590.1 L839.0,591.2 L840.5,592.2 L842.0,593.0 L843.6,593.7 L845.1,594.2 L846.7,594.6 L848.3,594.8 L849.8,594.8 L851.3,594.7 L852.7,594.5 L854.0,594.1 L855.3,593.5 L856.4,592.8 L857.5,591.9 L858.4,590.9 L859.2,589.8 L859.9,588.6 L860.4,587.3 L860.8,585.8 L861.1,584.4Z' fill='#3b8a3b' stroke='#1d4d1d' stroke-width='1'/>
<path d='M853.8,580.7 L853.8,579.8 L853.7,579.0 L853.5,578.1 L853.2,577.2 L852.8,576.3 L852.4,575.5 L851.9,574.6 L851.3,573.8 L850.7,573.1 L850.0,572.4 L849.2,571.7 L848.5,571.1 L847.7,570.6 L846.8,570.2 L846.0,569.8 L845.1,569.5 L844.3,569.3 L843.4,569.2 L842.6,569.2 L841.8,569.2 L841.0,569.3 L840.3,569.6 L839.6,569.9 L839.0,570.3 L838.4,570.7 L837.9,571.3 L837.5,571.9 L837.1,572.6 L836.8,573.3 L836.6,574.0 L836.5,574.8 L836.5,575.7 L836.5,576.6 L836.6,577.4 L836.8,578.3 L837.1,579.2 L837.5,580.1 L837.9,580.9 L838.4,581.8 L839.0,582.6 L839.6,583.3 L840.3,584.0 L841.0,584.7 L841.8,585.3 L842.6,585.8 L843.4,586.2 L844.3,586.6 L845.1,586.9 L846.0,587.1 L846.8,587.2 L847.7,587.2 L848.5,587.2 L849.2,587.1 L850.0,586.8 L850.7,586.5 L851.3,586.1 L851.9,585.7 L852.4,585.1 L852.8,584.5 L853.2,583.8 L853.5,583.1 L853.7,582.4 L853.8,581.6Z' fill='#7bc97b' stroke='#1d4d1d' stroke-width='1'/>
<path d='M851.7,580.1 L851.6,579.4 L851.5,578.8 L851.4,578.1 L851.2,577.4 L850.9,576.8 L850.6,576.1 L850.2,575.5 L849.8,574.9 L849.3,574.4 L848.8,573.8 L848.2,573.3 L847.6,572.9 L847.0,572.5 L846.4,572.2 L845.8,571.9 L845.1,571.7 L844.5,571.5 L843.9,571.4 L843.3,571.4 L842.7,571.5 L842.1,571.6 L841.5,571.7 L841.0,572.0 L840.5,572.3 L840.1,572.6 L839.7,573.0 L839.4,573.5 L839.1,574.0 L838.9,574.5 L838.8,575.1 L838.7,575.7 L838.6,576.3 L838.7,577.0 L838.8,577.6 L838.9,578.3 L839.1,579.0 L839.4,579.6 L839.7,580.3 L840.1,580.9 L840.5,581.5 L841.0,582.0 L841.5,582.6 L842.1,583.1 L842.7,583.5 L843.3,583.9 L843.9,584.2 L844.5,584.5 L845.1,584.7 L845.8,584.9 L846.4,585.0 L847.0,585.0 L847.6,584.9 L848.2,584.8 L848.8,584.7 L849.3,584.4 L849.8,584.1 L850.2,583.8 L850.6,583.4 L850.9,582.9 L851.2,582.4 L851.4,581.9 L851.5,581.3 L851.6,580.7Z' fill='#8fd48f'/>
<g opacity='0.8'><path d='M1106.5,576.0 L1106.2,571.2 L858.2,785.7 L858.5,790.5Z' fill='rgb(84,84,84)' stroke='#1a1a1a' stroke-width='0.8' stroke-opacity='.55'/><path d='M1106.2,571.2 L1095.7,552.0 L847.7,766.5 L858.2,785.7Z' fill='rgb(77,77,77)' stroke='#1a1a1a' stroke-width='0.8' stroke-opacity='.55'/><path d='M1095.7,552.0 L1091.5,548.7 L843.5,763.2 L847.7,766.5Z' fill='rgb(158,158,158)' stroke='#1a1a1a' stroke-width='0.8' stroke-opacity='.55'/><path d='M1091.5,548.7 L1072.2,544.1 L824.3,758.6 L843.5,763.2Z' fill='rgb(79,79,79)' stroke='#1a1a1a' stroke-width='0.8' stroke-opacity='.55'/><path d='M1072.2,544.1 L1068.3,545.5 L820.3,760.0 L824.3,758.6Z' fill='rgb(149,149,149)' stroke='#1a1a1a' stroke-width='0.8' stroke-opacity='.55'/><path d='M1097.7,590.7 L1106.5,576.0 L858.5,790.5 L849.7,805.1Z' fill='rgb(61,61,61)' stroke='#1a1a1a' stroke-width='0.8' stroke-opacity='.55'/><path d='M858.5,790.5 L858.2,785.7 L847.7,766.5 L843.5,763.2 L824.3,758.6 L820.3,760.0 L811.6,774.7 L811.8,779.5 L822.3,798.7 L826.5,802.0 L845.8,806.6 L849.7,805.1Z' fill='#474747' stroke='#1a1a1a' stroke-width='0.9'/><path d='M842.2,784.7 L842.0,783.2 L841.6,781.8 L841.0,780.3 L840.1,779.0 L839.0,777.8 L837.8,776.8 L836.4,776.0 L835.0,775.4 L833.6,775.2 L832.3,775.2 L831.0,775.5 L830.0,776.1 L829.1,776.9 L828.4,777.9 L828.0,779.2 L827.9,780.5 L828.0,782.0 L828.4,783.4 L829.1,784.8 L830.0,786.2 L831.0,787.4 L832.3,788.4 L833.6,789.2 L835.0,789.7 L836.4,790.0 L837.8,790.0 L839.0,789.7 L840.1,789.1 L841.0,788.3 L841.6,787.2 L842.0,786.0Z' fill='#8a8a8a' stroke='#222' stroke-width='.7'/><path d='M839.3,783.8 L839.2,782.7 L838.7,781.5 L838.1,780.4 L837.2,779.5 L836.1,778.8 L835.0,778.3 L833.9,778.1 L832.9,778.2 L832.0,778.7 L831.3,779.4 L830.9,780.3 L830.7,781.3 L830.9,782.5 L831.3,783.7 L832.0,784.7 L832.9,785.7 L833.9,786.4 L835.0,786.9 L836.1,787.1 L837.2,786.9 L838.1,786.5 L838.7,785.8 L839.2,784.9Z' fill='#b5b5b5'/></g>
<path d='M1117.9,593.2 L1117.7,588.5 L1117.0,583.6 L1115.9,578.7 L1114.3,573.8 L1112.3,569.0 L1109.9,564.2 L1107.1,559.7 L1103.9,555.3 L1100.4,551.1 L1096.6,547.2 L1092.6,543.6 L1088.3,540.4 L1083.9,537.5 L1079.3,535.0 L1074.7,533.0 L1070.0,531.4 L1065.3,530.3 L1060.6,529.6 L1056.0,529.4 L1051.6,529.7 L1047.4,530.5 L1043.3,531.8 L1039.5,533.5 L1036.1,535.6 L1032.9,538.2 L1030.1,541.2 L1027.7,544.5 L1025.7,548.2 L1024.1,552.2 L1022.9,556.4 L1022.2,560.9 L1022.0,565.5 L1022.2,570.3 L1022.9,575.1 L1024.1,580.0 L1025.7,584.9 L1027.7,589.8 L1030.1,594.5 L1032.9,599.1 L1036.1,603.5 L1039.5,607.7 L1043.3,611.6 L1047.4,615.1 L1051.6,618.4 L1056.0,621.2 L1060.6,623.7 L1065.3,625.7 L1070.0,627.3 L1074.7,628.5 L1079.3,629.1 L1083.9,629.3 L1088.3,629.0 L1092.6,628.2 L1096.6,627.0 L1100.4,625.2 L1103.9,623.1 L1107.1,620.5 L1109.9,617.5 L1112.3,614.2 L1114.3,610.5 L1115.9,606.6 L1117.0,602.3 L1117.7,597.9Z' fill='none' stroke='#111' stroke-width='1' opacity='.55'/>
<path d='M1131.0,582.0 L1130.7,577.2 L1130.0,572.3 L1128.9,567.4 L1127.3,562.6 L1125.3,557.7 L1122.9,553.0 L1120.1,548.4 L1116.9,544.0 L1113.4,539.8 L1109.7,535.9 L1105.6,532.3 L1101.4,529.1 L1096.9,526.2 L1092.4,523.8 L1087.7,521.7 L1083.0,520.1 L1078.3,519.0 L1073.6,518.3 L1069.1,518.2 L1064.6,518.5 L1060.4,519.3 L1056.3,520.5 L1052.6,522.2 L1049.1,524.4 L1045.9,527.0 L1043.1,529.9 L1040.7,533.3 L1038.7,536.9 L1037.1,540.9 L1036.0,545.1 L1035.3,549.6 L1035.0,554.2 L1035.3,559.0 L1036.0,563.9 L1037.1,568.8 L1038.7,573.6 L1040.7,578.5 L1043.1,583.2 L1045.9,587.8 L1049.1,592.2 L1052.6,596.4 L1056.3,600.3 L1060.4,603.9 L1064.6,607.1 L1069.1,610.0 L1073.6,612.4 L1078.3,614.5 L1083.0,616.1 L1087.7,617.2 L1092.4,617.9 L1096.9,618.0 L1101.4,617.7 L1105.6,616.9 L1109.7,615.7 L1113.4,614.0 L1116.9,611.8 L1120.1,609.2 L1122.9,606.3 L1125.3,602.9 L1127.3,599.3 L1128.9,595.3 L1130.0,591.1 L1130.7,586.6Z' fill='none' stroke='#111' stroke-width='1' opacity='.45' clip-path='url(#hc3)'/>
<path d='M835.0,782.6L805.0,808.6' stroke='#eee' stroke-width='1.2'/>
<path d='M818,788 L807,807 L830,802 Z' fill='none' stroke='#888' stroke-width='2.6'/><path d='M818,788 L807,807 L830,802 Z' fill='none' stroke='#fff' stroke-width='1'/>
<g transform='translate(1083.0,568.1)'><ellipse cx='0' cy='0' rx='15' ry='15.5' fill='none' stroke='#f0c040' stroke-width='2'/><path d='M0,0 L1,15 A15,15 0 0 0 14,5 Z' fill='#f0c040'/><path d='M0,0 L12,-10' stroke='#7fc3ea' stroke-width='2.5'/><path d='M18,3 L25,6' stroke='#e88' stroke-width='2'/><path d='M-1,18 L-1,28' stroke='#8d8' stroke-width='2'/><circle cx='0' cy='0' r='4' fill='#111'/><circle cx='0' cy='0' r='1.8' fill='#fff'/></g>
</svg>
<div class='a' style='left:322px;top:80px;width:221px;height:490px;background:#fff;box-shadow:0 3px 9px rgba(0,0,0,0.22),0 0 2px rgba(0,0,0,0.12)'></div>
<div class='t' style='left:328px;top:87.7px;font-size:13.0px;color:#222;font-weight:normal;font-style:normal;-webkit-text-stroke:0.3px #222'>Output Shaft</div>
<div class='a' style='left:487px;top:79px;width:28px;height:28px;background:#169a1c'></div>
<svg style='left:492.0px;top:84.0px' width='18' height='18' viewBox='0 0 20 20'><path d='M3 10l5 5 9-10' fill='none' stroke='#fff' stroke-width='3.2'/></svg>
<svg style='left:520.5px;top:86.5px' width='15' height='15' viewBox='0 0 20 20'><path d='M4 4l12 12M16 4L4 16' stroke='#c8202e' stroke-width='3'/></svg>
<div class='a' style='left:322px;top:107px;width:221px;height:1px;background:#e2e2e2'></div>
<div class='t' style='left:363px;top:115.1px;font-size:12.6px;color:#1c56b3;font-weight:normal;font-style:normal;-webkit-text-stroke:0.25px #1c56b3'>Inch</div>
<div class='t' style='left:468px;top:115.3px;font-size:12.4px;color:#333;font-weight:normal;font-style:normal;'>Metric</div>
<div class='a' style='left:322px;top:133px;width:221px;height:1px;background:#dddddd'></div>
<div class='a' style='left:322px;top:131px;width:105px;height:3px;background:#1c56b3'></div>
<div class='a' style='left:325px;top:141px;width:189px;height:43px;background:#dcedf9;border:1.5px solid #3b73c2;border-radius:3px'></div>
<div class='t' style='left:331px;top:148.8px;font-size:9.6px;color:#444;font-weight:normal;font-style:normal;'>Sketch point to place shaft</div>
<div class='t' style='left:332px;top:167.6px;font-size:13.2px;color:#444;font-weight:normal;font-style:normal;'>Mate connector</div>
<svg style='left:473.0px;top:167.0px' width='14' height='14' viewBox='0 0 20 20'><circle cx='10' cy='10' r='8' fill='none' stroke='#666' stroke-width='1.3'/><circle cx='10' cy='10' r='5.7' fill='none' stroke='#666' stroke-width='1.1'/><path d='M10 4.3V10h5.7' fill='none' stroke='#666' stroke-width='1.1'/></svg>
<svg style='left:492.5px;top:167.5px' width='11' height='11' viewBox='0 0 20 20'><path d='M5 5l10 10M15 5L5 15' stroke='#555' stroke-width='1.6'/></svg>
<svg style='left:517.5px;top:143.5px' width='19' height='19' viewBox='0 0 20 20'><circle cx='10' cy='10' r='8.5' fill='none' stroke='#444' stroke-width='1.4'/><circle cx='10' cy='10' r='6' fill='none' stroke='#444' stroke-width='1.2'/><path d='M10 4V10h6' fill='none' stroke='#444' stroke-width='1.2'/></svg>
<svg style='left:325.5px;top:197.5px' width='13' height='13' viewBox='0 0 20 20'><path d='M3 6l7 7 7-7' fill='none' stroke='#555' stroke-width='2.6'/></svg>
<div class='t' style='left:346px;top:198.6px;font-size:13.2px;color:#555;font-weight:normal;font-style:normal;'>Shaft</div>
<div class='a' style='left:332px;top:218px;width:1px;height:82px;background:#d0d0d0'></div>
<div class='a' style='left:327px;top:299px;width:10px;height:1px;background:#d0d0d0'></div>
<div class='t' style='left:347px;top:227.1px;font-size:12.6px;color:#555;font-weight:normal;font-style:normal;'>Shaft type</div>
<div class='t' style='left:412px;top:224.2px;font-size:13.6px;color:#333;font-weight:normal;font-style:normal;'>Hex</div>
<div class='a' style='left:406px;top:243px;width:111px;height:1px;background:#cfcfcf'></div>
<svg style='left:502.0px;top:225.0px' width='10' height='10' viewBox='0 0 20 20'><path d='M3 7h14l-7 7z' fill='#333'/></svg>
<div class='t' style='left:347px;top:255.1px;font-size:12.6px;color:#555;font-weight:normal;font-style:normal;'>Hex type</div>
<div class='t' style='left:404px;top:252.2px;font-size:13.6px;color:#333;font-weight:normal;font-style:normal;'>Rounded hex</div>
<div class='a' style='left:398px;top:271px;width:119px;height:1px;background:#cfcfcf'></div>
<svg style='left:502.0px;top:253.0px' width='10' height='10' viewBox='0 0 20 20'><path d='M3 7h14l-7 7z' fill='#333'/></svg>
<div class='t' style='left:347px;top:283.1px;font-size:12.6px;color:#555;font-weight:normal;font-style:normal;'>Shaft size</div>
<div class='t' style='left:409px;top:280.2px;font-size:13.6px;color:#333;font-weight:normal;font-style:normal;'>1/2 in.</div>
<div class='a' style='left:402px;top:298px;width:115px;height:1px;background:#cfcfcf'></div>
<svg style='left:502.0px;top:281.0px' width='10' height='10' viewBox='0 0 20 20'><path d='M3 7h14l-7 7z' fill='#333'/></svg>
<svg style='left:325.5px;top:309.5px' width='13' height='13' viewBox='0 0 20 20'><path d='M3 6l7 7 7-7' fill='none' stroke='#555' stroke-width='2.6'/></svg>
<div class='t' style='left:346px;top:310.6px;font-size:13.2px;color:#555;font-weight:normal;font-style:normal;'>Extrude</div>
<div class='a' style='left:332px;top:330px;width:1px;height:135px;background:#d0d0d0'></div>
<div class='a' style='left:327px;top:464px;width:10px;height:1px;background:#d0d0d0'></div>
<div class='t' style='left:348px;top:336.2px;font-size:13.6px;color:#333;font-weight:normal;font-style:normal;'>Blind</div>
<div class='a' style='left:342px;top:354px;width:175px;height:1px;background:#cfcfcf'></div>
<svg style='left:502.0px;top:336.0px' width='10' height='10' viewBox='0 0 20 20'><path d='M3 7h14l-7 7z' fill='#333'/></svg>
<svg style='left:520.0px;top:333.0px' width='18' height='18' viewBox='0 0 20 20'><path d='M3 17L15 5' stroke='#222' stroke-width='2.2'/><path d='M8 4h9v9z' fill='#222'/><path d='M14 17l4-4' stroke='#999' stroke-width='1.2'/></svg>
<div class='t' style='left:347px;top:366.1px;font-size:12.6px;color:#555;font-weight:normal;font-style:normal;'>Depth</div>
<div class='t' style='left:493px;top:365.9px;font-size:12.8px;color:#333;font-weight:normal;font-style:normal;'>5 in</div>
<div class='a' style='left:384px;top:382px;width:133px;height:1px;background:#cfcfcf'></div>
<svg style='left:346.0px;top:391.0px' width='12' height='12' viewBox='0 0 20 20'><path d='M7 3l7 7-7 7' fill='none' stroke='#bdbdbd' stroke-width='2.2'/></svg>
<div class='a' style='left:366px;top:391px;width:12px;height:12px;border:1px solid #666;border-radius:2px;background:#fff'></div>
<div class='t' style='left:382px;top:391.9px;font-size:12.8px;color:#555;font-weight:normal;font-style:normal;'>Starting offset</div>
<div class='a' style='left:346px;top:418px;width:12px;height:12px;border:1px solid #666;border-radius:2px;background:#fff'></div>
<div class='t' style='left:362px;top:418.9px;font-size:12.8px;color:#555;font-weight:normal;font-style:normal;'>Symmetric</div>
<svg style='left:346.0px;top:446.0px' width='12' height='12' viewBox='0 0 20 20'><path d='M7 3l7 7-7 7' fill='none' stroke='#bdbdbd' stroke-width='2.2'/></svg>
<div class='a' style='left:366px;top:445px;width:12px;height:12px;border:1px solid #666;border-radius:2px;background:#fff'></div>
<div class='t' style='left:382px;top:446.9px;font-size:12.8px;color:#555;font-weight:normal;font-style:normal;'>Second end position</div>
<svg style='left:325.5px;top:472.5px' width='13' height='13' viewBox='0 0 20 20'><path d='M3 6l7 7 7-7' fill='none' stroke='#555' stroke-width='2.6'/></svg>
<div class='t' style='left:346px;top:473.6px;font-size:13.2px;color:#555;font-weight:normal;font-style:normal;'>Shaft ends</div>
<div class='a' style='left:332px;top:492px;width:1px;height:55px;background:#d0d0d0'></div>
<div class='a' style='left:327px;top:546px;width:10px;height:1px;background:#d0d0d0'></div>
<svg style='left:346.0px;top:500.0px' width='12' height='12' viewBox='0 0 20 20'><path d='M7 3l7 7-7 7' fill='none' stroke='#bdbdbd' stroke-width='2.2'/></svg>
<div class='a' style='left:366px;top:500px;width:12px;height:12px;border:1px solid #666;border-radius:2px;background:#fff'></div>
<div class='t' style='left:382px;top:500.9px;font-size:12.8px;color:#555;font-weight:normal;font-style:normal;'>Modify first end</div>
<svg style='left:346.0px;top:528.0px' width='12' height='12' viewBox='0 0 20 20'><path d='M7 3l7 7-7 7' fill='none' stroke='#bdbdbd' stroke-width='2.2'/></svg>
<div class='a' style='left:366px;top:527px;width:12px;height:12px;border:1px solid #666;border-radius:2px;background:#fff'></div>
<div class='t' style='left:382px;top:528.9px;font-size:12.8px;color:#555;font-weight:normal;font-style:normal;'>Modify second end</div>
<div class='a' style='left:329px;top:560px;width:112px;height:2px;background:#666'></div>
<div class='a' style='left:400.5px;top:555px;width:11px;height:11px;border-radius:50%;background:#fff;border:1px solid #888;box-shadow:0 1px 3px rgba(0,0,0,0.35)'></div>
<svg style='left:0;top:0' width='1919' height='300' viewBox='0 0 1919 300'><path d='M1829.5,91 l8,9 h-16z' fill='#999'/><path d='M1829.5,240 l8,-9 h-16z' fill='#999'/><path d='M1756,165.5 l9,-8 v16z' fill='#999'/><path d='M1904,165.5 l-9,-8 v16z' fill='#999'/><path d='M1809,101 C1798,104 1788,110 1781,119' fill='none' stroke='#999' stroke-width='4.5'/><path d='M1773,125 l17,-4 -7,-9z' fill='#999'/><path d='M1851,101 C1862,104 1872,110 1879,119' fill='none' stroke='#999' stroke-width='4.5'/><path d='M1884,125 l-15,-2 6,-10z' fill='#999'/><path d='M1791.6,148.5 L1818.5,125.2 L1865.0,138.6 L1865.0,185.1 L1838.1,208.4 L1791.6,195.0Z' fill='#e6e9ed' stroke='#e6e9ed' stroke-width='7' stroke-linejoin='round'/><path d='M1798.5,157.5 L1831.1,166.9 L1831.1,199.4 L1798.5,190.0Z' fill='#fff' stroke='#fff' stroke-width='7' stroke-linejoin='round'/><path d='M1802.6,147.0 L1821.4,130.7 L1854.0,140.1 L1835.2,156.4Z' fill='#fff' stroke='#fff' stroke-width='7' stroke-linejoin='round'/><path d='M1842.1,165.4 L1861.0,149.1 L1861.0,181.7 L1842.1,198.0Z' fill='#fff' stroke='#fff' stroke-width='7' stroke-linejoin='round'/><ellipse cx='1836.1' cy='162.9' rx='4.3' ry='4.3' fill='#fff'/><ellipse cx='1798.9' cy='152.1' rx='4.3' ry='4.3' fill='#fff'/><ellipse cx='1857.7' cy='144.2' rx='4.3' ry='4.3' fill='#fff'/><ellipse cx='1836.1' cy='200.1' rx='4.3' ry='4.3' fill='#fff'/><ellipse cx='1798.9' cy='189.4' rx='4.3' ry='4.3' fill='#fff'/><ellipse cx='1857.7' cy='181.5' rx='4.3' ry='4.3' fill='#fff'/><ellipse cx='1820.5' cy='133.5' rx='4.3' ry='4.3' fill='#fff'/><text transform='matrix(0.961,0.278,0,1,1800.4,179.4)' font-family='Liberation Sans' font-size='12.5' fill='#222'>Front</text><text transform='matrix(0.961,0.278,-0.756,0.654,1819.8,138.8)' font-family='Liberation Sans' font-size='10' fill='#333'>Top</text><text transform='matrix(0.756,-0.654,0,1,1844.2,183.4)' font-family='Liberation Sans' font-size='10' fill='#333'>Right</text><path d='M1788.3,197.5L1816.3,176.0' stroke='#5ab55a' stroke-width='1'/><path d='M1788.3,197.5L1788.3,146.8' stroke='#2a2ab8' stroke-width='1.4'/><path d='M1788.3,197.5L1839.0,212.1' stroke='#e03a3a' stroke-width='1.4'/><text x='1783.3' y='140.8' font-family='Liberation Sans' font-size='12' font-weight='bold' fill='#2a2ab8'>Z</text><text x='1843.0' y='220.1' font-family='Liberation Sans' font-size='12.5' font-weight='bold' fill='#e03a3a'>X</text></svg>
<svg style='left:1865px;top:222px' width='40' height='20' viewBox='0 0 40 20'><path d='M10 2l8 3v9l-8 4-8-4V5z' fill='#ddd' stroke='#333' stroke-width='1.2'/><path d='M2 5l8 3 8-3M10 8v10' fill='none' stroke='#333' stroke-width='1'/><path d='M2 5l8 3v10l-8-4z' fill='#9a9a9a'/><path d='M25 8h8l-4 4z' fill='#222'/></svg>
<div class='a' style='left:1888px;top:435px;width:31px;height:127px;background:#fff;border:1px solid #cfcfcf;border-right:none'></div>
<div class='a' style='left:1888px;top:577px;width:31px;height:98px;background:#fff;border:1px solid #cfcfcf;border-right:none'></div>
<div class='a' style='left:1888px;top:467px;width:31px;height:1px;background:#cfcfcf'></div>
<div class='a' style='left:1888px;top:499px;width:31px;height:1px;background:#cfcfcf'></div>
<div class='a' style='left:1888px;top:530px;width:31px;height:1px;background:#cfcfcf'></div>
<div class='a' style='left:1888px;top:609px;width:31px;height:1px;background:#cfcfcf'></div>
<div class='a' style='left:1888px;top:641px;width:31px;height:1px;background:#cfcfcf'></div>
<svg style='left:1894.0px;top:441.0px' width='20' height='20' viewBox='0 0 20 20'><path d='M3 14l7-12 3 2-6 12z' fill='#999'/><path d='M5 15l10-10 2 3-10 9z' fill='#bbb'/><rect x='3' y='12' width='15' height='5' rx='1' fill='#eee' stroke='#777'/><circle cx='6' cy='14.5' r='1.2' fill='#555'/></svg>
<svg style='left:1894.0px;top:473.0px' width='20' height='20' viewBox='0 0 20 20'><rect x='2' y='2' width='8' height='7' fill='#2a62c0'/><path d='M2 4.3h8M2 6.6h8M4.7 2v7M7.4 2v7' stroke='#fff' stroke-width='.6'/><path d='M10 8l7 3v7l-7-3z M10 8l-6 3v7l6-3' fill='#fff' stroke='#333' stroke-width='1.1'/></svg>
<svg style='left:1894.0px;top:505.0px' width='20' height='20' viewBox='0 0 20 20'><rect x='2' y='2' width='8' height='7' fill='#444'/><path d='M2 4.3h8M2 6.6h8M4.7 2v7M7.4 2v7' stroke='#fff' stroke-width='.6'/><path d='M6 9l5-2 5 2v6l-5 2-5-2z' fill='#fff' stroke='#333'/><path d='M16 5c2 2 2 10 0 12M4 11c-1 2-1 5 0 7' fill='none' stroke='#333'/></svg>
<svg style='left:1894.0px;top:537.0px' width='20' height='20' viewBox='0 0 20 20'><rect x='2' y='2' width='8' height='7' fill='#444'/><path d='M2 4.3h8M2 6.6h8M4.7 2v7M7.4 2v7' stroke='#fff' stroke-width='.6'/><text x='12' y='18' font-size='12' font-family='Liberation Serif' font-style='italic' font-weight='bold' text-anchor='middle' fill='#333'>(x)</text></svg>
<svg style='left:1894.0px;top:583.0px' width='20' height='20' viewBox='0 0 20 20'><rect x='0' y='0' width='20' height='20' rx='2' fill='#ddd'/><rect x='2' y='6' width='16' height='11' rx='2' fill='#222'/><circle cx='7' cy='11' r='2.6' fill='#6cb0e8'/><circle cx='13' cy='11' r='2.6' fill='#6cb0e8'/><path d='M5 2v4M10 1v5M15 2v4' stroke='#555'/></svg>
<svg style='left:1894.0px;top:616.0px' width='20' height='20' viewBox='0 0 20 20'><rect x='0' y='0' width='20' height='20' rx='2' fill='#4caf50'/><path d='M3 5c3-1 5 0 7 1v11c-2-1-4-2-7-1zM17 5c-3-1-5 0-7 1v11c2-1 4-2 7-1z' fill='#fff'/></svg>
<svg style='left:1894.0px;top:649.0px' width='20' height='20' viewBox='0 0 20 20'><rect x='0' y='0' width='20' height='20' rx='2' fill='#ccc'/><rect x='1.5' y='1.5' width='17' height='17' fill='#1f4fb0'/><path d='M3.5 5c3-1 5 0 6.5 1v10c-2-1-4-2-6.5-1zM16.5 5c-3-1-5 0-6.5 1v10c2-1 4-2 6.5-1z' fill='#fff'/></svg>
<svg style='left:1889px;top:1029px' width='22' height='15' viewBox='0 0 22 15'><path d='M1 14V12A10 10 0 0 1 21 12V14z' fill='#fff' stroke='#333' stroke-width='1.4'/><path d='M4.5 12.5A6.5 5 0 0 1 17.5 12.5' fill='none' stroke='#333' stroke-width='1.4'/><path d='M3 10A8.5 8.5 0 0 1 19 10' fill='none' stroke='#aaa' stroke-width='.8' stroke-dasharray='1 1'/></svg>
<svg style='left:40px;top:1050px' width='600' height='29' viewBox='0 0 600 29'>
<rect x='0' y='0' width='34' height='29' fill='#d6d6d6'/>
<path d='M34 1h40l8 14-8 14H34z' fill='#e4e4e4'/>
<path d='M68 1h120l8 14-8 14H68l8-14z' fill='#fbfbfb'/>
<path d='M196 1h201v28H196z' fill='#e6e6e6'/>
<path d='M190 1h6v28h-6l8-14z' fill='#d6d6d6'/>
<rect x='398' y='1' width='199' height='28' fill='#fff'/>
<rect x='398' y='26' width='199' height='2' fill='#1c56b3'/>
</svg>
<svg style='left:47.5px;top:1055.5px' width='17' height='17' viewBox='0 0 20 20'><path d='M10 3v14M3 10h14' stroke='#555' stroke-width='2.6'/></svg>
<svg style='left:83.0px;top:1054.0px' width='18' height='18' viewBox='0 0 20 20'><path d='M2 10l8-7 8 7v8h-5v-5H7v5H2z' fill='#555'/><rect x='13' y='3' width='3' height='5' fill='#555'/></svg>
<svg style='left:124.0px;top:1054.0px' width='18' height='18' viewBox='0 0 20 20'><path d='M2 4h6l2 2h8v11H2z' fill='none' stroke='#444' stroke-width='1.2'/></svg>
<div class='t' style='left:150px;top:1055.5px;font-size:14.6px;color:#555;font-weight:normal;font-style:normal;;transform:scaleX(0.925);transform-origin:0 0'>Exercise 2</div>
<svg style='left:249.0px;top:1055.0px' width='14' height='14' viewBox='0 0 20 20'><circle cx='10' cy='10' r='8' fill='#6a9ce0'/><path d='M10 3v3M10 14v3' stroke='#fff' stroke-width='2'/><circle cx='10' cy='10' r='3' fill='#fff'/></svg>
<svg style='left:266.0px;top:1054.0px' width='18' height='18' viewBox='0 0 20 20'><path d='M4 3h9l4 4v10H8l-4-4z' fill='#fff' stroke='#333' stroke-width='1.1'/><path d='M4 3l4 4h9M8 7v10' fill='none' stroke='#333'/><rect x='6' y='5' width='8' height='8' fill='#888'/></svg>
<div class='t' style='left:288px;top:1056.1px;font-size:14.8px;color:#555;font-weight:normal;font-style:normal;;transform:scaleX(0.935);transform-origin:0 0'>Exercise 2 Assembly</div>
<svg style='left:449.0px;top:1054.0px' width='18' height='18' viewBox='0 0 20 20'><path d='M2 6h5v12H2zM7 4l3-2h6v16H7' fill='#fff' stroke='#333' stroke-width='1.1'/><path d='M10 2v16' stroke='#333'/></svg>
<div class='t' style='left:471px;top:1056.1px;font-size:14.8px;color:#333;font-weight:normal;font-style:normal;;transform:scaleX(0.905);transform-origin:0 0'>Exercise 2 Part Studio</div>
</body></html>
